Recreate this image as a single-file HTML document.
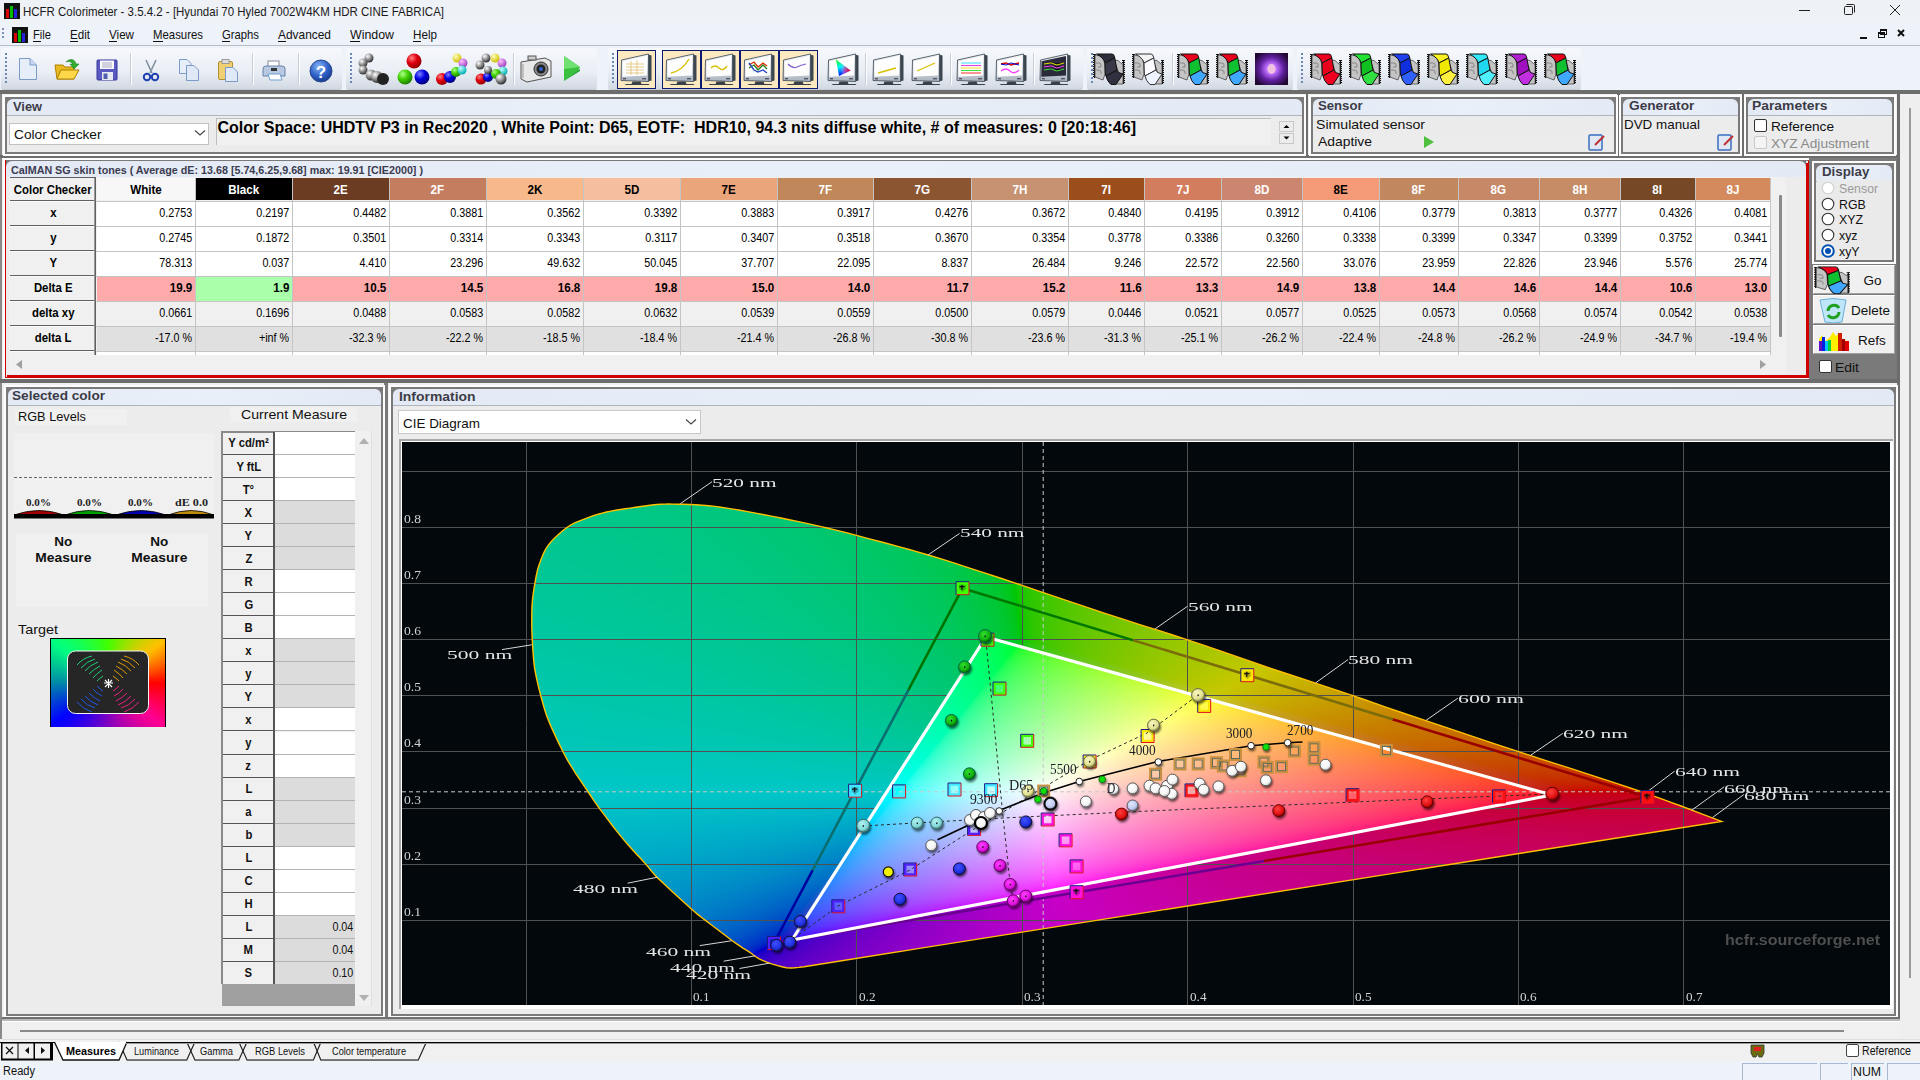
<!DOCTYPE html><html><head><meta charset="utf-8"><title>HCFR</title><style>*{margin:0;padding:0}
html,body{width:1920px;height:1080px;overflow:hidden;background:#f0f0f0;font-family:"Liberation Sans",sans-serif}
.r{position:absolute}
.t{position:absolute;white-space:pre;line-height:1;}
</style></head><body>
<div class="r" style="left:0px;top:0px;width:1920px;height:22px;background:#eef1f6"></div>
<svg class="r" style="left:4px;top:3px" width="16" height="16"><defs><linearGradient id="ig" x1="0" y1="0" x2="0" y2="1"><stop offset="0" stop-color="#fff"/><stop offset="1" stop-color="#000"/></linearGradient></defs><rect x="0" y="0" width="16" height="16" fill="#111"/><rect x="2" y="6" width="3" height="9" fill="#d00"/><rect x="6" y="3" width="3" height="12" fill="#0b0"/><rect x="10" y="6" width="3" height="9" fill="#22d"/></svg>
<svg class="r" style="left:1790px;top:0px" width="130" height="22"><line x1="9" y1="10.5" x2="20" y2="10.5" stroke="#222" stroke-width="1"/><rect x="54.5" y="6.5" width="8" height="8" fill="none" stroke="#222" stroke-width="1" rx="1"/><path d="M56.5 4.5 h7 a1 1 0 0 1 1 1 v7" fill="none" stroke="#222"/><path d="M100 5 L110 15 M110 5 L100 15" stroke="#222" stroke-width="1"/></svg>
<div class="r" style="left:0px;top:22px;width:1920px;height:23px;background:#eef3fa"></div>
<div class="r" style="left:0px;top:45px;width:1920px;height:1px;background:#b8bcc4"></div>
<svg class="r" style="left:2px;top:26px" width="30" height="18"><g fill="#7b93b8"><rect x="0" y="2" width="2" height="2"/><rect x="0" y="6" width="2" height="2"/><rect x="0" y="10" width="2" height="2"/></g><rect x="10" y="1" width="16" height="16" fill="#111"/><rect x="12" y="7" width="3" height="9" fill="#d00"/><rect x="16" y="4" width="3" height="12" fill="#0b0"/><rect x="20" y="7" width="3" height="9" fill="#22d"/></svg>
<div class="r" style="left:33px;top:41px;width:8px;height:1px;background:#111"></div>
<div class="r" style="left:70px;top:41px;width:8px;height:1px;background:#111"></div>
<div class="r" style="left:109px;top:41px;width:8px;height:1px;background:#111"></div>
<div class="r" style="left:153px;top:41px;width:10px;height:1px;background:#111"></div>
<div class="r" style="left:222px;top:41px;width:8px;height:1px;background:#111"></div>
<div class="r" style="left:278px;top:41px;width:8px;height:1px;background:#111"></div>
<div class="r" style="left:350px;top:41px;width:10px;height:1px;background:#111"></div>
<div class="r" style="left:413px;top:41px;width:8px;height:1px;background:#111"></div>
<svg class="r" style="left:1850px;top:26px" width="70" height="16"><rect x="10" y="11" width="7" height="2" fill="#111"/><rect x="28.5" y="6.5" width="6" height="5" fill="none" stroke="#111"/><rect x="30.5" y="3.5" width="6" height="5" fill="none" stroke="#111"/><rect x="28" y="6" width="7" height="2" fill="#111"/><rect x="30" y="3" width="7" height="2" fill="#111"/><path d="M48 4 L54 10 M54 4 L48 10" stroke="#111" stroke-width="2"/></svg>
<div class="r" style="left:0px;top:46px;width:1920px;height:45px;background:#eef3fa"></div>
<div class="r" style="left:1px;top:48px;width:341px;height:41px;background:linear-gradient(#f6f8fc,#e9eef5 60%,#d3d9e2);border-radius:3px;border-bottom:1px solid #c5ccd6"></div>
<svg class="r" style="left:5px;top:53px" width="3" height="32"><g fill="#6b87b5"><rect x="0" y="0" width="2" height="2"/><rect x="0" y="4" width="2" height="2"/><rect x="0" y="8" width="2" height="2"/><rect x="0" y="12" width="2" height="2"/><rect x="0" y="16" width="2" height="2"/><rect x="0" y="20" width="2" height="2"/><rect x="0" y="24" width="2" height="2"/><rect x="0" y="28" width="2" height="2"/></g></svg>
<div class="r" style="left:346px;top:48px;width:251px;height:41px;background:linear-gradient(#f6f8fc,#e9eef5 60%,#d3d9e2);border-radius:3px;border-bottom:1px solid #c5ccd6"></div>
<svg class="r" style="left:350px;top:53px" width="3" height="32"><g fill="#6b87b5"><rect x="0" y="0" width="2" height="2"/><rect x="0" y="4" width="2" height="2"/><rect x="0" y="8" width="2" height="2"/><rect x="0" y="12" width="2" height="2"/><rect x="0" y="16" width="2" height="2"/><rect x="0" y="20" width="2" height="2"/><rect x="0" y="24" width="2" height="2"/><rect x="0" y="28" width="2" height="2"/></g></svg>
<div class="r" style="left:608px;top:48px;width:475px;height:41px;background:linear-gradient(#f6f8fc,#e9eef5 60%,#d3d9e2);border-radius:3px;border-bottom:1px solid #c5ccd6"></div>
<svg class="r" style="left:612px;top:53px" width="3" height="32"><g fill="#6b87b5"><rect x="0" y="0" width="2" height="2"/><rect x="0" y="4" width="2" height="2"/><rect x="0" y="8" width="2" height="2"/><rect x="0" y="12" width="2" height="2"/><rect x="0" y="16" width="2" height="2"/><rect x="0" y="20" width="2" height="2"/><rect x="0" y="24" width="2" height="2"/><rect x="0" y="28" width="2" height="2"/></g></svg>
<div class="r" style="left:1087px;top:48px;width:206px;height:41px;background:linear-gradient(#f6f8fc,#e9eef5 60%,#d3d9e2);border-radius:3px;border-bottom:1px solid #c5ccd6"></div>
<svg class="r" style="left:1091px;top:53px" width="3" height="32"><g fill="#6b87b5"><rect x="0" y="0" width="2" height="2"/><rect x="0" y="4" width="2" height="2"/><rect x="0" y="8" width="2" height="2"/><rect x="0" y="12" width="2" height="2"/><rect x="0" y="16" width="2" height="2"/><rect x="0" y="20" width="2" height="2"/><rect x="0" y="24" width="2" height="2"/><rect x="0" y="28" width="2" height="2"/></g></svg>
<div class="r" style="left:1297px;top:48px;width:284px;height:41px;background:linear-gradient(#f6f8fc,#e9eef5 60%,#d3d9e2);border-radius:3px;border-bottom:1px solid #c5ccd6"></div>
<svg class="r" style="left:1301px;top:53px" width="3" height="32"><g fill="#6b87b5"><rect x="0" y="0" width="2" height="2"/><rect x="0" y="4" width="2" height="2"/><rect x="0" y="8" width="2" height="2"/><rect x="0" y="12" width="2" height="2"/><rect x="0" y="16" width="2" height="2"/><rect x="0" y="20" width="2" height="2"/><rect x="0" y="24" width="2" height="2"/><rect x="0" y="28" width="2" height="2"/></g></svg>
<div class="r" style="left:130px;top:53px;width:1px;height:32px;background:#c8ced8;border-right:1px solid #fff"></div>
<div class="r" style="left:252px;top:53px;width:1px;height:32px;background:#c8ced8;border-right:1px solid #fff"></div>
<div class="r" style="left:298px;top:53px;width:1px;height:32px;background:#c8ced8;border-right:1px solid #fff"></div>
<div class="r" style="left:513px;top:53px;width:1px;height:32px;background:#c8ced8;border-right:1px solid #fff"></div>
<div class="r" style="left:865px;top:53px;width:1px;height:32px;background:#c8ced8;border-right:1px solid #fff"></div>
<div class="r" style="left:950px;top:53px;width:1px;height:32px;background:#c8ced8;border-right:1px solid #fff"></div>
<div class="r" style="left:1033px;top:53px;width:1px;height:32px;background:#c8ced8;border-right:1px solid #fff"></div>
<div class="r" style="left:1172px;top:53px;width:1px;height:32px;background:#c8ced8;border-right:1px solid #fff"></div>
<div class="r" style="left:0px;top:90px;width:1920px;height:4px;background:#6d6d6d"></div>
<svg width="0" height="0" style="position:absolute"><defs>
<radialGradient id="gG" cx="0.35" cy="0.3" r="0.7"><stop offset="0" stop-color="#fff"/><stop offset="1" stop-color="#333"/></radialGradient>
<radialGradient id="gR" cx="0.35" cy="0.3" r="0.7"><stop offset="0" stop-color="#ff8080"/><stop offset="0.5" stop-color="#e00010"/><stop offset="1" stop-color="#900"/></radialGradient>
<radialGradient id="gGr" cx="0.35" cy="0.3" r="0.7"><stop offset="0" stop-color="#b0ff90"/><stop offset="0.5" stop-color="#40d000"/><stop offset="1" stop-color="#208000"/></radialGradient>
<radialGradient id="gB" cx="0.35" cy="0.3" r="0.7"><stop offset="0" stop-color="#8080ff"/><stop offset="0.5" stop-color="#0000e0"/><stop offset="1" stop-color="#000080"/></radialGradient>
<radialGradient id="gY" cx="0.35" cy="0.3" r="0.7"><stop offset="0" stop-color="#ffffc0"/><stop offset="1" stop-color="#d0c000"/></radialGradient>
<radialGradient id="gM" cx="0.35" cy="0.3" r="0.7"><stop offset="0" stop-color="#ffc0ff"/><stop offset="1" stop-color="#a040c0"/></radialGradient>
<radialGradient id="gC" cx="0.35" cy="0.3" r="0.7"><stop offset="0" stop-color="#c0ffff"/><stop offset="1" stop-color="#00b0b0"/></radialGradient>
<linearGradient id="mon" x1="0" y1="0" x2="0" y2="1"><stop offset="0" stop-color="#f4f6f8"/><stop offset="1" stop-color="#aab4c0"/></linearGradient>
<radialGradient id="gal" cx="0.5" cy="0.5" r="0.6"><stop offset="0" stop-color="#fff"/><stop offset="0.25" stop-color="#c070ff"/><stop offset="0.6" stop-color="#6020a0"/><stop offset="1" stop-color="#200830"/></radialGradient>
</defs></svg>
<svg class="r" style="left:18px;top:57px" width="20" height="24" viewBox="0 0 20 24"><path d="M1.5 1.5 H12 L18.5 8 V22.5 H1.5 Z" fill="#e6eefa" stroke="#7c9ac8"/><path d="M12 1.5 V8 H18.5" fill="#c8d8f0" stroke="#7c9ac8"/></svg>
<svg class="r" style="left:54px;top:58px" width="26" height="23" viewBox="0 0 26 23"><path d="M1 7 H9 L11 9 H20 V21 H3 Z" fill="#e8b820" stroke="#b08000"/><path d="M3 21 L7 12 H25 L20 21 Z" fill="#ffd84a" stroke="#b08000"/><path d="M12 4 C16 0 21 1 22 6 L25 6 L20 11 L16 6 L19 6 C17 3 14 3 12 4Z" fill="#30b030" stroke="#208020" stroke-width="0.6"/></svg>
<svg class="r" style="left:96px;top:59px" width="22" height="22" viewBox="0 0 22 22"><rect x="1" y="1" width="20" height="20" rx="1" fill="#5a5ac0" stroke="#34349a"/><rect x="4" y="1.5" width="14" height="8.5" fill="#f8f8ff"/><line x1="6" y1="4" x2="16" y2="4" stroke="#aab"/><line x1="6" y1="6" x2="16" y2="6" stroke="#aab"/><line x1="6" y1="8" x2="16" y2="8" stroke="#aab"/><rect x="6" y="13" width="11" height="8" fill="#e8e8f0"/><rect x="7.5" y="14.5" width="4" height="5.5" fill="#5060b0"/></svg>
<svg class="r" style="left:142px;top:59px" width="18" height="23" viewBox="0 0 18 23"><path d="M4 1 L10 14 M14 1 L8 14" stroke="#8090a0" stroke-width="1.6"/><circle cx="5" cy="18" r="3.2" fill="none" stroke="#1f40b0" stroke-width="2"/><circle cx="13" cy="18" r="3.2" fill="none" stroke="#1f40b0" stroke-width="2"/></svg>
<svg class="r" style="left:178px;top:58px" width="22" height="23" viewBox="0 0 22 23"><path d="M1.5 1.5 H9 L13 5.5 V15.5 H1.5Z" fill="#e6eefa" stroke="#7c9ac8"/><path d="M8.5 7.5 H16 L20.5 12 V22.5 H8.5Z" fill="#dfe9f8" stroke="#7c9ac8"/></svg>
<svg class="r" style="left:217px;top:58px" width="22" height="24" viewBox="0 0 22 24"><rect x="1.5" y="3.5" width="14" height="18" rx="1.5" fill="#f0d070" stroke="#b09030"/><rect x="5" y="1.5" width="7" height="4" fill="#ddd" stroke="#999"/><path d="M8.5 9.5 H16 L20.5 14 V23.5 H8.5Z" fill="#dfe9f8" stroke="#7c9ac8"/></svg>
<svg class="r" style="left:262px;top:59px" width="24" height="22" viewBox="0 0 24 22"><rect x="6" y="2" width="11" height="7" fill="#fff" stroke="#889"/><path d="M1 10 Q1 7 4 7 H20 Q23 7 23 10 V17 H1Z" fill="#b8c8e0" stroke="#6880a8"/><rect x="9" y="9" width="6" height="3" fill="#333"/><path d="M6 15 H18 L20 21 H8Z" fill="#fff" stroke="#6fa0d0"/></svg>
<svg class="r" style="left:309px;top:59px" width="24" height="24" viewBox="0 0 24 24"><defs><radialGradient id="hg" cx="0.4" cy="0.3" r="0.7"><stop offset="0" stop-color="#8ab4f8"/><stop offset="0.6" stop-color="#2f62c8"/><stop offset="1" stop-color="#1a3c90"/></radialGradient></defs><circle cx="12" cy="12" r="11" fill="url(#hg)" stroke="#2a4a90" stroke-width="1"/><text x="12" y="18.5" font-family="Liberation Sans" font-weight="bold" font-size="17" fill="#fff" text-anchor="middle">?</text></svg>
<svg class="r" style="left:357px;top:53px" width="33" height="33" viewBox="0 0 33 33"><circle cx="12" cy="5" r="4.5" fill="url(#gG)"/><circle cx="6" cy="10" r="4.5" fill="url(#gG)"/><circle cx="6" cy="17" r="4.5" fill="url(#gG)"/><circle cx="14" cy="22" r="5.5" fill="url(#gG)"/><circle cx="20" cy="24" r="6" fill="url(#gG)"/><circle cx="26" cy="26" r="6" fill="#222"/></svg>
<svg class="r" style="left:397px;top:53px" width="33" height="33" viewBox="0 0 33 33"><circle cx="17" cy="8" r="7.5" fill="url(#gR)"/><circle cx="8" cy="24" r="7.5" fill="url(#gGr)"/><circle cx="25" cy="24" r="7.5" fill="url(#gB)"/></svg>
<svg class="r" style="left:436px;top:53px" width="33" height="33" viewBox="0 0 33 33"><circle cx="21" cy="5" r="4.5" fill="url(#gY)"/><circle cx="27" cy="10" r="4.5" fill="url(#gM)"/><circle cx="6" cy="26" r="6" fill="url(#gR)"/><circle cx="14" cy="24" r="6" fill="url(#gB)"/><circle cx="20" cy="19" r="5" fill="url(#gGr)"/><circle cx="26" cy="17" r="4.5" fill="url(#gC)"/></svg>
<svg class="r" style="left:475px;top:53px" width="33" height="33" viewBox="0 0 33 33"><circle cx="11" cy="5" r="4.5" fill="url(#gG)"/><circle cx="20" cy="5" r="4.5" fill="url(#gY)"/><circle cx="27" cy="10" r="4.5" fill="url(#gM)"/><circle cx="5" cy="12" r="4.5" fill="url(#gG)"/><circle cx="28" cy="18" r="4.5" fill="url(#gC)"/><circle cx="6" cy="26" r="5.5" fill="url(#gR)"/><circle cx="13" cy="24" r="5" fill="url(#gB)"/><circle cx="21" cy="21" r="5" fill="url(#gGr)"/><circle cx="26" cy="26" r="5.5" fill="url(#gG)"/><circle cx="13" cy="17" r="4" fill="url(#gG)"/></svg>
<svg class="r" style="left:519px;top:53px" width="34" height="32" viewBox="0 0 34 32"><path d="M2 9 L26 5 L32 8 L32 24 L8 29 L2 26Z" fill="#e8e8e8" stroke="#555"/><rect x="9" y="3" width="8" height="4" fill="#ccc" stroke="#555"/><circle cx="22" cy="16" r="7" fill="#888" stroke="#333"/><circle cx="22" cy="16" r="4.5" fill="#222"/><circle cx="22" cy="16" r="2" fill="#3060d0"/><path d="M4 11 V25" stroke="#999"/></svg>
<svg class="r" style="left:563px;top:55px" width="18" height="27" viewBox="0 0 18 27"><path d="M1 1 L17 12 L15 16 L1 26Z" fill="#3cc040"/><path d="M1 1 L17 12 L1 14Z" fill="#70e070"/><path d="M1 26 L17 14 V16Z" fill="#20a030"/></svg>
<div class="r" style="left:617px;top:50px;width:39px;height:39px;background:#fde9c0;border:1px solid #0c1a70;box-sizing:border-box"></div>
<svg class="r" style="left:620px;top:53px" width="32" height="32" viewBox="0 0 32 32"><path d="M28 1.5 L31.5 2.5 V27.5 L28 28.5Z" fill="#3c4650"/><path d="M1.5 7 L28.5 1 V28.5 L1 27.5Z" fill="url(#mon)" stroke="#4a5560" stroke-width="0.9"/><path d="M2.5 8.3 L27 3 V22.5 L2.3 23.8Z" fill="#fdfdfd"/><g stroke="#e0c070" stroke-width="0.8"><path d="M6 11 H24 M6 14 H24 M6 17 H24 M6 20 H24"/><path d="M11 8 V22 M17 7 V22"/></g><rect x="3" y="25" width="3" height="1.4" fill="#556"/><rect x="22" y="25" width="4" height="1.4" fill="#556"/><path d="M12.5 28.5 H20.5 L21.5 31 H29.5 L28.5 32 H4.5 L6 31 H11.5Z" fill="#3a4048"/></svg>
<div class="r" style="left:662px;top:50px;width:39px;height:39px;background:#fde9c0;border:1px solid #0c1a70;box-sizing:border-box"></div>
<svg class="r" style="left:665px;top:53px" width="32" height="32" viewBox="0 0 32 32"><path d="M28 1.5 L31.5 2.5 V27.5 L28 28.5Z" fill="#3c4650"/><path d="M1.5 7 L28.5 1 V28.5 L1 27.5Z" fill="url(#mon)" stroke="#4a5560" stroke-width="0.9"/><path d="M2.5 8.3 L27 3 V22.5 L2.3 23.8Z" fill="#fdfdfd"/><path d="M6 20 Q17 18 24 6" stroke="#d8c000" stroke-width="1.4" fill="none"/><rect x="3" y="25" width="3" height="1.4" fill="#556"/><rect x="22" y="25" width="4" height="1.4" fill="#556"/><path d="M12.5 28.5 H20.5 L21.5 31 H29.5 L28.5 32 H4.5 L6 31 H11.5Z" fill="#3a4048"/></svg>
<div class="r" style="left:701px;top:50px;width:39px;height:39px;background:#fde9c0;border:1px solid #0c1a70;box-sizing:border-box"></div>
<svg class="r" style="left:704px;top:53px" width="32" height="32" viewBox="0 0 32 32"><path d="M28 1.5 L31.5 2.5 V27.5 L28 28.5Z" fill="#3c4650"/><path d="M1.5 7 L28.5 1 V28.5 L1 27.5Z" fill="url(#mon)" stroke="#4a5560" stroke-width="0.9"/><path d="M2.5 8.3 L27 3 V22.5 L2.3 23.8Z" fill="#fdfdfd"/><path d="M7 15 Q11 11 15 15 T23 13" stroke="#d8c000" stroke-width="1.4" fill="none"/><rect x="3" y="25" width="3" height="1.4" fill="#556"/><rect x="22" y="25" width="4" height="1.4" fill="#556"/><path d="M12.5 28.5 H20.5 L21.5 31 H29.5 L28.5 32 H4.5 L6 31 H11.5Z" fill="#3a4048"/></svg>
<div class="r" style="left:740px;top:50px;width:39px;height:39px;background:#fde9c0;border:1px solid #0c1a70;box-sizing:border-box"></div>
<svg class="r" style="left:743px;top:53px" width="32" height="32" viewBox="0 0 32 32"><path d="M28 1.5 L31.5 2.5 V27.5 L28 28.5Z" fill="#3c4650"/><path d="M1.5 7 L28.5 1 V28.5 L1 27.5Z" fill="url(#mon)" stroke="#4a5560" stroke-width="0.9"/><path d="M2.5 8.3 L27 3 V22.5 L2.3 23.8Z" fill="#fdfdfd"/><path d="M6 12 L11 9 L15 14 L20 10 L24 13" stroke="#e03000" stroke-width="1.3" fill="none"/><path d="M6 15 L11 12 L15 17 L20 12 L24 16" stroke="#208020" stroke-width="1.3" fill="none"/><path d="M6 10 L11 17 L15 19 L20 17 L24 20" stroke="#2040c0" stroke-width="1.3" fill="none"/><rect x="3" y="25" width="3" height="1.4" fill="#556"/><rect x="22" y="25" width="4" height="1.4" fill="#556"/><path d="M12.5 28.5 H20.5 L21.5 31 H29.5 L28.5 32 H4.5 L6 31 H11.5Z" fill="#3a4048"/></svg>
<div class="r" style="left:779px;top:50px;width:39px;height:39px;background:#fde9c0;border:1px solid #0c1a70;box-sizing:border-box"></div>
<svg class="r" style="left:782px;top:53px" width="32" height="32" viewBox="0 0 32 32"><path d="M28 1.5 L31.5 2.5 V27.5 L28 28.5Z" fill="#3c4650"/><path d="M1.5 7 L28.5 1 V28.5 L1 27.5Z" fill="url(#mon)" stroke="#4a5560" stroke-width="0.9"/><path d="M2.5 8.3 L27 3 V22.5 L2.3 23.8Z" fill="#fdfdfd"/><path d="M6 11 Q11 16 15 14 T24 11" stroke="#8060d0" stroke-width="1.2" fill="none"/><rect x="3" y="25" width="3" height="1.4" fill="#556"/><rect x="22" y="25" width="4" height="1.4" fill="#556"/><path d="M12.5 28.5 H20.5 L21.5 31 H29.5 L28.5 32 H4.5 L6 31 H11.5Z" fill="#3a4048"/></svg>
<svg class="r" style="left:827px;top:53px" width="32" height="32" viewBox="0 0 32 32"><path d="M28 1.5 L31.5 2.5 V27.5 L28 28.5Z" fill="#3c4650"/><path d="M1.5 7 L28.5 1 V28.5 L1 27.5Z" fill="url(#mon)" stroke="#4a5560" stroke-width="0.9"/><path d="M2.5 8.3 L27 3 V22.5 L2.3 23.8Z" fill="#fdfdfd"/><defs><linearGradient id="gt1" x1="0" y1="0" x2="0.3" y2="1"><stop offset="0" stop-color="#20ff00"/><stop offset="0.5" stop-color="#00f0ff"/><stop offset="1" stop-color="#0000ff"/></linearGradient><radialGradient id="gt2" cx="1" cy="0.65" r="0.7"><stop offset="0" stop-color="#ff0000"/><stop offset="0.6" stop-color="#ff40a0" stop-opacity="0.6"/><stop offset="1" stop-color="#fff" stop-opacity="0"/></radialGradient></defs><path d="M9 6.5 L23.5 17.5 L12 23Z" fill="url(#gt1)"/><path d="M9 6.5 L23.5 17.5 L12 23Z" fill="url(#gt2)"/><rect x="3" y="25" width="3" height="1.4" fill="#556"/><rect x="22" y="25" width="4" height="1.4" fill="#556"/><path d="M12.5 28.5 H20.5 L21.5 31 H29.5 L28.5 32 H4.5 L6 31 H11.5Z" fill="#3a4048"/></svg>
<svg class="r" style="left:872px;top:53px" width="32" height="32" viewBox="0 0 32 32"><path d="M28 1.5 L31.5 2.5 V27.5 L28 28.5Z" fill="#3c4650"/><path d="M1.5 7 L28.5 1 V28.5 L1 27.5Z" fill="url(#mon)" stroke="#4a5560" stroke-width="0.9"/><path d="M2.5 8.3 L27 3 V22.5 L2.3 23.8Z" fill="#fdfdfd"/><path d="M6 20 L24 15" stroke="#d8c000" stroke-width="1.3"/><rect x="3" y="25" width="3" height="1.4" fill="#556"/><rect x="22" y="25" width="4" height="1.4" fill="#556"/><path d="M12.5 28.5 H20.5 L21.5 31 H29.5 L28.5 32 H4.5 L6 31 H11.5Z" fill="#3a4048"/></svg>
<svg class="r" style="left:911px;top:53px" width="32" height="32" viewBox="0 0 32 32"><path d="M28 1.5 L31.5 2.5 V27.5 L28 28.5Z" fill="#3c4650"/><path d="M1.5 7 L28.5 1 V28.5 L1 27.5Z" fill="url(#mon)" stroke="#4a5560" stroke-width="0.9"/><path d="M2.5 8.3 L27 3 V22.5 L2.3 23.8Z" fill="#fdfdfd"/><path d="M6 18 L24 10" stroke="#d8c000" stroke-width="1.3"/><rect x="3" y="25" width="3" height="1.4" fill="#556"/><rect x="22" y="25" width="4" height="1.4" fill="#556"/><path d="M12.5 28.5 H20.5 L21.5 31 H29.5 L28.5 32 H4.5 L6 31 H11.5Z" fill="#3a4048"/></svg>
<svg class="r" style="left:956px;top:53px" width="32" height="32" viewBox="0 0 32 32"><path d="M28 1.5 L31.5 2.5 V27.5 L28 28.5Z" fill="#3c4650"/><path d="M1.5 7 L28.5 1 V28.5 L1 27.5Z" fill="url(#mon)" stroke="#4a5560" stroke-width="0.9"/><path d="M2.5 8.3 L27 3 V22.5 L2.3 23.8Z" fill="#fdfdfd"/><g stroke-width="1.1"><path d="M5 10 H25" stroke="#40e0ff"/><path d="M5 12.5 H25" stroke="#e040e0"/><path d="M5 15 H25" stroke="#ffe040"/><path d="M5 17.5 H25" stroke="#40e040"/><path d="M5 20 H25" stroke="#ff4040"/></g><rect x="3" y="25" width="3" height="1.4" fill="#556"/><rect x="22" y="25" width="4" height="1.4" fill="#556"/><path d="M12.5 28.5 H20.5 L21.5 31 H29.5 L28.5 32 H4.5 L6 31 H11.5Z" fill="#3a4048"/></svg>
<svg class="r" style="left:995px;top:53px" width="32" height="32" viewBox="0 0 32 32"><path d="M28 1.5 L31.5 2.5 V27.5 L28 28.5Z" fill="#3c4650"/><path d="M1.5 7 L28.5 1 V28.5 L1 27.5Z" fill="url(#mon)" stroke="#4a5560" stroke-width="0.9"/><path d="M2.5 8.3 L27 3 V22.5 L2.3 23.8Z" fill="#fdfdfd"/><path d="M6 11 L11 10 L16 12 L24 10" stroke="#d00000" stroke-width="1.3" fill="none"/><path d="M6 11 L11 12 L16 10 L24 12" stroke="#0000d0" stroke-width="1" fill="none"/><path d="M6 18 Q11 14 15 18 T24 17" stroke="#ff40ff" stroke-width="1.3" fill="none"/><rect x="3" y="25" width="3" height="1.4" fill="#556"/><rect x="22" y="25" width="4" height="1.4" fill="#556"/><path d="M12.5 28.5 H20.5 L21.5 31 H29.5 L28.5 32 H4.5 L6 31 H11.5Z" fill="#3a4048"/></svg>
<svg class="r" style="left:1039px;top:53px" width="32" height="32" viewBox="0 0 32 32"><path d="M28 1.5 L31.5 2.5 V27.5 L28 28.5Z" fill="#3c4650"/><path d="M1.5 7 L28.5 1 V28.5 L1 27.5Z" fill="url(#mon)" stroke="#4a5560" stroke-width="0.9"/><path d="M2.5 8.3 L27 3 V22.5 L2.3 23.8Z" fill="#2a2a3a"/><g stroke-width="1"><path d="M5 11 L12 10 L18 12 L25 10" stroke="#e0e000"/><path d="M5 14 L12 13 L18 15 L25 13" stroke="#ff40ff"/><path d="M5 17 L12 16 L18 18 L25 16" stroke="#40e040"/></g><rect x="3" y="25" width="3" height="1.4" fill="#556"/><rect x="22" y="25" width="4" height="1.4" fill="#556"/><path d="M12.5 28.5 H20.5 L21.5 31 H29.5 L28.5 32 H4.5 L6 31 H11.5Z" fill="#3a4048"/></svg>
<svg class="r" style="left:1093px;top:53px" width="32" height="32" viewBox="0 0 32 32"><path d="M1.5 1 V25" stroke="#111" stroke-width="3" stroke-dasharray="1,1"/><path d="M1.5 1 V25" stroke="#111" stroke-width="1.2"/><path d="M30.5 7 V31" stroke="#111" stroke-width="3" stroke-dasharray="1,1"/><path d="M30.5 7 V31" stroke="#111" stroke-width="1.2"/><path d="M2 2 L8 3 Q11 5 11.5 10 L12 21 L10 27 L2 24Z" fill="#c4c4c4" stroke="#333" stroke-width="0.7"/><path d="M21.5 7 L25 7.5 L29 11 H30 V31 H22 L26 21Z" fill="#c4c4c4" stroke="#333" stroke-width="0.7"/><path d="M3 10 H6 Q8 10 8 12 V14 H5 M3 17 H5 Q8 17 8 19 V21" fill="none" stroke="#777" stroke-width="0.8"/><path d="M3.5 1 H19 Q21 1 21.5 4 L21.8 5 L12 10 Q11 5 3.5 1Z" fill="#2c2c3a" stroke="#111" stroke-width="1"/><path d="M12 10 L21.8 5 Q23 12 24 17 L13 23 L12.4 21Z" fill="#383848" stroke="#111" stroke-width="1"/><path d="M13 23 L24 17 L25.5 19.5 L30 21 L23 31.5 H18 Q14 28 13 23Z" fill="#303040" stroke="#111" stroke-width="1"/></svg>
<svg class="r" style="left:1132px;top:53px" width="32" height="32" viewBox="0 0 32 32"><path d="M1.5 1 V25" stroke="#111" stroke-width="3" stroke-dasharray="1,1"/><path d="M1.5 1 V25" stroke="#111" stroke-width="1.2"/><path d="M30.5 7 V31" stroke="#111" stroke-width="3" stroke-dasharray="1,1"/><path d="M30.5 7 V31" stroke="#111" stroke-width="1.2"/><path d="M2 2 L8 3 Q11 5 11.5 10 L12 21 L10 27 L2 24Z" fill="#c4c4c4" stroke="#333" stroke-width="0.7"/><path d="M21.5 7 L25 7.5 L29 11 H30 V31 H22 L26 21Z" fill="#c4c4c4" stroke="#333" stroke-width="0.7"/><path d="M3 10 H6 Q8 10 8 12 V14 H5 M3 17 H5 Q8 17 8 19 V21" fill="none" stroke="#777" stroke-width="0.8"/><path d="M3.5 1 H19 Q21 1 21.5 4 L21.8 5 L12 10 Q11 5 3.5 1Z" fill="#f4f4f4" stroke="#333" stroke-width="1"/><path d="M12 10 L21.8 5 Q23 12 24 17 L13 23 L12.4 21Z" fill="#fafaff" stroke="#333" stroke-width="1"/><path d="M13 23 L24 17 L25.5 19.5 L30 21 L23 31.5 H18 Q14 28 13 23Z" fill="#eef4ff" stroke="#333" stroke-width="1"/></svg>
<svg class="r" style="left:1177px;top:53px" width="32" height="32" viewBox="0 0 32 32"><path d="M1.5 1 V25" stroke="#111" stroke-width="3" stroke-dasharray="1,1"/><path d="M1.5 1 V25" stroke="#111" stroke-width="1.2"/><path d="M30.5 7 V31" stroke="#111" stroke-width="3" stroke-dasharray="1,1"/><path d="M30.5 7 V31" stroke="#111" stroke-width="1.2"/><path d="M2 2 L8 3 Q11 5 11.5 10 L12 21 L10 27 L2 24Z" fill="#c4c4c4" stroke="#333" stroke-width="0.7"/><path d="M21.5 7 L25 7.5 L29 11 H30 V31 H22 L26 21Z" fill="#c4c4c4" stroke="#333" stroke-width="0.7"/><path d="M3 10 H6 Q8 10 8 12 V14 H5 M3 17 H5 Q8 17 8 19 V21" fill="none" stroke="#777" stroke-width="0.8"/><path d="M3.5 1 H19 Q21 1 21.5 4 L21.8 5 L12 10 Q11 5 3.5 1Z" fill="#e8001c" stroke="#111" stroke-width="1"/><path d="M12 10 L21.8 5 Q23 12 24 17 L13 23 L12.4 21Z" fill="#10c030" stroke="#111" stroke-width="1"/><path d="M13 23 L24 17 L25.5 19.5 L30 21 L23 31.5 H18 Q14 28 13 23Z" fill="#40a8ff" stroke="#111" stroke-width="1"/></svg>
<svg class="r" style="left:1216px;top:53px" width="32" height="32" viewBox="0 0 32 32"><path d="M1.5 1 V25" stroke="#111" stroke-width="3" stroke-dasharray="1,1"/><path d="M1.5 1 V25" stroke="#111" stroke-width="1.2"/><path d="M30.5 7 V31" stroke="#111" stroke-width="3" stroke-dasharray="1,1"/><path d="M30.5 7 V31" stroke="#111" stroke-width="1.2"/><path d="M2 2 L8 3 Q11 5 11.5 10 L12 21 L10 27 L2 24Z" fill="#c4c4c4" stroke="#333" stroke-width="0.7"/><path d="M21.5 7 L25 7.5 L29 11 H30 V31 H22 L26 21Z" fill="#c4c4c4" stroke="#333" stroke-width="0.7"/><path d="M3 10 H6 Q8 10 8 12 V14 H5 M3 17 H5 Q8 17 8 19 V21" fill="none" stroke="#777" stroke-width="0.8"/><path d="M3.5 1 H19 Q21 1 21.5 4 L21.8 5 L12 10 Q11 5 3.5 1Z" fill="#e8001c" stroke="#111" stroke-width="1"/><path d="M12 10 L21.8 5 Q23 12 24 17 L13 23 L12.4 21Z" fill="#10c030" stroke="#111" stroke-width="1"/><path d="M13 23 L24 17 L25.5 19.5 L30 21 L23 31.5 H18 Q14 28 13 23Z" fill="#40a8ff" stroke="#111" stroke-width="1"/></svg>
<svg class="r" style="left:1255px;top:53px" width="33" height="32" viewBox="0 0 33 32"><rect x="0" y="0" width="33" height="32" fill="url(#gal)"/><ellipse cx="16.5" cy="16" rx="4" ry="5" fill="#f0c0e0"/></svg>
<svg class="r" style="left:1310px;top:53px" width="32" height="32" viewBox="0 0 32 32"><path d="M1.5 1 V25" stroke="#111" stroke-width="3" stroke-dasharray="1,1"/><path d="M1.5 1 V25" stroke="#111" stroke-width="1.2"/><path d="M30.5 7 V31" stroke="#111" stroke-width="3" stroke-dasharray="1,1"/><path d="M30.5 7 V31" stroke="#111" stroke-width="1.2"/><path d="M2 2 L8 3 Q11 5 11.5 10 L12 21 L10 27 L2 24Z" fill="#c4c4c4" stroke="#333" stroke-width="0.7"/><path d="M21.5 7 L25 7.5 L29 11 H30 V31 H22 L26 21Z" fill="#c4c4c4" stroke="#333" stroke-width="0.7"/><path d="M3 10 H6 Q8 10 8 12 V14 H5 M3 17 H5 Q8 17 8 19 V21" fill="none" stroke="#777" stroke-width="0.8"/><path d="M3.5 1 H19 Q21 1 21.5 4 L21.8 5 L12 10 Q11 5 3.5 1Z" fill="#f00020" stroke="#111" stroke-width="1"/><path d="M12 10 L21.8 5 Q23 12 24 17 L13 23 L12.4 21Z" fill="#e8001c" stroke="#111" stroke-width="1"/><path d="M13 23 L24 17 L25.5 19.5 L30 21 L23 31.5 H18 Q14 28 13 23Z" fill="#f00020" stroke="#111" stroke-width="1"/></svg>
<svg class="r" style="left:1349px;top:53px" width="32" height="32" viewBox="0 0 32 32"><path d="M1.5 1 V25" stroke="#111" stroke-width="3" stroke-dasharray="1,1"/><path d="M1.5 1 V25" stroke="#111" stroke-width="1.2"/><path d="M30.5 7 V31" stroke="#111" stroke-width="3" stroke-dasharray="1,1"/><path d="M30.5 7 V31" stroke="#111" stroke-width="1.2"/><path d="M2 2 L8 3 Q11 5 11.5 10 L12 21 L10 27 L2 24Z" fill="#c4c4c4" stroke="#333" stroke-width="0.7"/><path d="M21.5 7 L25 7.5 L29 11 H30 V31 H22 L26 21Z" fill="#c4c4c4" stroke="#333" stroke-width="0.7"/><path d="M3 10 H6 Q8 10 8 12 V14 H5 M3 17 H5 Q8 17 8 19 V21" fill="none" stroke="#777" stroke-width="0.8"/><path d="M3.5 1 H19 Q21 1 21.5 4 L21.8 5 L12 10 Q11 5 3.5 1Z" fill="#20e030" stroke="#111" stroke-width="1"/><path d="M12 10 L21.8 5 Q23 12 24 17 L13 23 L12.4 21Z" fill="#10c020" stroke="#111" stroke-width="1"/><path d="M13 23 L24 17 L25.5 19.5 L30 21 L23 31.5 H18 Q14 28 13 23Z" fill="#30e040" stroke="#111" stroke-width="1"/></svg>
<svg class="r" style="left:1388px;top:53px" width="32" height="32" viewBox="0 0 32 32"><path d="M1.5 1 V25" stroke="#111" stroke-width="3" stroke-dasharray="1,1"/><path d="M1.5 1 V25" stroke="#111" stroke-width="1.2"/><path d="M30.5 7 V31" stroke="#111" stroke-width="3" stroke-dasharray="1,1"/><path d="M30.5 7 V31" stroke="#111" stroke-width="1.2"/><path d="M2 2 L8 3 Q11 5 11.5 10 L12 21 L10 27 L2 24Z" fill="#c4c4c4" stroke="#333" stroke-width="0.7"/><path d="M21.5 7 L25 7.5 L29 11 H30 V31 H22 L26 21Z" fill="#c4c4c4" stroke="#333" stroke-width="0.7"/><path d="M3 10 H6 Q8 10 8 12 V14 H5 M3 17 H5 Q8 17 8 19 V21" fill="none" stroke="#777" stroke-width="0.8"/><path d="M3.5 1 H19 Q21 1 21.5 4 L21.8 5 L12 10 Q11 5 3.5 1Z" fill="#2040f0" stroke="#111" stroke-width="1"/><path d="M12 10 L21.8 5 Q23 12 24 17 L13 23 L12.4 21Z" fill="#1030e0" stroke="#111" stroke-width="1"/><path d="M13 23 L24 17 L25.5 19.5 L30 21 L23 31.5 H18 Q14 28 13 23Z" fill="#3060ff" stroke="#111" stroke-width="1"/></svg>
<svg class="r" style="left:1427px;top:53px" width="32" height="32" viewBox="0 0 32 32"><path d="M1.5 1 V25" stroke="#111" stroke-width="3" stroke-dasharray="1,1"/><path d="M1.5 1 V25" stroke="#111" stroke-width="1.2"/><path d="M30.5 7 V31" stroke="#111" stroke-width="3" stroke-dasharray="1,1"/><path d="M30.5 7 V31" stroke="#111" stroke-width="1.2"/><path d="M2 2 L8 3 Q11 5 11.5 10 L12 21 L10 27 L2 24Z" fill="#c4c4c4" stroke="#333" stroke-width="0.7"/><path d="M21.5 7 L25 7.5 L29 11 H30 V31 H22 L26 21Z" fill="#c4c4c4" stroke="#333" stroke-width="0.7"/><path d="M3 10 H6 Q8 10 8 12 V14 H5 M3 17 H5 Q8 17 8 19 V21" fill="none" stroke="#777" stroke-width="0.8"/><path d="M3.5 1 H19 Q21 1 21.5 4 L21.8 5 L12 10 Q11 5 3.5 1Z" fill="#f8f020" stroke="#111" stroke-width="1"/><path d="M12 10 L21.8 5 Q23 12 24 17 L13 23 L12.4 21Z" fill="#f0e800" stroke="#111" stroke-width="1"/><path d="M13 23 L24 17 L25.5 19.5 L30 21 L23 31.5 H18 Q14 28 13 23Z" fill="#fff040" stroke="#111" stroke-width="1"/></svg>
<svg class="r" style="left:1466px;top:53px" width="32" height="32" viewBox="0 0 32 32"><path d="M1.5 1 V25" stroke="#111" stroke-width="3" stroke-dasharray="1,1"/><path d="M1.5 1 V25" stroke="#111" stroke-width="1.2"/><path d="M30.5 7 V31" stroke="#111" stroke-width="3" stroke-dasharray="1,1"/><path d="M30.5 7 V31" stroke="#111" stroke-width="1.2"/><path d="M2 2 L8 3 Q11 5 11.5 10 L12 21 L10 27 L2 24Z" fill="#c4c4c4" stroke="#333" stroke-width="0.7"/><path d="M21.5 7 L25 7.5 L29 11 H30 V31 H22 L26 21Z" fill="#c4c4c4" stroke="#333" stroke-width="0.7"/><path d="M3 10 H6 Q8 10 8 12 V14 H5 M3 17 H5 Q8 17 8 19 V21" fill="none" stroke="#777" stroke-width="0.8"/><path d="M3.5 1 H19 Q21 1 21.5 4 L21.8 5 L12 10 Q11 5 3.5 1Z" fill="#30e8f8" stroke="#111" stroke-width="1"/><path d="M12 10 L21.8 5 Q23 12 24 17 L13 23 L12.4 21Z" fill="#20d8f0" stroke="#111" stroke-width="1"/><path d="M13 23 L24 17 L25.5 19.5 L30 21 L23 31.5 H18 Q14 28 13 23Z" fill="#50f0ff" stroke="#111" stroke-width="1"/></svg>
<svg class="r" style="left:1505px;top:53px" width="32" height="32" viewBox="0 0 32 32"><path d="M1.5 1 V25" stroke="#111" stroke-width="3" stroke-dasharray="1,1"/><path d="M1.5 1 V25" stroke="#111" stroke-width="1.2"/><path d="M30.5 7 V31" stroke="#111" stroke-width="3" stroke-dasharray="1,1"/><path d="M30.5 7 V31" stroke="#111" stroke-width="1.2"/><path d="M2 2 L8 3 Q11 5 11.5 10 L12 21 L10 27 L2 24Z" fill="#c4c4c4" stroke="#333" stroke-width="0.7"/><path d="M21.5 7 L25 7.5 L29 11 H30 V31 H22 L26 21Z" fill="#c4c4c4" stroke="#333" stroke-width="0.7"/><path d="M3 10 H6 Q8 10 8 12 V14 H5 M3 17 H5 Q8 17 8 19 V21" fill="none" stroke="#777" stroke-width="0.8"/><path d="M3.5 1 H19 Q21 1 21.5 4 L21.8 5 L12 10 Q11 5 3.5 1Z" fill="#b020d0" stroke="#111" stroke-width="1"/><path d="M12 10 L21.8 5 Q23 12 24 17 L13 23 L12.4 21Z" fill="#a010c0" stroke="#111" stroke-width="1"/><path d="M13 23 L24 17 L25.5 19.5 L30 21 L23 31.5 H18 Q14 28 13 23Z" fill="#c030e0" stroke="#111" stroke-width="1"/></svg>
<svg class="r" style="left:1544px;top:53px" width="32" height="32" viewBox="0 0 32 32"><path d="M1.5 1 V25" stroke="#111" stroke-width="3" stroke-dasharray="1,1"/><path d="M1.5 1 V25" stroke="#111" stroke-width="1.2"/><path d="M30.5 7 V31" stroke="#111" stroke-width="3" stroke-dasharray="1,1"/><path d="M30.5 7 V31" stroke="#111" stroke-width="1.2"/><path d="M2 2 L8 3 Q11 5 11.5 10 L12 21 L10 27 L2 24Z" fill="#c4c4c4" stroke="#333" stroke-width="0.7"/><path d="M21.5 7 L25 7.5 L29 11 H30 V31 H22 L26 21Z" fill="#c4c4c4" stroke="#333" stroke-width="0.7"/><path d="M3 10 H6 Q8 10 8 12 V14 H5 M3 17 H5 Q8 17 8 19 V21" fill="none" stroke="#777" stroke-width="0.8"/><path d="M3.5 1 H19 Q21 1 21.5 4 L21.8 5 L12 10 Q11 5 3.5 1Z" fill="#e8001c" stroke="#111" stroke-width="1"/><path d="M12 10 L21.8 5 Q23 12 24 17 L13 23 L12.4 21Z" fill="#10c030" stroke="#111" stroke-width="1"/><path d="M13 23 L24 17 L25.5 19.5 L30 21 L23 31.5 H18 Q14 28 13 23Z" fill="#40a8ff" stroke="#111" stroke-width="1"/></svg>
<div class="r" style="left:0px;top:94px;width:1920px;height:930px;background:#f0f0f0"></div>
<div class="r" style="left:0px;top:94px;width:2px;height:945px;background:#8a8a8a"></div>
<div class="r" style="left:0px;top:155px;width:1920px;height:3px;background:#6d6d6d"></div>
<div class="r" style="left:0px;top:379px;width:1920px;height:4px;background:#6d6d6d"></div>
<div class="r" style="left:1306px;top:94px;width:2px;height:61px;background:#6d6d6d"></div>
<div class="r" style="left:1617px;top:94px;width:3px;height:61px;background:#6d6d6d"></div>
<div class="r" style="left:1742px;top:94px;width:2px;height:61px;background:#6d6d6d"></div>
<div class="r" style="left:384px;top:383px;width:4px;height:638px;background:#7a7a7a"></div>
<div class="r" style="left:1897px;top:94px;width:3px;height:927px;background:#6d6d6d"></div>
<div class="r" style="left:1900px;top:94px;width:20px;height:948px;background:#efefef"></div>
<div class="r" style="left:1909px;top:108px;width:2px;height:870px;background:#9a9a9a"></div>
<div class="r" style="left:3px;top:95px;width:1303px;height:61px;background:#fdfdfd"></div>
<div class="r" style="left:5px;top:97px;width:1299px;height:57px;background:#ececec;border:2px solid #7a7a7a;box-sizing:border-box"></div>
<div class="r" style="left:7px;top:99px;width:1295px;height:6px;background:#7a7a7a"></div>
<div class="r" style="left:7px;top:99px;width:1295px;height:17px;background:linear-gradient(90deg,#e3eaf5,#eaf0f9 50%,#e3eaf5);border-radius:6px 6px 0 0;border-bottom:1px solid #b0b5bd;box-sizing:border-box"></div>
<div class="r" style="left:9px;top:123px;width:200px;height:22px;background:#fff;border:1px solid #c2c2c2;box-sizing:border-box"></div>
<svg class="r" style="left:194px;top:129px" width="12" height="8"><path d="M1 1.5 L6 6 L11 1.5" fill="none" stroke="#444" stroke-width="1.1"/></svg>
<div class="r" style="left:216px;top:118px;width:1055px;height:27px;background:#f0f0f0;border-left:1px solid #bdbdbd;border-top:1px solid #bdbdbd;box-sizing:border-box"></div>
<div class="r" style="left:1279px;top:121px;width:15px;height:11px;background:#ececec;border:1px solid #c8c8c8;box-sizing:border-box"></div>
<div class="r" style="left:1279px;top:133px;width:15px;height:11px;background:#ececec;border:1px solid #c8c8c8;box-sizing:border-box"></div>
<svg class="r" style="left:1279px;top:121px" width="15" height="23"><path d="M4.5 7 L7.5 4 L10.5 7Z" fill="#000"/><path d="M4.5 15.5 L7.5 18.5 L10.5 15.5Z" fill="#000"/></svg>
<div class="r" style="left:1309px;top:95px;width:309px;height:61px;background:#fdfdfd"></div>
<div class="r" style="left:1311px;top:97px;width:305px;height:57px;background:#ececec;border:2px solid #7a7a7a;box-sizing:border-box"></div>
<div class="r" style="left:1313px;top:99px;width:301px;height:6px;background:#7a7a7a"></div>
<div class="r" style="left:1313px;top:99px;width:301px;height:17px;background:linear-gradient(90deg,#e3eaf5,#eaf0f9 50%,#e3eaf5);border-radius:6px 6px 0 0;border-bottom:1px solid #b0b5bd;box-sizing:border-box"></div>
<div class="r" style="left:1314px;top:116px;width:300px;height:18px;background:#ebebeb"></div>
<svg class="r" style="left:1422px;top:135px" width="14" height="14"><path d="M2 1 L12 7 L2 13Z" fill="#50c040"/></svg>
<svg class="r" style="left:1587px;top:132px" width="20" height="20"><rect x="2" y="3" width="13" height="15" rx="1" fill="#dfe8f4" stroke="#3a6ec0" stroke-width="1.5"/><path d="M8 13 L17 4" stroke="#c03030" stroke-width="2"/></svg>
<div class="r" style="left:1619px;top:95px;width:123px;height:61px;background:#fdfdfd"></div>
<div class="r" style="left:1621px;top:97px;width:119px;height:57px;background:#ececec;border:2px solid #7a7a7a;box-sizing:border-box"></div>
<div class="r" style="left:1623px;top:99px;width:115px;height:6px;background:#7a7a7a"></div>
<div class="r" style="left:1623px;top:99px;width:115px;height:17px;background:linear-gradient(90deg,#e3eaf5,#eaf0f9 50%,#e3eaf5);border-radius:6px 6px 0 0;border-bottom:1px solid #b0b5bd;box-sizing:border-box"></div>
<svg class="r" style="left:1716px;top:132px" width="20" height="20"><rect x="2" y="3" width="13" height="15" rx="1" fill="#dfe8f4" stroke="#3a6ec0" stroke-width="1.5"/><path d="M8 13 L17 4" stroke="#c03030" stroke-width="2"/></svg>
<div class="r" style="left:1744px;top:95px;width:152px;height:61px;background:#fdfdfd"></div>
<div class="r" style="left:1746px;top:97px;width:148px;height:57px;background:#ececec;border:2px solid #7a7a7a;box-sizing:border-box"></div>
<div class="r" style="left:1748px;top:99px;width:144px;height:6px;background:#7a7a7a"></div>
<div class="r" style="left:1748px;top:99px;width:144px;height:17px;background:linear-gradient(90deg,#e3eaf5,#eaf0f9 50%,#e3eaf5);border-radius:6px 6px 0 0;border-bottom:1px solid #b0b5bd;box-sizing:border-box"></div>
<div class="r" style="left:1754px;top:119px;width:13px;height:13px;background:#fff;border:1px solid #333;border-radius:2px;box-sizing:border-box"></div>
<div class="r" style="left:1754px;top:136px;width:13px;height:13px;background:#f4f4f4;border:1px solid #c8c8c8;border-radius:2px;box-sizing:border-box"></div>
<div class="r" style="left:3px;top:158px;width:1809px;height:221px;background:#fdfdfd"></div>
<div class="r" style="left:5px;top:160px;width:1804px;height:218px;background:#ececec;border:1px solid #d00000;border-top-color:#7a7a7a;box-sizing:border-box"></div>
<div class="r" style="left:6px;top:161px;width:1800px;height:6px;background:#7a7a7a"></div>
<div class="r" style="left:6px;top:161px;width:1800px;height:16px;background:linear-gradient(90deg,#e3eaf5,#eaf0f9 50%,#e3eaf5);border-radius:6px 6px 0 0"></div>
<div class="r" style="left:5px;top:160px;width:1px;height:20px;background:#d00000"></div>
<div class="r" style="left:7px;top:375px;width:1800px;height:2px;background:#d00000"></div>
<div class="r" style="left:1806px;top:163px;width:2px;height:214px;background:#d00000"></div>
<div class="r" style="left:9px;top:177px;width:1777px;height:178px;background:#f0f0f0"></div>
<div class="r" style="left:10px;top:178px;width:86px;height:177px;background:#f0f0f0"></div>
<div class="r" style="left:10px;top:200px;width:86px;height:1px;background:#606060"></div>
<div class="r" style="left:10px;top:201px;width:86px;height:1px;background:#fafafa"></div>
<div class="r" style="left:10px;top:225px;width:86px;height:1px;background:#606060"></div>
<div class="r" style="left:10px;top:226px;width:86px;height:1px;background:#fafafa"></div>
<div class="r" style="left:10px;top:250px;width:86px;height:1px;background:#606060"></div>
<div class="r" style="left:10px;top:251px;width:86px;height:1px;background:#fafafa"></div>
<div class="r" style="left:10px;top:275px;width:86px;height:1px;background:#606060"></div>
<div class="r" style="left:10px;top:276px;width:86px;height:1px;background:#fafafa"></div>
<div class="r" style="left:10px;top:300px;width:86px;height:1px;background:#606060"></div>
<div class="r" style="left:10px;top:301px;width:86px;height:1px;background:#fafafa"></div>
<div class="r" style="left:10px;top:325px;width:86px;height:1px;background:#606060"></div>
<div class="r" style="left:10px;top:326px;width:86px;height:1px;background:#fafafa"></div>
<div class="r" style="left:10px;top:350px;width:86px;height:1px;background:#606060"></div>
<div class="r" style="left:10px;top:351px;width:86px;height:1px;background:#fafafa"></div>
<div class="r" style="left:10px;top:177px;width:86px;height:1px;background:#606060"></div>
<div class="r" style="left:95px;top:178px;width:1px;height:177px;background:#606060"></div>
<div class="r" style="left:94px;top:178px;width:1px;height:177px;background:#9a9a9a"></div>
<div class="r" style="left:97px;top:178px;width:98px;height:22px;background:#f7f7f7"></div>
<div class="r" style="left:97px;top:202px;width:98px;height:74px;background:#fff"></div>
<div class="r" style="left:97px;top:276px;width:98px;height:25px;background:#ffaaaa"></div>
<div class="r" style="left:97px;top:301px;width:98px;height:25px;background:#f0f0f0"></div>
<div class="r" style="left:97px;top:326px;width:98px;height:25px;background:#e0e0e0"></div>
<div class="r" style="left:97px;top:351px;width:98px;height:4px;background:#fff"></div>
<div class="r" style="left:196px;top:178px;width:96px;height:22px;background:#000000"></div>
<div class="r" style="left:196px;top:202px;width:96px;height:74px;background:#fff"></div>
<div class="r" style="left:196px;top:276px;width:96px;height:25px;background:#aaffaa"></div>
<div class="r" style="left:196px;top:301px;width:96px;height:25px;background:#f0f0f0"></div>
<div class="r" style="left:196px;top:326px;width:96px;height:25px;background:#e0e0e0"></div>
<div class="r" style="left:196px;top:351px;width:96px;height:4px;background:#fff"></div>
<div class="r" style="left:293px;top:178px;width:96px;height:22px;background:#6b3b22"></div>
<div class="r" style="left:293px;top:202px;width:96px;height:74px;background:#fff"></div>
<div class="r" style="left:293px;top:276px;width:96px;height:25px;background:#ffaaaa"></div>
<div class="r" style="left:293px;top:301px;width:96px;height:25px;background:#f0f0f0"></div>
<div class="r" style="left:293px;top:326px;width:96px;height:25px;background:#e0e0e0"></div>
<div class="r" style="left:293px;top:351px;width:96px;height:4px;background:#fff"></div>
<div class="r" style="left:390px;top:178px;width:96px;height:22px;background:#c47e5f"></div>
<div class="r" style="left:390px;top:202px;width:96px;height:74px;background:#fff"></div>
<div class="r" style="left:390px;top:276px;width:96px;height:25px;background:#ffaaaa"></div>
<div class="r" style="left:390px;top:301px;width:96px;height:25px;background:#f0f0f0"></div>
<div class="r" style="left:390px;top:326px;width:96px;height:25px;background:#e0e0e0"></div>
<div class="r" style="left:390px;top:351px;width:96px;height:4px;background:#fff"></div>
<div class="r" style="left:487px;top:178px;width:96px;height:22px;background:#f7b98b"></div>
<div class="r" style="left:487px;top:202px;width:96px;height:74px;background:#fff"></div>
<div class="r" style="left:487px;top:276px;width:96px;height:25px;background:#ffaaaa"></div>
<div class="r" style="left:487px;top:301px;width:96px;height:25px;background:#f0f0f0"></div>
<div class="r" style="left:487px;top:326px;width:96px;height:25px;background:#e0e0e0"></div>
<div class="r" style="left:487px;top:351px;width:96px;height:4px;background:#fff"></div>
<div class="r" style="left:584px;top:178px;width:96px;height:22px;background:#f5bf9f"></div>
<div class="r" style="left:584px;top:202px;width:96px;height:74px;background:#fff"></div>
<div class="r" style="left:584px;top:276px;width:96px;height:25px;background:#ffaaaa"></div>
<div class="r" style="left:584px;top:301px;width:96px;height:25px;background:#f0f0f0"></div>
<div class="r" style="left:584px;top:326px;width:96px;height:25px;background:#e0e0e0"></div>
<div class="r" style="left:584px;top:351px;width:96px;height:4px;background:#fff"></div>
<div class="r" style="left:681px;top:178px;width:96px;height:22px;background:#eba57a"></div>
<div class="r" style="left:681px;top:202px;width:96px;height:74px;background:#fff"></div>
<div class="r" style="left:681px;top:276px;width:96px;height:25px;background:#ffaaaa"></div>
<div class="r" style="left:681px;top:301px;width:96px;height:25px;background:#f0f0f0"></div>
<div class="r" style="left:681px;top:326px;width:96px;height:25px;background:#e0e0e0"></div>
<div class="r" style="left:681px;top:351px;width:96px;height:4px;background:#fff"></div>
<div class="r" style="left:778px;top:178px;width:95px;height:22px;background:#c0875a"></div>
<div class="r" style="left:778px;top:202px;width:95px;height:74px;background:#fff"></div>
<div class="r" style="left:778px;top:276px;width:95px;height:25px;background:#ffaaaa"></div>
<div class="r" style="left:778px;top:301px;width:95px;height:25px;background:#f0f0f0"></div>
<div class="r" style="left:778px;top:326px;width:95px;height:25px;background:#e0e0e0"></div>
<div class="r" style="left:778px;top:351px;width:95px;height:4px;background:#fff"></div>
<div class="r" style="left:874px;top:178px;width:97px;height:22px;background:#8a5530"></div>
<div class="r" style="left:874px;top:202px;width:97px;height:74px;background:#fff"></div>
<div class="r" style="left:874px;top:276px;width:97px;height:25px;background:#ffaaaa"></div>
<div class="r" style="left:874px;top:301px;width:97px;height:25px;background:#f0f0f0"></div>
<div class="r" style="left:874px;top:326px;width:97px;height:25px;background:#e0e0e0"></div>
<div class="r" style="left:874px;top:351px;width:97px;height:4px;background:#fff"></div>
<div class="r" style="left:972px;top:178px;width:96px;height:22px;background:#c69272"></div>
<div class="r" style="left:972px;top:202px;width:96px;height:74px;background:#fff"></div>
<div class="r" style="left:972px;top:276px;width:96px;height:25px;background:#ffaaaa"></div>
<div class="r" style="left:972px;top:301px;width:96px;height:25px;background:#f0f0f0"></div>
<div class="r" style="left:972px;top:326px;width:96px;height:25px;background:#e0e0e0"></div>
<div class="r" style="left:972px;top:351px;width:96px;height:4px;background:#fff"></div>
<div class="r" style="left:1069px;top:178px;width:75px;height:22px;background:#9b4e1c"></div>
<div class="r" style="left:1069px;top:202px;width:75px;height:74px;background:#fff"></div>
<div class="r" style="left:1069px;top:276px;width:75px;height:25px;background:#ffaaaa"></div>
<div class="r" style="left:1069px;top:301px;width:75px;height:25px;background:#f0f0f0"></div>
<div class="r" style="left:1069px;top:326px;width:75px;height:25px;background:#e0e0e0"></div>
<div class="r" style="left:1069px;top:351px;width:75px;height:4px;background:#fff"></div>
<div class="r" style="left:1145px;top:178px;width:76px;height:22px;background:#d27e5e"></div>
<div class="r" style="left:1145px;top:202px;width:76px;height:74px;background:#fff"></div>
<div class="r" style="left:1145px;top:276px;width:76px;height:25px;background:#ffaaaa"></div>
<div class="r" style="left:1145px;top:301px;width:76px;height:25px;background:#f0f0f0"></div>
<div class="r" style="left:1145px;top:326px;width:76px;height:25px;background:#e0e0e0"></div>
<div class="r" style="left:1145px;top:351px;width:76px;height:4px;background:#fff"></div>
<div class="r" style="left:1222px;top:178px;width:80px;height:22px;background:#cc8670"></div>
<div class="r" style="left:1222px;top:202px;width:80px;height:74px;background:#fff"></div>
<div class="r" style="left:1222px;top:276px;width:80px;height:25px;background:#ffaaaa"></div>
<div class="r" style="left:1222px;top:301px;width:80px;height:25px;background:#f0f0f0"></div>
<div class="r" style="left:1222px;top:326px;width:80px;height:25px;background:#e0e0e0"></div>
<div class="r" style="left:1222px;top:351px;width:80px;height:4px;background:#fff"></div>
<div class="r" style="left:1303px;top:178px;width:76px;height:22px;background:#f49a76"></div>
<div class="r" style="left:1303px;top:202px;width:76px;height:74px;background:#fff"></div>
<div class="r" style="left:1303px;top:276px;width:76px;height:25px;background:#ffaaaa"></div>
<div class="r" style="left:1303px;top:301px;width:76px;height:25px;background:#f0f0f0"></div>
<div class="r" style="left:1303px;top:326px;width:76px;height:25px;background:#e0e0e0"></div>
<div class="r" style="left:1303px;top:351px;width:76px;height:4px;background:#fff"></div>
<div class="r" style="left:1380px;top:178px;width:78px;height:22px;background:#c18860"></div>
<div class="r" style="left:1380px;top:202px;width:78px;height:74px;background:#fff"></div>
<div class="r" style="left:1380px;top:276px;width:78px;height:25px;background:#ffaaaa"></div>
<div class="r" style="left:1380px;top:301px;width:78px;height:25px;background:#f0f0f0"></div>
<div class="r" style="left:1380px;top:326px;width:78px;height:25px;background:#e0e0e0"></div>
<div class="r" style="left:1380px;top:351px;width:78px;height:4px;background:#fff"></div>
<div class="r" style="left:1459px;top:178px;width:80px;height:22px;background:#c68866"></div>
<div class="r" style="left:1459px;top:202px;width:80px;height:74px;background:#fff"></div>
<div class="r" style="left:1459px;top:276px;width:80px;height:25px;background:#ffaaaa"></div>
<div class="r" style="left:1459px;top:301px;width:80px;height:25px;background:#f0f0f0"></div>
<div class="r" style="left:1459px;top:326px;width:80px;height:25px;background:#e0e0e0"></div>
<div class="r" style="left:1459px;top:351px;width:80px;height:4px;background:#fff"></div>
<div class="r" style="left:1540px;top:178px;width:80px;height:22px;background:#c58c66"></div>
<div class="r" style="left:1540px;top:202px;width:80px;height:74px;background:#fff"></div>
<div class="r" style="left:1540px;top:276px;width:80px;height:25px;background:#ffaaaa"></div>
<div class="r" style="left:1540px;top:301px;width:80px;height:25px;background:#f0f0f0"></div>
<div class="r" style="left:1540px;top:326px;width:80px;height:25px;background:#e0e0e0"></div>
<div class="r" style="left:1540px;top:351px;width:80px;height:4px;background:#fff"></div>
<div class="r" style="left:1621px;top:178px;width:74px;height:22px;background:#774825"></div>
<div class="r" style="left:1621px;top:202px;width:74px;height:74px;background:#fff"></div>
<div class="r" style="left:1621px;top:276px;width:74px;height:25px;background:#ffaaaa"></div>
<div class="r" style="left:1621px;top:301px;width:74px;height:25px;background:#f0f0f0"></div>
<div class="r" style="left:1621px;top:326px;width:74px;height:25px;background:#e0e0e0"></div>
<div class="r" style="left:1621px;top:351px;width:74px;height:4px;background:#fff"></div>
<div class="r" style="left:1696px;top:178px;width:74px;height:22px;background:#d48a5c"></div>
<div class="r" style="left:1696px;top:202px;width:74px;height:74px;background:#fff"></div>
<div class="r" style="left:1696px;top:276px;width:74px;height:25px;background:#ffaaaa"></div>
<div class="r" style="left:1696px;top:301px;width:74px;height:25px;background:#f0f0f0"></div>
<div class="r" style="left:1696px;top:326px;width:74px;height:25px;background:#e0e0e0"></div>
<div class="r" style="left:1696px;top:351px;width:74px;height:4px;background:#fff"></div>
<div class="r" style="left:96px;top:201px;width:1674px;height:1px;background:#c4c4c4"></div>
<div class="r" style="left:96px;top:226px;width:1674px;height:1px;background:#c4c4c4"></div>
<div class="r" style="left:96px;top:251px;width:1674px;height:1px;background:#c4c4c4"></div>
<div class="r" style="left:96px;top:276px;width:1674px;height:1px;background:#c4c4c4"></div>
<div class="r" style="left:96px;top:301px;width:1674px;height:1px;background:#c4c4c4"></div>
<div class="r" style="left:96px;top:326px;width:1674px;height:1px;background:#c4c4c4"></div>
<div class="r" style="left:96px;top:351px;width:1674px;height:1px;background:#c4c4c4"></div>
<div class="r" style="left:195px;top:178px;width:1px;height:177px;background:#c4c4c4"></div>
<div class="r" style="left:292px;top:178px;width:1px;height:177px;background:#c4c4c4"></div>
<div class="r" style="left:389px;top:178px;width:1px;height:177px;background:#c4c4c4"></div>
<div class="r" style="left:486px;top:178px;width:1px;height:177px;background:#c4c4c4"></div>
<div class="r" style="left:583px;top:178px;width:1px;height:177px;background:#c4c4c4"></div>
<div class="r" style="left:680px;top:178px;width:1px;height:177px;background:#c4c4c4"></div>
<div class="r" style="left:777px;top:178px;width:1px;height:177px;background:#c4c4c4"></div>
<div class="r" style="left:873px;top:178px;width:1px;height:177px;background:#c4c4c4"></div>
<div class="r" style="left:971px;top:178px;width:1px;height:177px;background:#c4c4c4"></div>
<div class="r" style="left:1068px;top:178px;width:1px;height:177px;background:#c4c4c4"></div>
<div class="r" style="left:1144px;top:178px;width:1px;height:177px;background:#c4c4c4"></div>
<div class="r" style="left:1221px;top:178px;width:1px;height:177px;background:#c4c4c4"></div>
<div class="r" style="left:1302px;top:178px;width:1px;height:177px;background:#c4c4c4"></div>
<div class="r" style="left:1379px;top:178px;width:1px;height:177px;background:#c4c4c4"></div>
<div class="r" style="left:1458px;top:178px;width:1px;height:177px;background:#c4c4c4"></div>
<div class="r" style="left:1539px;top:178px;width:1px;height:177px;background:#c4c4c4"></div>
<div class="r" style="left:1620px;top:178px;width:1px;height:177px;background:#c4c4c4"></div>
<div class="r" style="left:1695px;top:178px;width:1px;height:177px;background:#c4c4c4"></div>
<div class="r" style="left:1770px;top:178px;width:1px;height:177px;background:#c4c4c4"></div>
<div class="r" style="left:1771px;top:178px;width:15px;height:177px;background:#f0f0f0"></div>
<div class="r" style="left:1779px;top:195px;width:3px;height:142px;background:#8a8a8a;border-radius:1px"></div>
<div class="r" style="left:9px;top:355px;width:1777px;height:19px;background:#f0f0f0"></div>
<svg class="r" style="left:14px;top:359px" width="10" height="11"><path d="M8 1 L2 5.5 L8 10Z" fill="#a0a0a0"/></svg>
<svg class="r" style="left:1758px;top:359px" width="10" height="11"><path d="M2 1 L8 5.5 L2 10Z" fill="#a0a0a0"/></svg>
<div class="r" style="left:1809px;top:158px;width:88px;height:221px;background:#7a7a7a"></div>
<div class="r" style="left:1812px;top:161px;width:84px;height:103px;background:#fdfdfd"></div>
<div class="r" style="left:1812px;top:161px;width:84px;height:103px;background:#fdfdfd"></div>
<div class="r" style="left:1814px;top:163px;width:80px;height:99px;background:#ececec;border:2px solid #7a7a7a;box-sizing:border-box"></div>
<div class="r" style="left:1816px;top:165px;width:76px;height:6px;background:#7a7a7a"></div>
<div class="r" style="left:1816px;top:165px;width:76px;height:17px;background:linear-gradient(90deg,#e3eaf5,#eaf0f9 50%,#e3eaf5);border-radius:6px 6px 0 0;border-bottom:1px solid #b0b5bd;box-sizing:border-box"></div>
<div class="r" style="left:1817px;top:180px;width:75px;height:15px;background:#eaeaea"></div>
<svg class="r" style="left:1821px;top:180.7px" width="14" height="14"><circle cx="7" cy="7" r="5.8" fill="#fff" stroke="#cfcfcf" stroke-width="1.1"/></svg>
<div class="r" style="left:1817px;top:196px;width:75px;height:15px;background:#eaeaea"></div>
<svg class="r" style="left:1821px;top:196.5px" width="14" height="14"><circle cx="7" cy="7" r="5.8" fill="#fff" stroke="#333" stroke-width="1.1"/></svg>
<div class="r" style="left:1817px;top:212px;width:75px;height:15px;background:#eaeaea"></div>
<svg class="r" style="left:1821px;top:212.3px" width="14" height="14"><circle cx="7" cy="7" r="5.8" fill="#fff" stroke="#333" stroke-width="1.1"/></svg>
<div class="r" style="left:1817px;top:228px;width:75px;height:15px;background:#eaeaea"></div>
<svg class="r" style="left:1821px;top:228.1px" width="14" height="14"><circle cx="7" cy="7" r="5.8" fill="#fff" stroke="#333" stroke-width="1.1"/></svg>
<div class="r" style="left:1817px;top:243px;width:75px;height:15px;background:#eaeaea"></div>
<svg class="r" style="left:1821px;top:243.9px" width="14" height="14"><circle cx="7" cy="7" r="5.8" fill="#fff" stroke="#0050b0" stroke-width="2"/><circle cx="7" cy="7" r="3" fill="#0050b0"/></svg>
<div class="r" style="left:1813px;top:265px;width:82px;height:29px;background:#f0f0f0;border-right:1px solid #a0a0a0;border-bottom:1px solid #a0a0a0;border-top:1px solid #fff;border-left:1px solid #fff;box-sizing:border-box"></div>
<svg class="r" style="left:1814px;top:266px" width="36" height="28" viewBox="0 0 32 32" preserveAspectRatio="none"><path d="M1.5 1 V25" stroke="#111" stroke-width="3" stroke-dasharray="1,1"/><path d="M1.5 1 V25" stroke="#111" stroke-width="1.2"/><path d="M30.5 7 V31" stroke="#111" stroke-width="3" stroke-dasharray="1,1"/><path d="M30.5 7 V31" stroke="#111" stroke-width="1.2"/><path d="M2 2 L8 3 Q11 5 11.5 10 L12 21 L10 27 L2 24Z" fill="#c4c4c4" stroke="#333" stroke-width="0.7"/><path d="M21.5 7 L25 7.5 L29 11 H30 V31 H22 L26 21Z" fill="#c4c4c4" stroke="#333" stroke-width="0.7"/><path d="M3 10 H6 Q8 10 8 12 V14 H5 M3 17 H5 Q8 17 8 19 V21" fill="none" stroke="#777" stroke-width="0.8"/><path d="M3.5 1 H19 Q21 1 21.5 4 L21.8 5 L12 10 Q11 5 3.5 1Z" fill="#e8001c" stroke="#111" stroke-width="1"/><path d="M12 10 L21.8 5 Q23 12 24 17 L13 23 L12.4 21Z" fill="#10c030" stroke="#111" stroke-width="1"/><path d="M13 23 L24 17 L25.5 19.5 L30 21 L23 31.5 H18 Q14 28 13 23Z" fill="#40a8ff" stroke="#111" stroke-width="1"/></svg>
<div class="r" style="left:1813px;top:295px;width:82px;height:29px;background:#f0f0f0;border-right:1px solid #a0a0a0;border-bottom:1px solid #a0a0a0;border-top:1px solid #fff;border-left:1px solid #fff;box-sizing:border-box"></div>
<svg class="r" style="left:1819px;top:297px" width="30" height="26"><path d="M1 3 Q14 0 27 3 L23 25 Q14 27 6 25Z" fill="#bfe6f8" stroke="#6ab0d8"/><path d="M9 14 A6 6 0 0 1 20 11 M20 15 A6 6 0 0 1 9 18" stroke="#20a020" stroke-width="3" fill="none"/></svg>
<div class="r" style="left:1813px;top:325px;width:82px;height:29px;background:#f0f0f0;border-right:1px solid #a0a0a0;border-bottom:1px solid #a0a0a0;border-top:1px solid #fff;border-left:1px solid #fff;box-sizing:border-box"></div>
<svg class="r" style="left:1818px;top:327px" width="34" height="25"><path d="M1 24 V12 L4 8 L6 15 L9 13 L12 10 L15 5 L18 9 L21 6 L24 15 L27 13 L31 15 V24Z" fill="#ffee00"/><rect x="1" y="14" width="3" height="10" fill="#6010c0"/><rect x="4" y="10" width="3" height="14" fill="#0020e0"/><rect x="7" y="14" width="3" height="10" fill="#00c0ff"/><rect x="10" y="13" width="3" height="11" fill="#00d040"/><rect x="20" y="6" width="4" height="18" fill="#d02000"/><rect x="24" y="12" width="3" height="12" fill="#a00000"/><rect x="27" y="14" width="4" height="10" fill="#e00000"/></svg>
<div class="r" style="left:1819px;top:360px;width:13px;height:13px;background:#fff;border:1px solid #333;border-radius:2px;box-sizing:border-box"></div>
<div class="r" style="left:4px;top:385px;width:381px;height:633px;background:#fdfdfd"></div>
<div class="r" style="left:6px;top:387px;width:377px;height:629px;background:#ececec;border:2px solid #7a7a7a;box-sizing:border-box"></div>
<div class="r" style="left:8px;top:389px;width:373px;height:6px;background:#7a7a7a"></div>
<div class="r" style="left:8px;top:389px;width:373px;height:17px;background:linear-gradient(90deg,#e3eaf5,#eaf0f9 50%,#e3eaf5);border-radius:6px 6px 0 0;border-bottom:1px solid #b0b5bd;box-sizing:border-box"></div>
<div class="r" style="left:15px;top:409px;width:112px;height:16px;background:#f0f0f0"></div>
<div class="r" style="left:230px;top:407px;width:127px;height:15px;background:#f0f0f0"></div>
<div class="r" style="left:14px;top:433px;width:200px;height:85px;background:#f0f0f0"></div>
<svg class="r" style="left:14px;top:476px" width="200" height="3"><line x1="0" y1="1.5" x2="200" y2="1.5" stroke="#666" stroke-dasharray="3,2"/></svg>
<svg class="r" style="left:14px;top:506px" width="200" height="13"><g stroke="#000" stroke-width="0.8"><path d="M0 9 Q25 0 50 9Z" fill="#a00000"/><path d="M51 9 Q75 0 100 9Z" fill="#00a000"/><path d="M102 9 Q127 0 152 9Z" fill="#0000b0"/><path d="M154 9 Q177 0 200 9Z" fill="#c08c10"/></g><rect x="0" y="8" width="200" height="4.5" fill="#000"/></svg>
<div class="r" style="left:16px;top:533px;width:192px;height:74px;background:#f0f0f0"></div>
<div class="r" style="left:50px;top:638px;width:116px;height:89px;background:conic-gradient(from 0deg at 50% 50%,#40ff00 0deg,#ffc000 53deg,#ff0000 90deg,#ff0090 127deg,#8000c0 180deg,#0000ff 233deg,#0088a8 270deg,#00ff80 307deg,#40ff00 360deg);border:1px solid #000;border-bottom:none;box-sizing:border-box"></div>
<svg class="r" style="left:50px;top:638px" width="116" height="89">
<rect x="17.5" y="13" width="81" height="62.5" rx="8" fill="#262626" stroke="#f4f4f4" stroke-width="1"/>
<g fill="none" stroke-width="0.9">
<path d="M27 27 Q33 20 42 18 M31 30 Q37 23 45 21 M35 33 Q40 27 48 24 M39 36 Q44 31 50 28 M43 40 Q46 36 52 32 M47 43 Q50 40 53 38" stroke="#20e080"/>
<path d="M89 27 Q83 20 74 18 M85 30 Q79 23 71 21 M81 33 Q76 27 68 24 M77 36 Q72 31 66 28 M73 40 Q70 36 64 32 M69 43 Q66 40 63 38" stroke="#f0a800"/>
<path d="M27 64 Q33 71 42 74 M31 61 Q37 68 45 70 M35 58 Q40 64 48 67 M39 55 Q44 60 50 63 M43 51 Q46 55 52 58 M47 48 Q50 51 53 53" stroke="#2060ff"/>
<path d="M89 64 Q83 71 74 74 M85 61 Q79 68 71 70 M81 58 Q76 64 68 67 M77 55 Q72 60 66 63 M73 51 Q70 55 64 58 M69 48 Q66 51 63 53" stroke="#ff2090"/>
</g>
<path d="M54 45 L63 45 M58.5 41 L58.5 50 M55 42 L62 49 M62 42 L55 49" stroke="#fff" stroke-width="1.1"/>
</svg>
<div class="r" style="left:221px;top:431px;width:134px;height:553px;background:#f0f0f0;border-left:2px solid #8a8a8a;border-top:2px solid #8a8a8a;box-sizing:border-box"></div>
<div class="r" style="left:274px;top:432px;width:81px;height:23px;background:#fff"></div>
<div class="r" style="left:223px;top:454px;width:132px;height:1px;background:#b4b4b4"></div>
<div class="r" style="left:223px;top:454px;width:51px;height:1px;background:#555"></div>
<div class="r" style="left:274px;top:455px;width:81px;height:23px;background:#fff"></div>
<div class="r" style="left:223px;top:477px;width:132px;height:1px;background:#b4b4b4"></div>
<div class="r" style="left:223px;top:477px;width:51px;height:1px;background:#555"></div>
<div class="r" style="left:274px;top:478px;width:81px;height:23px;background:#fff"></div>
<div class="r" style="left:223px;top:500px;width:132px;height:1px;background:#b4b4b4"></div>
<div class="r" style="left:223px;top:500px;width:51px;height:1px;background:#555"></div>
<div class="r" style="left:274px;top:501px;width:81px;height:23px;background:#dcdcdc"></div>
<div class="r" style="left:223px;top:523px;width:132px;height:1px;background:#b4b4b4"></div>
<div class="r" style="left:223px;top:523px;width:51px;height:1px;background:#555"></div>
<div class="r" style="left:274px;top:524px;width:81px;height:23px;background:#dcdcdc"></div>
<div class="r" style="left:223px;top:546px;width:132px;height:1px;background:#b4b4b4"></div>
<div class="r" style="left:223px;top:546px;width:51px;height:1px;background:#555"></div>
<div class="r" style="left:274px;top:547px;width:81px;height:23px;background:#dcdcdc"></div>
<div class="r" style="left:223px;top:569px;width:132px;height:1px;background:#b4b4b4"></div>
<div class="r" style="left:223px;top:569px;width:51px;height:1px;background:#555"></div>
<div class="r" style="left:274px;top:570px;width:81px;height:23px;background:#fff"></div>
<div class="r" style="left:223px;top:592px;width:132px;height:1px;background:#b4b4b4"></div>
<div class="r" style="left:223px;top:592px;width:51px;height:1px;background:#555"></div>
<div class="r" style="left:274px;top:593px;width:81px;height:23px;background:#fff"></div>
<div class="r" style="left:223px;top:615px;width:132px;height:1px;background:#b4b4b4"></div>
<div class="r" style="left:223px;top:615px;width:51px;height:1px;background:#555"></div>
<div class="r" style="left:274px;top:616px;width:81px;height:23px;background:#fff"></div>
<div class="r" style="left:223px;top:638px;width:132px;height:1px;background:#b4b4b4"></div>
<div class="r" style="left:223px;top:638px;width:51px;height:1px;background:#555"></div>
<div class="r" style="left:274px;top:639px;width:81px;height:23px;background:#dcdcdc"></div>
<div class="r" style="left:223px;top:661px;width:132px;height:1px;background:#b4b4b4"></div>
<div class="r" style="left:223px;top:661px;width:51px;height:1px;background:#555"></div>
<div class="r" style="left:274px;top:662px;width:81px;height:23px;background:#dcdcdc"></div>
<div class="r" style="left:223px;top:684px;width:132px;height:1px;background:#b4b4b4"></div>
<div class="r" style="left:223px;top:684px;width:51px;height:1px;background:#555"></div>
<div class="r" style="left:274px;top:685px;width:81px;height:23px;background:#dcdcdc"></div>
<div class="r" style="left:223px;top:707px;width:132px;height:1px;background:#b4b4b4"></div>
<div class="r" style="left:223px;top:707px;width:51px;height:1px;background:#555"></div>
<div class="r" style="left:274px;top:708px;width:81px;height:23px;background:#fff"></div>
<div class="r" style="left:223px;top:730px;width:132px;height:1px;background:#b4b4b4"></div>
<div class="r" style="left:223px;top:730px;width:51px;height:1px;background:#555"></div>
<div class="r" style="left:274px;top:732px;width:81px;height:23px;background:#fff"></div>
<div class="r" style="left:223px;top:754px;width:132px;height:1px;background:#b4b4b4"></div>
<div class="r" style="left:223px;top:754px;width:51px;height:1px;background:#555"></div>
<div class="r" style="left:274px;top:755px;width:81px;height:23px;background:#fff"></div>
<div class="r" style="left:223px;top:777px;width:132px;height:1px;background:#b4b4b4"></div>
<div class="r" style="left:223px;top:777px;width:51px;height:1px;background:#555"></div>
<div class="r" style="left:274px;top:778px;width:81px;height:23px;background:#dcdcdc"></div>
<div class="r" style="left:223px;top:800px;width:132px;height:1px;background:#b4b4b4"></div>
<div class="r" style="left:223px;top:800px;width:51px;height:1px;background:#555"></div>
<div class="r" style="left:274px;top:801px;width:81px;height:23px;background:#dcdcdc"></div>
<div class="r" style="left:223px;top:823px;width:132px;height:1px;background:#b4b4b4"></div>
<div class="r" style="left:223px;top:823px;width:51px;height:1px;background:#555"></div>
<div class="r" style="left:274px;top:824px;width:81px;height:23px;background:#dcdcdc"></div>
<div class="r" style="left:223px;top:846px;width:132px;height:1px;background:#b4b4b4"></div>
<div class="r" style="left:223px;top:846px;width:51px;height:1px;background:#555"></div>
<div class="r" style="left:274px;top:847px;width:81px;height:23px;background:#fff"></div>
<div class="r" style="left:223px;top:869px;width:132px;height:1px;background:#b4b4b4"></div>
<div class="r" style="left:223px;top:869px;width:51px;height:1px;background:#555"></div>
<div class="r" style="left:274px;top:870px;width:81px;height:23px;background:#fff"></div>
<div class="r" style="left:223px;top:892px;width:132px;height:1px;background:#b4b4b4"></div>
<div class="r" style="left:223px;top:892px;width:51px;height:1px;background:#555"></div>
<div class="r" style="left:274px;top:893px;width:81px;height:23px;background:#fff"></div>
<div class="r" style="left:223px;top:915px;width:132px;height:1px;background:#b4b4b4"></div>
<div class="r" style="left:223px;top:915px;width:51px;height:1px;background:#555"></div>
<div class="r" style="left:274px;top:916px;width:81px;height:23px;background:#dcdcdc"></div>
<div class="r" style="left:223px;top:938px;width:132px;height:1px;background:#b4b4b4"></div>
<div class="r" style="left:223px;top:938px;width:51px;height:1px;background:#555"></div>
<div class="r" style="left:274px;top:939px;width:81px;height:23px;background:#dcdcdc"></div>
<div class="r" style="left:223px;top:961px;width:132px;height:1px;background:#b4b4b4"></div>
<div class="r" style="left:223px;top:961px;width:51px;height:1px;background:#555"></div>
<div class="r" style="left:274px;top:962px;width:81px;height:23px;background:#dcdcdc"></div>
<div class="r" style="left:223px;top:984px;width:132px;height:1px;background:#b4b4b4"></div>
<div class="r" style="left:223px;top:984px;width:51px;height:1px;background:#555"></div>
<div class="r" style="left:273px;top:432px;width:2px;height:552px;background:#555"></div>
<div class="r" style="left:222px;top:984px;width:133px;height:22px;background:#a0a0a0"></div>
<div class="r" style="left:355px;top:431px;width:17px;height:575px;background:#f0f0f0;border-right:1px solid #e0e0e0;box-sizing:border-box"></div>
<svg class="r" style="left:358px;top:436px" width="12" height="10"><path d="M1 8 L6 2 L11 8Z" fill="#b0b0b0"/></svg>
<svg class="r" style="left:358px;top:993px" width="12" height="10"><path d="M1 2 L6 8 L11 2Z" fill="#b0b0b0"/></svg>
<div class="r" style="left:389px;top:385px;width:1509px;height:633px;background:#fdfdfd"></div>
<div class="r" style="left:391px;top:387px;width:1505px;height:629px;background:#ececec;border:2px solid #7a7a7a;box-sizing:border-box"></div>
<div class="r" style="left:393px;top:389px;width:1501px;height:6px;background:#7a7a7a"></div>
<div class="r" style="left:393px;top:389px;width:1501px;height:17px;background:linear-gradient(90deg,#e3eaf5,#eaf0f9 50%,#e3eaf5);border-radius:6px 6px 0 0;border-bottom:1px solid #b0b5bd;box-sizing:border-box"></div>
<div class="r" style="left:398px;top:410px;width:303px;height:24px;background:#fff;border:1px solid #c8c8c8;box-sizing:border-box"></div>
<svg class="r" style="left:685px;top:418px" width="12" height="8"><path d="M1 1.5 L6 6 L11 1.5" fill="none" stroke="#444" stroke-width="1.1"/></svg>
<div class="r" style="left:399px;top:439px;width:1494px;height:570px;background:#fff;border-top:2px solid #a8a8a8;border-left:2px solid #a8a8a8;box-sizing:border-box"></div>
<div class="r" style="left:402px;top:442px;width:1488px;height:563px;background:#02080b"></div>
<div class="r" style="left:402px;top:442px;width:1488px;height:563px;overflow:hidden;background:#02080b">
<svg class="r" style="left:0;top:0" width="1488" height="563"><defs><clipPath id="cl"><path d="M402.0 524.7 L399.7 525.0 L396.6 525.4 L392.8 525.8 L388.7 526.0 L384.5 525.7 L379.9 524.8 L374.8 523.4 L369.6 521.8 L364.7 520.1 L360.5 518.4 L357.2 516.8 L354.5 515.2 L352.2 513.5 L349.9 511.8 L347.5 510.1 L345.2 508.6 L343.1 507.4 L340.9 506.1 L338.1 504.2 L334.3 501.6 L329.0 497.7 L322.4 492.8 L315.5 487.5 L308.9 482.5 L303.5 478.4 L299.9 475.7 L297.6 473.9 L295.6 472.4 L293.2 470.3 L289.4 467.0 L283.6 461.8 L276.4 455.3 L268.8 448.2 L261.6 441.6 L256.0 436.2 L252.4 432.5 L250.1 429.9 L248.4 427.8 L246.5 425.4 L243.7 422.1 L239.8 417.8 L235.3 413.0 L230.5 407.7 L225.6 402.2 L220.8 396.6 L215.9 390.6 L210.7 384.0 L205.7 377.4 L201.0 371.1 L197.0 365.8 L194.0 361.6 L191.7 358.3 L189.8 355.4 L187.9 352.5 L185.6 349.1 L182.9 345.1 L180.0 340.8 L177.0 336.4 L174.1 332.1 L171.5 328.0 L169.3 324.5 L167.4 321.4 L165.6 318.4 L163.7 314.9 L161.4 310.5 L158.6 304.9 L155.4 298.4 L152.2 291.4 L149.1 284.6 L146.5 278.4 L144.4 272.9 L142.7 267.8 L141.3 262.9 L140.0 258.2 L138.7 253.5 L137.5 248.8 L136.3 244.2 L135.3 239.7 L134.4 235.5 L133.6 231.7 L133.0 228.4 L132.5 225.7 L132.2 223.1 L131.9 220.5 L131.6 217.4 L131.3 213.8 L131.0 209.9 L130.7 205.8 L130.5 201.8 L130.3 198.0 L130.1 194.6 L130.0 191.6 L129.9 188.5 L129.8 185.3 L129.8 181.8 L129.8 177.8 L129.8 173.4 L129.9 168.8 L130.0 164.3 L130.3 160.0 L130.7 156.0 L131.2 152.1 L131.7 148.3 L132.3 144.6 L133.0 140.9 L133.6 137.4 L134.2 134.0 L134.9 130.6 L135.7 127.1 L136.9 123.5 L138.3 119.6 L139.8 115.4 L141.6 111.2 L143.7 107.1 L146.3 103.1 L149.5 99.2 L153.2 95.4 L157.2 91.7 L161.3 88.3 L165.2 85.3 L169.0 82.9 L172.7 80.9 L176.4 79.3 L180.2 77.8 L184.1 76.3 L188.0 74.8 L192.0 73.5 L196.1 72.2 L200.3 71.1 L204.6 70.0 L209.1 69.1 L213.7 68.3 L218.4 67.5 L223.2 66.8 L228.2 66.1 L233.4 65.3 L239.0 64.5 L244.5 63.7 L249.9 63.0 L254.9 62.5 L259.2 62.2 L263.0 62.1 L266.7 62.0 L270.7 62.1 L275.4 62.2 L281.0 62.3 L287.2 62.5 L293.8 62.8 L300.4 63.2 L306.9 63.7 L313.0 64.4 L318.9 65.2 L324.9 66.1 L331.2 67.1 L338.0 68.3 L345.6 69.6 L353.7 71.1 L362.2 72.7 L370.7 74.4 L379.0 76.0 L387.2 77.7 L395.4 79.4 L403.5 81.1 L411.5 82.9 L419.2 84.6 L426.0 86.2 L431.9 87.6 L438.0 89.1 L445.2 90.9 L454.5 93.4 L466.5 96.6 L480.6 100.3 L495.8 104.4 L511.3 108.7 L526.2 113.0 L540.0 117.2 L553.4 121.4 L566.9 125.8 L581.6 130.6 L598.0 136.0 L617.1 142.4 L638.4 149.6 L660.5 157.1 L682.2 164.4 L702.2 171.1 L720.2 176.9 L737.0 182.3 L753.2 187.4 L769.2 192.5 L785.5 197.8 L802.2 203.4 L818.9 209.1 L835.6 214.9 L852.3 220.7 L868.8 226.3 L885.7 232.0 L903.1 237.7 L920.1 243.4 L936.0 248.7 L950.1 253.4 L960.7 257.0 L968.3 259.7 L975.4 262.2 L984.4 265.4 L998.0 270.0 L1017.1 276.4 L1040.1 284.1 L1065.3 292.6 L1091.3 301.3 L1116.5 309.6 L1141.6 317.8 L1167.7 326.2 L1193.7 334.6 L1218.2 342.6 L1240.2 350.0 L1260.2 357.1 L1279.0 364.0 L1295.7 370.3 L1309.5 375.6 L1319.6 379.4 Z"/></clipPath><clipPath id="ct"><path d="M1150.0 353.0 L584.0 195.0 L390.0 498.0 Z"/></clipPath></defs><g clip-path="url(#cl)" shape-rendering="crispEdges"><rect x="110" y="40" width="24" height="24" fill="#00c78c"/><rect x="134" y="40" width="24" height="24" fill="#00c78a"/><rect x="158" y="40" width="24" height="24" fill="#00c788"/><rect x="182" y="40" width="24" height="24" fill="#00c786"/><rect x="206" y="40" width="24" height="24" fill="#00c784"/><rect x="230" y="40" width="24" height="24" fill="#00c782"/><rect x="254" y="40" width="24" height="24" fill="#00c77f"/><rect x="278" y="40" width="24" height="24" fill="#00c77d"/><rect x="302" y="40" width="24" height="24" fill="#00c77a"/><rect x="326" y="40" width="24" height="24" fill="#00c777"/><rect x="350" y="40" width="24" height="24" fill="#00c773"/><rect x="374" y="40" width="24" height="24" fill="#00c76f"/><rect x="398" y="40" width="24" height="24" fill="#00c76b"/><rect x="422" y="40" width="24" height="24" fill="#00c766"/><rect x="446" y="40" width="24" height="24" fill="#00c760"/><rect x="470" y="40" width="24" height="24" fill="#00c75a"/><rect x="494" y="40" width="24" height="24" fill="#00c752"/><rect x="518" y="40" width="24" height="24" fill="#00c748"/><rect x="542" y="40" width="24" height="24" fill="#00c73c"/><rect x="566" y="40" width="24" height="24" fill="#00c72a"/><rect x="590" y="40" width="24" height="24" fill="#09c700"/><rect x="614" y="40" width="24" height="24" fill="#2fc700"/><rect x="638" y="40" width="24" height="24" fill="#41c700"/><rect x="662" y="40" width="24" height="24" fill="#4ec700"/><rect x="686" y="40" width="24" height="24" fill="#5ac700"/><rect x="710" y="40" width="24" height="24" fill="#63c700"/><rect x="734" y="40" width="24" height="24" fill="#6cc700"/><rect x="758" y="40" width="24" height="24" fill="#74c700"/><rect x="782" y="40" width="24" height="24" fill="#7bc700"/><rect x="806" y="40" width="24" height="24" fill="#81c700"/><rect x="830" y="40" width="24" height="24" fill="#88c700"/><rect x="854" y="40" width="24" height="24" fill="#8ec700"/><rect x="878" y="40" width="24" height="24" fill="#93c700"/><rect x="902" y="40" width="24" height="24" fill="#98c700"/><rect x="926" y="40" width="24" height="24" fill="#9ec700"/><rect x="950" y="40" width="24" height="24" fill="#a2c700"/><rect x="974" y="40" width="24" height="24" fill="#a7c700"/><rect x="998" y="40" width="24" height="24" fill="#acc700"/><rect x="1022" y="40" width="24" height="24" fill="#b0c700"/><rect x="1046" y="40" width="24" height="24" fill="#b4c700"/><rect x="1070" y="40" width="24" height="24" fill="#b8c700"/><rect x="1094" y="40" width="24" height="24" fill="#bcc700"/><rect x="1118" y="40" width="24" height="24" fill="#c0c700"/><rect x="1142" y="40" width="24" height="24" fill="#c4c700"/><rect x="1166" y="40" width="24" height="24" fill="#c7c600"/><rect x="1190" y="40" width="24" height="24" fill="#c7c200"/><rect x="1214" y="40" width="24" height="24" fill="#c7bf00"/><rect x="1238" y="40" width="24" height="24" fill="#c7bc00"/><rect x="1262" y="40" width="24" height="24" fill="#c7b900"/><rect x="1286" y="40" width="24" height="24" fill="#c7b600"/><rect x="1310" y="40" width="24" height="24" fill="#c7b300"/><rect x="110" y="64" width="24" height="24" fill="#00c78f"/><rect x="134" y="64" width="24" height="24" fill="#00c78e"/><rect x="158" y="64" width="24" height="24" fill="#00c78c"/><rect x="182" y="64" width="24" height="24" fill="#00c78a"/><rect x="206" y="64" width="24" height="24" fill="#00c788"/><rect x="230" y="64" width="24" height="24" fill="#00c785"/><rect x="254" y="64" width="24" height="24" fill="#00c783"/><rect x="278" y="64" width="24" height="24" fill="#00c780"/><rect x="302" y="64" width="24" height="24" fill="#00c77d"/><rect x="326" y="64" width="24" height="24" fill="#00c77a"/><rect x="350" y="64" width="24" height="24" fill="#00c777"/><rect x="374" y="64" width="24" height="24" fill="#00c773"/><rect x="398" y="64" width="24" height="24" fill="#00c76e"/><rect x="422" y="64" width="24" height="24" fill="#00c76a"/><rect x="446" y="64" width="24" height="24" fill="#00c764"/><rect x="470" y="64" width="24" height="24" fill="#00c75d"/><rect x="494" y="64" width="24" height="24" fill="#00c756"/><rect x="518" y="64" width="24" height="24" fill="#00c74c"/><rect x="542" y="64" width="24" height="24" fill="#00c740"/><rect x="566" y="64" width="24" height="24" fill="#00c72f"/><rect x="590" y="64" width="24" height="24" fill="#00c707"/><rect x="614" y="64" width="24" height="24" fill="#2ec700"/><rect x="638" y="64" width="24" height="24" fill="#41c700"/><rect x="662" y="64" width="24" height="24" fill="#50c700"/><rect x="686" y="64" width="24" height="24" fill="#5cc700"/><rect x="710" y="64" width="24" height="24" fill="#66c700"/><rect x="734" y="64" width="24" height="24" fill="#6fc700"/><rect x="758" y="64" width="24" height="24" fill="#77c700"/><rect x="782" y="64" width="24" height="24" fill="#7fc700"/><rect x="806" y="64" width="24" height="24" fill="#85c700"/><rect x="830" y="64" width="24" height="24" fill="#8cc700"/><rect x="854" y="64" width="24" height="24" fill="#92c700"/><rect x="878" y="64" width="24" height="24" fill="#98c700"/><rect x="902" y="64" width="24" height="24" fill="#9ec700"/><rect x="926" y="64" width="24" height="24" fill="#a3c700"/><rect x="950" y="64" width="24" height="24" fill="#a8c700"/><rect x="974" y="64" width="24" height="24" fill="#adc700"/><rect x="998" y="64" width="24" height="24" fill="#b2c700"/><rect x="1022" y="64" width="24" height="24" fill="#b6c700"/><rect x="1046" y="64" width="24" height="24" fill="#bbc700"/><rect x="1070" y="64" width="24" height="24" fill="#bfc700"/><rect x="1094" y="64" width="24" height="24" fill="#c3c700"/><rect x="1118" y="64" width="24" height="24" fill="#c7c700"/><rect x="1142" y="64" width="24" height="24" fill="#c7c300"/><rect x="1166" y="64" width="24" height="24" fill="#c7bf00"/><rect x="1190" y="64" width="24" height="24" fill="#c7bc00"/><rect x="1214" y="64" width="24" height="24" fill="#c7b900"/><rect x="1238" y="64" width="24" height="24" fill="#c7b500"/><rect x="1262" y="64" width="24" height="24" fill="#c7b300"/><rect x="1286" y="64" width="24" height="24" fill="#c7b000"/><rect x="1310" y="64" width="24" height="24" fill="#c7ad00"/><rect x="110" y="88" width="24" height="24" fill="#00c792"/><rect x="134" y="88" width="24" height="24" fill="#00c791"/><rect x="158" y="88" width="24" height="24" fill="#00c78f"/><rect x="182" y="88" width="24" height="24" fill="#00c78d"/><rect x="206" y="88" width="24" height="24" fill="#00c78b"/><rect x="230" y="88" width="24" height="24" fill="#00c789"/><rect x="254" y="88" width="24" height="24" fill="#00c786"/><rect x="278" y="88" width="24" height="24" fill="#00c784"/><rect x="302" y="88" width="24" height="24" fill="#00c781"/><rect x="326" y="88" width="24" height="24" fill="#00c77e"/><rect x="350" y="88" width="24" height="24" fill="#00c77a"/><rect x="374" y="88" width="24" height="24" fill="#00c777"/><rect x="398" y="88" width="24" height="24" fill="#00c772"/><rect x="422" y="88" width="24" height="24" fill="#00c76e"/><rect x="446" y="88" width="24" height="24" fill="#00c768"/><rect x="470" y="88" width="24" height="24" fill="#00c762"/><rect x="494" y="88" width="24" height="24" fill="#00c75a"/><rect x="518" y="88" width="24" height="24" fill="#00c751"/><rect x="542" y="88" width="24" height="24" fill="#00c745"/><rect x="566" y="88" width="24" height="24" fill="#00c734"/><rect x="590" y="88" width="24" height="24" fill="#00c714"/><rect x="614" y="88" width="24" height="24" fill="#2cc700"/><rect x="638" y="88" width="24" height="24" fill="#42c700"/><rect x="662" y="88" width="24" height="24" fill="#52c700"/><rect x="686" y="88" width="24" height="24" fill="#5ec700"/><rect x="710" y="88" width="24" height="24" fill="#69c700"/><rect x="734" y="88" width="24" height="24" fill="#72c700"/><rect x="758" y="88" width="24" height="24" fill="#7bc700"/><rect x="782" y="88" width="24" height="24" fill="#83c700"/><rect x="806" y="88" width="24" height="24" fill="#8ac700"/><rect x="830" y="88" width="24" height="24" fill="#91c700"/><rect x="854" y="88" width="24" height="24" fill="#97c700"/><rect x="878" y="88" width="24" height="24" fill="#9ec700"/><rect x="902" y="88" width="24" height="24" fill="#a3c700"/><rect x="926" y="88" width="24" height="24" fill="#a9c700"/><rect x="950" y="88" width="24" height="24" fill="#aec700"/><rect x="974" y="88" width="24" height="24" fill="#b3c700"/><rect x="998" y="88" width="24" height="24" fill="#b8c700"/><rect x="1022" y="88" width="24" height="24" fill="#bdc700"/><rect x="1046" y="88" width="24" height="24" fill="#c2c700"/><rect x="1070" y="88" width="24" height="24" fill="#c6c700"/><rect x="1094" y="88" width="24" height="24" fill="#c7c300"/><rect x="1118" y="88" width="24" height="24" fill="#c7bf00"/><rect x="1142" y="88" width="24" height="24" fill="#c7bc00"/><rect x="1166" y="88" width="24" height="24" fill="#c7b800"/><rect x="1190" y="88" width="24" height="24" fill="#c7b500"/><rect x="1214" y="88" width="24" height="24" fill="#c7b200"/><rect x="1238" y="88" width="24" height="24" fill="#c7af00"/><rect x="1262" y="88" width="24" height="24" fill="#c7ac00"/><rect x="1286" y="88" width="24" height="24" fill="#c7a900"/><rect x="1310" y="88" width="24" height="24" fill="#c7a700"/><rect x="110" y="112" width="24" height="24" fill="#00c796"/><rect x="134" y="112" width="24" height="24" fill="#00c794"/><rect x="158" y="112" width="24" height="24" fill="#00c793"/><rect x="182" y="112" width="24" height="24" fill="#00c791"/><rect x="206" y="112" width="24" height="24" fill="#00c78f"/><rect x="230" y="112" width="24" height="24" fill="#00c78d"/><rect x="254" y="112" width="24" height="24" fill="#00c78a"/><rect x="278" y="112" width="24" height="24" fill="#00c788"/><rect x="302" y="112" width="24" height="24" fill="#00c785"/><rect x="326" y="112" width="24" height="24" fill="#00c782"/><rect x="350" y="112" width="24" height="24" fill="#00c77f"/><rect x="374" y="112" width="24" height="24" fill="#00c77b"/><rect x="398" y="112" width="24" height="24" fill="#00c777"/><rect x="422" y="112" width="24" height="24" fill="#00c772"/><rect x="446" y="112" width="24" height="24" fill="#00c76d"/><rect x="470" y="112" width="24" height="24" fill="#00c766"/><rect x="494" y="112" width="24" height="24" fill="#00c75f"/><rect x="518" y="112" width="24" height="24" fill="#00c756"/><rect x="542" y="112" width="24" height="24" fill="#00c74a"/><rect x="566" y="112" width="24" height="24" fill="#00c73a"/><rect x="590" y="112" width="24" height="24" fill="#00c71d"/><rect x="614" y="112" width="24" height="24" fill="#2ac700"/><rect x="638" y="112" width="24" height="24" fill="#43c700"/><rect x="662" y="112" width="24" height="24" fill="#54c700"/><rect x="686" y="112" width="24" height="24" fill="#61c700"/><rect x="710" y="112" width="24" height="24" fill="#6cc700"/><rect x="734" y="112" width="24" height="24" fill="#76c700"/><rect x="758" y="112" width="24" height="24" fill="#80c700"/><rect x="782" y="112" width="24" height="24" fill="#88c700"/><rect x="806" y="112" width="24" height="24" fill="#90c700"/><rect x="830" y="112" width="24" height="24" fill="#97c700"/><rect x="854" y="112" width="24" height="24" fill="#9ec700"/><rect x="878" y="112" width="24" height="24" fill="#a4c700"/><rect x="902" y="112" width="24" height="24" fill="#aac700"/><rect x="926" y="112" width="24" height="24" fill="#b0c700"/><rect x="950" y="112" width="24" height="24" fill="#b5c700"/><rect x="974" y="112" width="24" height="24" fill="#bbc700"/><rect x="998" y="112" width="24" height="24" fill="#c0c700"/><rect x="1022" y="112" width="24" height="24" fill="#c5c700"/><rect x="1046" y="112" width="24" height="24" fill="#c7c400"/><rect x="1070" y="112" width="24" height="24" fill="#c7c000"/><rect x="1094" y="112" width="24" height="24" fill="#c7bb00"/><rect x="1118" y="112" width="24" height="24" fill="#c7b800"/><rect x="1142" y="112" width="24" height="24" fill="#c7b400"/><rect x="1166" y="112" width="24" height="24" fill="#c7b000"/><rect x="1190" y="112" width="24" height="24" fill="#c7ad00"/><rect x="1214" y="112" width="24" height="24" fill="#c7aa00"/><rect x="1238" y="112" width="24" height="24" fill="#c7a700"/><rect x="1262" y="112" width="24" height="24" fill="#c7a500"/><rect x="1286" y="112" width="24" height="24" fill="#c7a200"/><rect x="1310" y="112" width="24" height="24" fill="#c7a000"/><rect x="110" y="136" width="24" height="24" fill="#00c79a"/><rect x="134" y="136" width="24" height="24" fill="#00c798"/><rect x="158" y="136" width="24" height="24" fill="#00c796"/><rect x="182" y="136" width="24" height="24" fill="#00c795"/><rect x="206" y="136" width="24" height="24" fill="#00c793"/><rect x="230" y="136" width="24" height="24" fill="#00c791"/><rect x="254" y="136" width="24" height="24" fill="#00c78f"/><rect x="278" y="136" width="24" height="24" fill="#00c78c"/><rect x="302" y="136" width="24" height="24" fill="#00c789"/><rect x="326" y="136" width="24" height="24" fill="#00c786"/><rect x="350" y="136" width="24" height="24" fill="#00c783"/><rect x="374" y="136" width="24" height="24" fill="#00c780"/><rect x="398" y="136" width="24" height="24" fill="#00c77c"/><rect x="422" y="136" width="24" height="24" fill="#00c777"/><rect x="446" y="136" width="24" height="24" fill="#00c772"/><rect x="470" y="136" width="24" height="24" fill="#00c76b"/><rect x="494" y="136" width="24" height="24" fill="#00c764"/><rect x="518" y="136" width="24" height="24" fill="#00c75b"/><rect x="542" y="136" width="24" height="24" fill="#00c74f"/><rect x="566" y="136" width="24" height="24" fill="#00c740"/><rect x="590" y="136" width="24" height="24" fill="#00c725"/><rect x="614" y="136" width="24" height="24" fill="#27c700"/><rect x="638" y="136" width="24" height="24" fill="#44c700"/><rect x="662" y="136" width="24" height="24" fill="#56c700"/><rect x="686" y="136" width="24" height="24" fill="#64c700"/><rect x="710" y="136" width="24" height="24" fill="#71c700"/><rect x="734" y="136" width="24" height="24" fill="#7bc700"/><rect x="758" y="136" width="24" height="24" fill="#85c700"/><rect x="782" y="136" width="24" height="24" fill="#8ec700"/><rect x="806" y="136" width="24" height="24" fill="#96c700"/><rect x="830" y="136" width="24" height="24" fill="#9dc700"/><rect x="854" y="136" width="24" height="24" fill="#a5c700"/><rect x="878" y="136" width="24" height="24" fill="#abc700"/><rect x="902" y="136" width="24" height="24" fill="#b2c700"/><rect x="926" y="136" width="24" height="24" fill="#b8c700"/><rect x="950" y="136" width="24" height="24" fill="#bec700"/><rect x="974" y="136" width="24" height="24" fill="#c4c700"/><rect x="998" y="136" width="24" height="24" fill="#c7c500"/><rect x="1022" y="136" width="24" height="24" fill="#c7c000"/><rect x="1046" y="136" width="24" height="24" fill="#c7bb00"/><rect x="1070" y="136" width="24" height="24" fill="#c7b700"/><rect x="1094" y="136" width="24" height="24" fill="#c7b300"/><rect x="1118" y="136" width="24" height="24" fill="#c7af00"/><rect x="1142" y="136" width="24" height="24" fill="#c7ac00"/><rect x="1166" y="136" width="24" height="24" fill="#c7a800"/><rect x="1190" y="136" width="24" height="24" fill="#c7a500"/><rect x="1214" y="136" width="24" height="24" fill="#c7a200"/><rect x="1238" y="136" width="24" height="24" fill="#c7a000"/><rect x="1262" y="136" width="24" height="24" fill="#c79d00"/><rect x="1286" y="136" width="24" height="24" fill="#c79a00"/><rect x="1310" y="136" width="24" height="24" fill="#c79800"/><rect x="110" y="160" width="24" height="24" fill="#00c79e"/><rect x="134" y="160" width="24" height="24" fill="#00c79c"/><rect x="158" y="160" width="24" height="24" fill="#00c79b"/><rect x="182" y="160" width="24" height="24" fill="#00c799"/><rect x="206" y="160" width="24" height="24" fill="#00c797"/><rect x="230" y="160" width="24" height="24" fill="#00c795"/><rect x="254" y="160" width="24" height="24" fill="#00c793"/><rect x="278" y="160" width="24" height="24" fill="#00c791"/><rect x="302" y="160" width="24" height="24" fill="#00c78e"/><rect x="326" y="160" width="24" height="24" fill="#00c78b"/><rect x="350" y="160" width="24" height="24" fill="#00c788"/><rect x="374" y="160" width="24" height="24" fill="#00c785"/><rect x="398" y="160" width="24" height="24" fill="#00c781"/><rect x="422" y="160" width="24" height="24" fill="#00c77c"/><rect x="446" y="160" width="24" height="24" fill="#00c777"/><rect x="470" y="160" width="24" height="24" fill="#00c771"/><rect x="494" y="160" width="24" height="24" fill="#00c76a"/><rect x="518" y="160" width="24" height="24" fill="#00c761"/><rect x="542" y="160" width="24" height="24" fill="#00c756"/><rect x="566" y="160" width="24" height="24" fill="#00c746"/><rect x="590" y="160" width="24" height="24" fill="#00c72d"/><rect x="614" y="160" width="24" height="24" fill="#24c700"/><rect x="638" y="160" width="24" height="24" fill="#45c700"/><rect x="662" y="160" width="24" height="24" fill="#59c700"/><rect x="686" y="160" width="24" height="24" fill="#68c700"/><rect x="710" y="160" width="24" height="24" fill="#76c700"/><rect x="734" y="160" width="24" height="24" fill="#81c700"/><rect x="758" y="160" width="24" height="24" fill="#8bc700"/><rect x="782" y="160" width="24" height="24" fill="#95c700"/><rect x="806" y="160" width="24" height="24" fill="#9dc700"/><rect x="830" y="160" width="24" height="24" fill="#a6c700"/><rect x="854" y="160" width="24" height="24" fill="#adc700"/><rect x="878" y="160" width="24" height="24" fill="#b4c700"/><rect x="902" y="160" width="24" height="24" fill="#bbc700"/><rect x="926" y="160" width="24" height="24" fill="#c2c700"/><rect x="950" y="160" width="24" height="24" fill="#c7c600"/><rect x="974" y="160" width="24" height="24" fill="#c7c000"/><rect x="998" y="160" width="24" height="24" fill="#c7bb00"/><rect x="1022" y="160" width="24" height="24" fill="#c7b600"/><rect x="1046" y="160" width="24" height="24" fill="#c7b200"/><rect x="1070" y="160" width="24" height="24" fill="#c7ad00"/><rect x="1094" y="160" width="24" height="24" fill="#c7aa00"/><rect x="1118" y="160" width="24" height="24" fill="#c7a600"/><rect x="1142" y="160" width="24" height="24" fill="#c7a300"/><rect x="1166" y="160" width="24" height="24" fill="#c7a000"/><rect x="1190" y="160" width="24" height="24" fill="#c79d00"/><rect x="1214" y="160" width="24" height="24" fill="#c79a00"/><rect x="1238" y="160" width="24" height="24" fill="#c79700"/><rect x="1262" y="160" width="24" height="24" fill="#c79500"/><rect x="1286" y="160" width="24" height="24" fill="#c79200"/><rect x="1310" y="160" width="24" height="24" fill="#c79000"/><rect x="110" y="184" width="24" height="24" fill="#00c7a2"/><rect x="134" y="184" width="24" height="24" fill="#00c7a0"/><rect x="158" y="184" width="24" height="24" fill="#00c79f"/><rect x="182" y="184" width="24" height="24" fill="#00c79d"/><rect x="206" y="184" width="24" height="24" fill="#00c79c"/><rect x="230" y="184" width="24" height="24" fill="#00c79a"/><rect x="254" y="184" width="24" height="24" fill="#00c798"/><rect x="278" y="184" width="24" height="24" fill="#00c796"/><rect x="302" y="184" width="24" height="24" fill="#00c793"/><rect x="326" y="184" width="24" height="24" fill="#00c791"/><rect x="350" y="184" width="24" height="24" fill="#00c78e"/><rect x="374" y="184" width="24" height="24" fill="#00c78a"/><rect x="398" y="184" width="24" height="24" fill="#00c787"/><rect x="422" y="184" width="24" height="24" fill="#00c782"/><rect x="446" y="184" width="24" height="24" fill="#00c77d"/><rect x="470" y="184" width="24" height="24" fill="#00c777"/><rect x="494" y="184" width="24" height="24" fill="#00c770"/><rect x="518" y="184" width="24" height="24" fill="#00c767"/><rect x="542" y="184" width="24" height="24" fill="#00c75c"/><rect x="566" y="184" width="24" height="24" fill="#00c74d"/><rect x="590" y="184" width="24" height="24" fill="#00c735"/><rect x="614" y="184" width="24" height="24" fill="#1ec700"/><rect x="638" y="184" width="24" height="24" fill="#46c700"/><rect x="662" y="184" width="24" height="24" fill="#5cc700"/><rect x="686" y="184" width="24" height="24" fill="#6ec700"/><rect x="710" y="184" width="24" height="24" fill="#7cc700"/><rect x="734" y="184" width="24" height="24" fill="#88c700"/><rect x="758" y="184" width="24" height="24" fill="#93c700"/><rect x="782" y="184" width="24" height="24" fill="#9dc700"/><rect x="806" y="184" width="24" height="24" fill="#a7c700"/><rect x="830" y="184" width="24" height="24" fill="#afc700"/><rect x="854" y="184" width="24" height="24" fill="#b8c700"/><rect x="878" y="184" width="24" height="24" fill="#bfc700"/><rect x="902" y="184" width="24" height="24" fill="#c7c700"/><rect x="926" y="184" width="24" height="24" fill="#c7c000"/><rect x="950" y="184" width="24" height="24" fill="#c7ba00"/><rect x="974" y="184" width="24" height="24" fill="#c7b500"/><rect x="998" y="184" width="24" height="24" fill="#c7b000"/><rect x="1022" y="184" width="24" height="24" fill="#c7ab00"/><rect x="1046" y="184" width="24" height="24" fill="#c7a700"/><rect x="1070" y="184" width="24" height="24" fill="#c7a300"/><rect x="1094" y="184" width="24" height="24" fill="#c79f00"/><rect x="1118" y="184" width="24" height="24" fill="#c79c00"/><rect x="1142" y="184" width="24" height="24" fill="#c79900"/><rect x="1166" y="184" width="24" height="24" fill="#c79600"/><rect x="1190" y="184" width="24" height="24" fill="#c79300"/><rect x="1214" y="184" width="24" height="24" fill="#c79000"/><rect x="1238" y="184" width="24" height="24" fill="#c78e00"/><rect x="1262" y="184" width="24" height="24" fill="#c78c00"/><rect x="1286" y="184" width="24" height="24" fill="#c78900"/><rect x="1310" y="184" width="24" height="24" fill="#c78700"/><rect x="110" y="208" width="24" height="24" fill="#00c7a6"/><rect x="134" y="208" width="24" height="24" fill="#00c7a5"/><rect x="158" y="208" width="24" height="24" fill="#00c7a4"/><rect x="182" y="208" width="24" height="24" fill="#00c7a2"/><rect x="206" y="208" width="24" height="24" fill="#00c7a1"/><rect x="230" y="208" width="24" height="24" fill="#00c79f"/><rect x="254" y="208" width="24" height="24" fill="#00c79d"/><rect x="278" y="208" width="24" height="24" fill="#00c79b"/><rect x="302" y="208" width="24" height="24" fill="#00c799"/><rect x="326" y="208" width="24" height="24" fill="#00c796"/><rect x="350" y="208" width="24" height="24" fill="#00c794"/><rect x="374" y="208" width="24" height="24" fill="#00c791"/><rect x="398" y="208" width="24" height="24" fill="#00c78d"/><rect x="422" y="208" width="24" height="24" fill="#00c789"/><rect x="446" y="208" width="24" height="24" fill="#00c784"/><rect x="470" y="208" width="24" height="24" fill="#00c77e"/><rect x="494" y="208" width="24" height="24" fill="#00c778"/><rect x="518" y="208" width="24" height="24" fill="#00c76f"/><rect x="542" y="208" width="24" height="24" fill="#00c764"/><rect x="566" y="208" width="24" height="24" fill="#00c755"/><rect x="590" y="208" width="24" height="24" fill="#01c73e"/><rect x="614" y="208" width="24" height="24" fill="#3bc737"/><rect x="638" y="208" width="24" height="24" fill="#53c72e"/><rect x="662" y="208" width="24" height="24" fill="#65c722"/><rect x="686" y="208" width="24" height="24" fill="#75c70b"/><rect x="710" y="208" width="24" height="24" fill="#84c700"/><rect x="734" y="208" width="24" height="24" fill="#91c700"/><rect x="758" y="208" width="24" height="24" fill="#9dc700"/><rect x="782" y="208" width="24" height="24" fill="#a8c700"/><rect x="806" y="208" width="24" height="24" fill="#b2c700"/><rect x="830" y="208" width="24" height="24" fill="#bcc700"/><rect x="854" y="208" width="24" height="24" fill="#c5c700"/><rect x="878" y="208" width="24" height="24" fill="#c7c100"/><rect x="902" y="208" width="24" height="24" fill="#c7ba00"/><rect x="926" y="208" width="24" height="24" fill="#c7b300"/><rect x="950" y="208" width="24" height="24" fill="#c7ae00"/><rect x="974" y="208" width="24" height="24" fill="#c7a800"/><rect x="998" y="208" width="24" height="24" fill="#c7a400"/><rect x="1022" y="208" width="24" height="24" fill="#c79f00"/><rect x="1046" y="208" width="24" height="24" fill="#c79b00"/><rect x="1070" y="208" width="24" height="24" fill="#c79800"/><rect x="1094" y="208" width="24" height="24" fill="#c79400"/><rect x="1118" y="208" width="24" height="24" fill="#c79100"/><rect x="1142" y="208" width="24" height="24" fill="#c78e00"/><rect x="1166" y="208" width="24" height="24" fill="#c78b00"/><rect x="1190" y="208" width="24" height="24" fill="#c78900"/><rect x="1214" y="208" width="24" height="24" fill="#c78600"/><rect x="1238" y="208" width="24" height="24" fill="#c78400"/><rect x="1262" y="208" width="24" height="24" fill="#c78200"/><rect x="1286" y="208" width="24" height="24" fill="#c77f00"/><rect x="1310" y="208" width="24" height="24" fill="#c77d00"/><rect x="110" y="232" width="24" height="24" fill="#00c7ab"/><rect x="134" y="232" width="24" height="24" fill="#00c7aa"/><rect x="158" y="232" width="24" height="24" fill="#00c7a9"/><rect x="182" y="232" width="24" height="24" fill="#00c7a8"/><rect x="206" y="232" width="24" height="24" fill="#00c7a6"/><rect x="230" y="232" width="24" height="24" fill="#00c7a5"/><rect x="254" y="232" width="24" height="24" fill="#00c7a3"/><rect x="278" y="232" width="24" height="24" fill="#00c7a1"/><rect x="302" y="232" width="24" height="24" fill="#00c79f"/><rect x="326" y="232" width="24" height="24" fill="#00c79d"/><rect x="350" y="232" width="24" height="24" fill="#00c79a"/><rect x="374" y="232" width="24" height="24" fill="#00c798"/><rect x="398" y="232" width="24" height="24" fill="#00c794"/><rect x="422" y="232" width="24" height="24" fill="#00c790"/><rect x="446" y="232" width="24" height="24" fill="#00c78c"/><rect x="470" y="232" width="24" height="24" fill="#00c787"/><rect x="494" y="232" width="24" height="24" fill="#00c780"/><rect x="518" y="232" width="24" height="24" fill="#00c778"/><rect x="542" y="232" width="24" height="24" fill="#00c76d"/><rect x="566" y="232" width="24" height="24" fill="#00c75f"/><rect x="590" y="232" width="24" height="24" fill="#38c758"/><rect x="614" y="232" width="24" height="24" fill="#53c754"/><rect x="638" y="232" width="24" height="24" fill="#67c74e"/><rect x="662" y="232" width="24" height="24" fill="#77c749"/><rect x="686" y="232" width="24" height="24" fill="#86c742"/><rect x="710" y="232" width="24" height="24" fill="#93c73a"/><rect x="734" y="232" width="24" height="24" fill="#9fc72f"/><rect x="758" y="232" width="24" height="24" fill="#abc720"/><rect x="782" y="232" width="24" height="24" fill="#b7c700"/><rect x="806" y="232" width="24" height="24" fill="#c2c700"/><rect x="830" y="232" width="24" height="24" fill="#c7c200"/><rect x="854" y="232" width="24" height="24" fill="#c7b900"/><rect x="878" y="232" width="24" height="24" fill="#c7b100"/><rect x="902" y="232" width="24" height="24" fill="#c7ab00"/><rect x="926" y="232" width="24" height="24" fill="#c7a500"/><rect x="950" y="232" width="24" height="24" fill="#c79f00"/><rect x="974" y="232" width="24" height="24" fill="#c79a00"/><rect x="998" y="232" width="24" height="24" fill="#c79600"/><rect x="1022" y="232" width="24" height="24" fill="#c79200"/><rect x="1046" y="232" width="24" height="24" fill="#c78e00"/><rect x="1070" y="232" width="24" height="24" fill="#c78b00"/><rect x="1094" y="232" width="24" height="24" fill="#c78800"/><rect x="1118" y="232" width="24" height="24" fill="#c78500"/><rect x="1142" y="232" width="24" height="24" fill="#c78200"/><rect x="1166" y="232" width="24" height="24" fill="#c77f00"/><rect x="1190" y="232" width="24" height="24" fill="#c77d00"/><rect x="1214" y="232" width="24" height="24" fill="#c77b00"/><rect x="1238" y="232" width="24" height="24" fill="#c77800"/><rect x="1262" y="232" width="24" height="24" fill="#c77600"/><rect x="1286" y="232" width="24" height="24" fill="#c77400"/><rect x="1310" y="232" width="24" height="24" fill="#c77200"/><rect x="110" y="256" width="24" height="24" fill="#00c7b0"/><rect x="134" y="256" width="24" height="24" fill="#00c7b0"/><rect x="158" y="256" width="24" height="24" fill="#00c7af"/><rect x="182" y="256" width="24" height="24" fill="#00c7ae"/><rect x="206" y="256" width="24" height="24" fill="#00c7ac"/><rect x="230" y="256" width="24" height="24" fill="#00c7ab"/><rect x="254" y="256" width="24" height="24" fill="#00c7aa"/><rect x="278" y="256" width="24" height="24" fill="#00c7a8"/><rect x="302" y="256" width="24" height="24" fill="#00c7a6"/><rect x="326" y="256" width="24" height="24" fill="#00c7a4"/><rect x="350" y="256" width="24" height="24" fill="#00c7a2"/><rect x="374" y="256" width="24" height="24" fill="#00c7a0"/><rect x="398" y="256" width="24" height="24" fill="#00c79d"/><rect x="422" y="256" width="24" height="24" fill="#00c799"/><rect x="446" y="256" width="24" height="24" fill="#00c795"/><rect x="470" y="256" width="24" height="24" fill="#00c790"/><rect x="494" y="256" width="24" height="24" fill="#00c78a"/><rect x="518" y="256" width="24" height="24" fill="#00c783"/><rect x="542" y="256" width="24" height="24" fill="#00c778"/><rect x="566" y="256" width="24" height="24" fill="#34c772"/><rect x="590" y="256" width="24" height="24" fill="#53c76f"/><rect x="614" y="256" width="24" height="24" fill="#68c76c"/><rect x="638" y="256" width="24" height="24" fill="#7ac768"/><rect x="662" y="256" width="24" height="24" fill="#8ac764"/><rect x="686" y="256" width="24" height="24" fill="#98c760"/><rect x="710" y="256" width="24" height="24" fill="#a5c75b"/><rect x="734" y="256" width="24" height="24" fill="#b2c755"/><rect x="758" y="256" width="24" height="24" fill="#bec74f"/><rect x="782" y="256" width="24" height="24" fill="#c7c346"/><rect x="806" y="256" width="24" height="24" fill="#c7b939"/><rect x="830" y="256" width="24" height="24" fill="#c7af2b"/><rect x="854" y="256" width="24" height="24" fill="#c7a718"/><rect x="878" y="256" width="24" height="24" fill="#c79f00"/><rect x="902" y="256" width="24" height="24" fill="#c79900"/><rect x="926" y="256" width="24" height="24" fill="#c79300"/><rect x="950" y="256" width="24" height="24" fill="#c78f00"/><rect x="974" y="256" width="24" height="24" fill="#c78a00"/><rect x="998" y="256" width="24" height="24" fill="#c78600"/><rect x="1022" y="256" width="24" height="24" fill="#c78200"/><rect x="1046" y="256" width="24" height="24" fill="#c77f00"/><rect x="1070" y="256" width="24" height="24" fill="#c77c00"/><rect x="1094" y="256" width="24" height="24" fill="#c77900"/><rect x="1118" y="256" width="24" height="24" fill="#c77600"/><rect x="1142" y="256" width="24" height="24" fill="#c77400"/><rect x="1166" y="256" width="24" height="24" fill="#c77100"/><rect x="1190" y="256" width="24" height="24" fill="#c76f00"/><rect x="1214" y="256" width="24" height="24" fill="#c76d00"/><rect x="1238" y="256" width="24" height="24" fill="#c76b00"/><rect x="1262" y="256" width="24" height="24" fill="#c76900"/><rect x="1286" y="256" width="24" height="24" fill="#c76800"/><rect x="1310" y="256" width="24" height="24" fill="#c76600"/><rect x="110" y="280" width="24" height="24" fill="#00c7b6"/><rect x="134" y="280" width="24" height="24" fill="#00c7b6"/><rect x="158" y="280" width="24" height="24" fill="#00c7b5"/><rect x="182" y="280" width="24" height="24" fill="#00c7b4"/><rect x="206" y="280" width="24" height="24" fill="#00c7b3"/><rect x="230" y="280" width="24" height="24" fill="#00c7b2"/><rect x="254" y="280" width="24" height="24" fill="#00c7b1"/><rect x="278" y="280" width="24" height="24" fill="#00c7b0"/><rect x="302" y="280" width="24" height="24" fill="#00c7ae"/><rect x="326" y="280" width="24" height="24" fill="#00c7ad"/><rect x="350" y="280" width="24" height="24" fill="#00c7ab"/><rect x="374" y="280" width="24" height="24" fill="#00c7a9"/><rect x="398" y="280" width="24" height="24" fill="#00c7a6"/><rect x="422" y="280" width="24" height="24" fill="#00c7a3"/><rect x="446" y="280" width="24" height="24" fill="#00c7a0"/><rect x="470" y="280" width="24" height="24" fill="#00c79c"/><rect x="494" y="280" width="24" height="24" fill="#00c797"/><rect x="518" y="280" width="24" height="24" fill="#00c790"/><rect x="542" y="280" width="24" height="24" fill="#2ec78a"/><rect x="566" y="280" width="24" height="24" fill="#52c788"/><rect x="590" y="280" width="24" height="24" fill="#6ac786"/><rect x="614" y="280" width="24" height="24" fill="#7ec784"/><rect x="638" y="280" width="24" height="24" fill="#8fc781"/><rect x="662" y="280" width="24" height="24" fill="#9ec77e"/><rect x="686" y="280" width="24" height="24" fill="#adc77b"/><rect x="710" y="280" width="24" height="24" fill="#bbc778"/><rect x="734" y="280" width="24" height="24" fill="#c7c673"/><rect x="758" y="280" width="24" height="24" fill="#c7ba68"/><rect x="782" y="280" width="24" height="24" fill="#c7af5e"/><rect x="806" y="280" width="24" height="24" fill="#c7a554"/><rect x="830" y="280" width="24" height="24" fill="#c79d4a"/><rect x="854" y="280" width="24" height="24" fill="#c79541"/><rect x="878" y="280" width="24" height="24" fill="#c78e37"/><rect x="902" y="280" width="24" height="24" fill="#c7872c"/><rect x="926" y="280" width="24" height="24" fill="#c78120"/><rect x="950" y="280" width="24" height="24" fill="#c77b0d"/><rect x="974" y="280" width="24" height="24" fill="#c77600"/><rect x="998" y="280" width="24" height="24" fill="#c77300"/><rect x="1022" y="280" width="24" height="24" fill="#c77000"/><rect x="1046" y="280" width="24" height="24" fill="#c76d00"/><rect x="1070" y="280" width="24" height="24" fill="#c76a00"/><rect x="1094" y="280" width="24" height="24" fill="#c76700"/><rect x="1118" y="280" width="24" height="24" fill="#c76500"/><rect x="1142" y="280" width="24" height="24" fill="#c76300"/><rect x="1166" y="280" width="24" height="24" fill="#c76100"/><rect x="1190" y="280" width="24" height="24" fill="#c75f00"/><rect x="1214" y="280" width="24" height="24" fill="#c75d00"/><rect x="1238" y="280" width="24" height="24" fill="#c75b00"/><rect x="1262" y="280" width="24" height="24" fill="#c75a00"/><rect x="1286" y="280" width="24" height="24" fill="#c75800"/><rect x="1310" y="280" width="24" height="24" fill="#c75700"/><rect x="110" y="304" width="24" height="24" fill="#00c7bd"/><rect x="134" y="304" width="24" height="24" fill="#00c7bc"/><rect x="158" y="304" width="24" height="24" fill="#00c7bc"/><rect x="182" y="304" width="24" height="24" fill="#00c7bb"/><rect x="206" y="304" width="24" height="24" fill="#00c7bb"/><rect x="230" y="304" width="24" height="24" fill="#00c7ba"/><rect x="254" y="304" width="24" height="24" fill="#00c7b9"/><rect x="278" y="304" width="24" height="24" fill="#00c7b8"/><rect x="302" y="304" width="24" height="24" fill="#00c7b7"/><rect x="326" y="304" width="24" height="24" fill="#00c7b6"/><rect x="350" y="304" width="24" height="24" fill="#00c7b5"/><rect x="374" y="304" width="24" height="24" fill="#00c7b4"/><rect x="398" y="304" width="24" height="24" fill="#00c7b2"/><rect x="422" y="304" width="24" height="24" fill="#00c7b0"/><rect x="446" y="304" width="24" height="24" fill="#00c7ad"/><rect x="470" y="304" width="24" height="24" fill="#00c7aa"/><rect x="494" y="304" width="24" height="24" fill="#00c7a6"/><rect x="518" y="304" width="24" height="24" fill="#26c7a2"/><rect x="542" y="304" width="24" height="24" fill="#52c7a1"/><rect x="566" y="304" width="24" height="24" fill="#6cc7a0"/><rect x="590" y="304" width="24" height="24" fill="#82c79e"/><rect x="614" y="304" width="24" height="24" fill="#94c79d"/><rect x="638" y="304" width="24" height="24" fill="#a6c79b"/><rect x="662" y="304" width="24" height="24" fill="#b5c799"/><rect x="686" y="304" width="24" height="24" fill="#c5c797"/><rect x="710" y="304" width="24" height="24" fill="#c7bb8c"/><rect x="734" y="304" width="24" height="24" fill="#c7af81"/><rect x="758" y="304" width="24" height="24" fill="#c7a477"/><rect x="782" y="304" width="24" height="24" fill="#c79b6d"/><rect x="806" y="304" width="24" height="24" fill="#c79265"/><rect x="830" y="304" width="24" height="24" fill="#c78a5c"/><rect x="854" y="304" width="24" height="24" fill="#c78355"/><rect x="878" y="304" width="24" height="24" fill="#c77c4d"/><rect x="902" y="304" width="24" height="24" fill="#c77645"/><rect x="926" y="304" width="24" height="24" fill="#c7703e"/><rect x="950" y="304" width="24" height="24" fill="#c76a36"/><rect x="974" y="304" width="24" height="24" fill="#c7642d"/><rect x="998" y="304" width="24" height="24" fill="#c75f24"/><rect x="1022" y="304" width="24" height="24" fill="#c75a18"/><rect x="1046" y="304" width="24" height="24" fill="#c75502"/><rect x="1070" y="304" width="24" height="24" fill="#c75300"/><rect x="1094" y="304" width="24" height="24" fill="#c75100"/><rect x="1118" y="304" width="24" height="24" fill="#c74f00"/><rect x="1142" y="304" width="24" height="24" fill="#c74d00"/><rect x="1166" y="304" width="24" height="24" fill="#c74b00"/><rect x="1190" y="304" width="24" height="24" fill="#c74a00"/><rect x="1214" y="304" width="24" height="24" fill="#c74800"/><rect x="1238" y="304" width="24" height="24" fill="#c74700"/><rect x="1262" y="304" width="24" height="24" fill="#c74500"/><rect x="1286" y="304" width="24" height="24" fill="#c74400"/><rect x="1310" y="304" width="24" height="24" fill="#c74300"/><rect x="110" y="328" width="24" height="24" fill="#00c7c4"/><rect x="134" y="328" width="24" height="24" fill="#00c7c3"/><rect x="158" y="328" width="24" height="24" fill="#00c7c3"/><rect x="182" y="328" width="24" height="24" fill="#00c7c3"/><rect x="206" y="328" width="24" height="24" fill="#00c7c3"/><rect x="230" y="328" width="24" height="24" fill="#00c7c3"/><rect x="254" y="328" width="24" height="24" fill="#00c7c2"/><rect x="278" y="328" width="24" height="24" fill="#00c7c2"/><rect x="302" y="328" width="24" height="24" fill="#00c7c2"/><rect x="326" y="328" width="24" height="24" fill="#00c7c2"/><rect x="350" y="328" width="24" height="24" fill="#00c7c1"/><rect x="374" y="328" width="24" height="24" fill="#00c7c1"/><rect x="398" y="328" width="24" height="24" fill="#00c7c0"/><rect x="422" y="328" width="24" height="24" fill="#00c7bf"/><rect x="446" y="328" width="24" height="24" fill="#00c7be"/><rect x="470" y="328" width="24" height="24" fill="#00c7bd"/><rect x="494" y="328" width="24" height="24" fill="#16c7bc"/><rect x="518" y="328" width="24" height="24" fill="#51c7bb"/><rect x="542" y="328" width="24" height="24" fill="#6fc7bb"/><rect x="566" y="328" width="24" height="24" fill="#87c7ba"/><rect x="590" y="328" width="24" height="24" fill="#9cc7ba"/><rect x="614" y="328" width="24" height="24" fill="#afc7ba"/><rect x="638" y="328" width="24" height="24" fill="#c1c7b9"/><rect x="662" y="328" width="24" height="24" fill="#c7bdaf"/><rect x="686" y="328" width="24" height="24" fill="#c7aea1"/><rect x="710" y="328" width="24" height="24" fill="#c7a295"/><rect x="734" y="328" width="24" height="24" fill="#c7988b"/><rect x="758" y="328" width="24" height="24" fill="#c78e81"/><rect x="782" y="328" width="24" height="24" fill="#c78579"/><rect x="806" y="328" width="24" height="24" fill="#c77e71"/><rect x="830" y="328" width="24" height="24" fill="#c77669"/><rect x="854" y="328" width="24" height="24" fill="#c76f62"/><rect x="878" y="328" width="24" height="24" fill="#c7695c"/><rect x="902" y="328" width="24" height="24" fill="#c76255"/><rect x="926" y="328" width="24" height="24" fill="#c75c4f"/><rect x="950" y="328" width="24" height="24" fill="#c75748"/><rect x="974" y="328" width="24" height="24" fill="#c75142"/><rect x="998" y="328" width="24" height="24" fill="#c74b3c"/><rect x="1022" y="328" width="24" height="24" fill="#c74635"/><rect x="1046" y="328" width="24" height="24" fill="#c7402e"/><rect x="1070" y="328" width="24" height="24" fill="#c73a26"/><rect x="1094" y="328" width="24" height="24" fill="#c7341d"/><rect x="1118" y="328" width="24" height="24" fill="#c72e11"/><rect x="1142" y="328" width="24" height="24" fill="#c72900"/><rect x="1166" y="328" width="24" height="24" fill="#c72800"/><rect x="1190" y="328" width="24" height="24" fill="#c72700"/><rect x="1214" y="328" width="24" height="24" fill="#c72600"/><rect x="1238" y="328" width="24" height="24" fill="#c72500"/><rect x="1262" y="328" width="24" height="24" fill="#c72400"/><rect x="1286" y="328" width="24" height="24" fill="#c72300"/><rect x="1310" y="328" width="24" height="24" fill="#c72300"/><rect x="110" y="352" width="24" height="24" fill="#00c2c7"/><rect x="134" y="352" width="24" height="24" fill="#00c2c7"/><rect x="158" y="352" width="24" height="24" fill="#00c2c7"/><rect x="182" y="352" width="24" height="24" fill="#00c2c7"/><rect x="206" y="352" width="24" height="24" fill="#00c1c7"/><rect x="230" y="352" width="24" height="24" fill="#00c1c7"/><rect x="254" y="352" width="24" height="24" fill="#00c1c7"/><rect x="278" y="352" width="24" height="24" fill="#00c0c7"/><rect x="302" y="352" width="24" height="24" fill="#00c0c7"/><rect x="326" y="352" width="24" height="24" fill="#00bfc7"/><rect x="350" y="352" width="24" height="24" fill="#00bec7"/><rect x="374" y="352" width="24" height="24" fill="#00bdc7"/><rect x="398" y="352" width="24" height="24" fill="#00bcc7"/><rect x="422" y="352" width="24" height="24" fill="#00bbc7"/><rect x="446" y="352" width="24" height="24" fill="#00bac7"/><rect x="470" y="352" width="24" height="24" fill="#00b7c7"/><rect x="494" y="352" width="24" height="24" fill="#49b7c7"/><rect x="518" y="352" width="24" height="24" fill="#69b6c7"/><rect x="542" y="352" width="24" height="24" fill="#82b5c7"/><rect x="566" y="352" width="24" height="24" fill="#96b5c7"/><rect x="590" y="352" width="24" height="24" fill="#a9b4c7"/><rect x="614" y="352" width="24" height="24" fill="#bbb3c7"/><rect x="638" y="352" width="24" height="24" fill="#c7aec2"/><rect x="662" y="352" width="24" height="24" fill="#c7a0b4"/><rect x="686" y="352" width="24" height="24" fill="#c794a7"/><rect x="710" y="352" width="24" height="24" fill="#c7899c"/><rect x="734" y="352" width="24" height="24" fill="#c78093"/><rect x="758" y="352" width="24" height="24" fill="#c7778a"/><rect x="782" y="352" width="24" height="24" fill="#c76f82"/><rect x="806" y="352" width="24" height="24" fill="#c7677a"/><rect x="830" y="352" width="24" height="24" fill="#c76073"/><rect x="854" y="352" width="24" height="24" fill="#c7596d"/><rect x="878" y="352" width="24" height="24" fill="#c75267"/><rect x="902" y="352" width="24" height="24" fill="#c74c61"/><rect x="926" y="352" width="24" height="24" fill="#c7455b"/><rect x="950" y="352" width="24" height="24" fill="#c73e55"/><rect x="974" y="352" width="24" height="24" fill="#c73850"/><rect x="998" y="352" width="24" height="24" fill="#c7304b"/><rect x="1022" y="352" width="24" height="24" fill="#c72945"/><rect x="1046" y="352" width="24" height="24" fill="#c72040"/><rect x="1070" y="352" width="24" height="24" fill="#c7143a"/><rect x="1094" y="352" width="24" height="24" fill="#c70035"/><rect x="1118" y="352" width="24" height="24" fill="#c70034"/><rect x="1142" y="352" width="24" height="24" fill="#c70033"/><rect x="1166" y="352" width="24" height="24" fill="#c70031"/><rect x="1190" y="352" width="24" height="24" fill="#c70030"/><rect x="1214" y="352" width="24" height="24" fill="#c7002f"/><rect x="1238" y="352" width="24" height="24" fill="#c7002f"/><rect x="1262" y="352" width="24" height="24" fill="#c7002e"/><rect x="1286" y="352" width="24" height="24" fill="#c7002d"/><rect x="1310" y="352" width="24" height="24" fill="#c7002c"/><rect x="110" y="376" width="24" height="24" fill="#00bac7"/><rect x="134" y="376" width="24" height="24" fill="#00bac7"/><rect x="158" y="376" width="24" height="24" fill="#00b9c7"/><rect x="182" y="376" width="24" height="24" fill="#00b8c7"/><rect x="206" y="376" width="24" height="24" fill="#00b7c7"/><rect x="230" y="376" width="24" height="24" fill="#00b6c7"/><rect x="254" y="376" width="24" height="24" fill="#00b5c7"/><rect x="278" y="376" width="24" height="24" fill="#00b4c7"/><rect x="302" y="376" width="24" height="24" fill="#00b2c7"/><rect x="326" y="376" width="24" height="24" fill="#00b1c7"/><rect x="350" y="376" width="24" height="24" fill="#00afc7"/><rect x="374" y="376" width="24" height="24" fill="#00acc7"/><rect x="398" y="376" width="24" height="24" fill="#00a9c7"/><rect x="422" y="376" width="24" height="24" fill="#00a5c7"/><rect x="446" y="376" width="24" height="24" fill="#00a0c7"/><rect x="470" y="376" width="24" height="24" fill="#3d9dc7"/><rect x="494" y="376" width="24" height="24" fill="#5e9cc7"/><rect x="518" y="376" width="24" height="24" fill="#759ac7"/><rect x="542" y="376" width="24" height="24" fill="#8999c7"/><rect x="566" y="376" width="24" height="24" fill="#9b97c7"/><rect x="590" y="376" width="24" height="24" fill="#ab95c7"/><rect x="614" y="376" width="24" height="24" fill="#ba93c7"/><rect x="638" y="376" width="24" height="24" fill="#c78fc5"/><rect x="662" y="376" width="24" height="24" fill="#c783b8"/><rect x="686" y="376" width="24" height="24" fill="#c778ac"/><rect x="710" y="376" width="24" height="24" fill="#c76ea2"/><rect x="734" y="376" width="24" height="24" fill="#c76599"/><rect x="758" y="376" width="24" height="24" fill="#c75c91"/><rect x="782" y="376" width="24" height="24" fill="#c75489"/><rect x="806" y="376" width="24" height="24" fill="#c74c82"/><rect x="830" y="376" width="24" height="24" fill="#c7447c"/><rect x="854" y="376" width="24" height="24" fill="#c73c75"/><rect x="878" y="376" width="24" height="24" fill="#c73370"/><rect x="902" y="376" width="24" height="24" fill="#c72a6a"/><rect x="926" y="376" width="24" height="24" fill="#c71f65"/><rect x="950" y="376" width="24" height="24" fill="#c7105f"/><rect x="974" y="376" width="24" height="24" fill="#c7005c"/><rect x="998" y="376" width="24" height="24" fill="#c70059"/><rect x="1022" y="376" width="24" height="24" fill="#c70057"/><rect x="1046" y="376" width="24" height="24" fill="#c70055"/><rect x="1070" y="376" width="24" height="24" fill="#c70053"/><rect x="1094" y="376" width="24" height="24" fill="#c70051"/><rect x="1118" y="376" width="24" height="24" fill="#c70050"/><rect x="1142" y="376" width="24" height="24" fill="#c7004e"/><rect x="1166" y="376" width="24" height="24" fill="#c7004d"/><rect x="1190" y="376" width="24" height="24" fill="#c7004b"/><rect x="1214" y="376" width="24" height="24" fill="#c7004a"/><rect x="1238" y="376" width="24" height="24" fill="#c70049"/><rect x="1262" y="376" width="24" height="24" fill="#c70048"/><rect x="1286" y="376" width="24" height="24" fill="#c70046"/><rect x="1310" y="376" width="24" height="24" fill="#c70045"/><rect x="110" y="400" width="24" height="24" fill="#00b2c7"/><rect x="134" y="400" width="24" height="24" fill="#00b1c7"/><rect x="158" y="400" width="24" height="24" fill="#00afc7"/><rect x="182" y="400" width="24" height="24" fill="#00aec7"/><rect x="206" y="400" width="24" height="24" fill="#00adc7"/><rect x="230" y="400" width="24" height="24" fill="#00abc7"/><rect x="254" y="400" width="24" height="24" fill="#00a9c7"/><rect x="278" y="400" width="24" height="24" fill="#00a7c7"/><rect x="302" y="400" width="24" height="24" fill="#00a4c7"/><rect x="326" y="400" width="24" height="24" fill="#00a1c7"/><rect x="350" y="400" width="24" height="24" fill="#009dc7"/><rect x="374" y="400" width="24" height="24" fill="#0098c7"/><rect x="398" y="400" width="24" height="24" fill="#0093c7"/><rect x="422" y="400" width="24" height="24" fill="#008bc7"/><rect x="446" y="400" width="24" height="24" fill="#3286c7"/><rect x="470" y="400" width="24" height="24" fill="#5484c7"/><rect x="494" y="400" width="24" height="24" fill="#6b81c7"/><rect x="518" y="400" width="24" height="24" fill="#7e7ec7"/><rect x="542" y="400" width="24" height="24" fill="#8f7cc7"/><rect x="566" y="400" width="24" height="24" fill="#9e78c7"/><rect x="590" y="400" width="24" height="24" fill="#ac75c7"/><rect x="614" y="400" width="24" height="24" fill="#ba71c7"/><rect x="638" y="400" width="24" height="24" fill="#c76dc7"/><rect x="662" y="400" width="24" height="24" fill="#c761bb"/><rect x="686" y="400" width="24" height="24" fill="#c757b0"/><rect x="710" y="400" width="24" height="24" fill="#c74ca7"/><rect x="734" y="400" width="24" height="24" fill="#c7429e"/><rect x="758" y="400" width="24" height="24" fill="#c73896"/><rect x="782" y="400" width="24" height="24" fill="#c72d8f"/><rect x="806" y="400" width="24" height="24" fill="#c71f88"/><rect x="830" y="400" width="24" height="24" fill="#c70982"/><rect x="854" y="400" width="24" height="24" fill="#c7007e"/><rect x="878" y="400" width="24" height="24" fill="#c7007a"/><rect x="902" y="400" width="24" height="24" fill="#c70076"/><rect x="926" y="400" width="24" height="24" fill="#c70073"/><rect x="950" y="400" width="24" height="24" fill="#c70070"/><rect x="974" y="400" width="24" height="24" fill="#c7006d"/><rect x="998" y="400" width="24" height="24" fill="#c7006b"/><rect x="1022" y="400" width="24" height="24" fill="#c70069"/><rect x="1046" y="400" width="24" height="24" fill="#c70066"/><rect x="1070" y="400" width="24" height="24" fill="#c70064"/><rect x="1094" y="400" width="24" height="24" fill="#c70062"/><rect x="1118" y="400" width="24" height="24" fill="#c70061"/><rect x="1142" y="400" width="24" height="24" fill="#c7005f"/><rect x="1166" y="400" width="24" height="24" fill="#c7005d"/><rect x="1190" y="400" width="24" height="24" fill="#c7005c"/><rect x="1214" y="400" width="24" height="24" fill="#c7005a"/><rect x="1238" y="400" width="24" height="24" fill="#c70059"/><rect x="1262" y="400" width="24" height="24" fill="#c70057"/><rect x="1286" y="400" width="24" height="24" fill="#c70056"/><rect x="1310" y="400" width="24" height="24" fill="#c70055"/><rect x="110" y="424" width="24" height="24" fill="#00a9c7"/><rect x="134" y="424" width="24" height="24" fill="#00a7c7"/><rect x="158" y="424" width="24" height="24" fill="#00a5c7"/><rect x="182" y="424" width="24" height="24" fill="#00a3c7"/><rect x="206" y="424" width="24" height="24" fill="#00a1c7"/><rect x="230" y="424" width="24" height="24" fill="#009fc7"/><rect x="254" y="424" width="24" height="24" fill="#009cc7"/><rect x="278" y="424" width="24" height="24" fill="#0098c7"/><rect x="302" y="424" width="24" height="24" fill="#0094c7"/><rect x="326" y="424" width="24" height="24" fill="#008fc7"/><rect x="350" y="424" width="24" height="24" fill="#0089c7"/><rect x="374" y="424" width="24" height="24" fill="#0081c7"/><rect x="398" y="424" width="24" height="24" fill="#0078c7"/><rect x="422" y="424" width="24" height="24" fill="#266ec7"/><rect x="446" y="424" width="24" height="24" fill="#4b6bc7"/><rect x="470" y="424" width="24" height="24" fill="#6268c7"/><rect x="494" y="424" width="24" height="24" fill="#7564c7"/><rect x="518" y="424" width="24" height="24" fill="#855fc7"/><rect x="542" y="424" width="24" height="24" fill="#935bc7"/><rect x="566" y="424" width="24" height="24" fill="#a155c7"/><rect x="590" y="424" width="24" height="24" fill="#ad4fc7"/><rect x="614" y="424" width="24" height="24" fill="#ba48c7"/><rect x="638" y="424" width="24" height="24" fill="#c53fc7"/><rect x="662" y="424" width="24" height="24" fill="#c731bd"/><rect x="686" y="424" width="24" height="24" fill="#c71fb3"/><rect x="710" y="424" width="24" height="24" fill="#c700ab"/><rect x="734" y="424" width="24" height="24" fill="#c700a3"/><rect x="758" y="424" width="24" height="24" fill="#c7009d"/><rect x="782" y="424" width="24" height="24" fill="#c70098"/><rect x="806" y="424" width="24" height="24" fill="#c70093"/><rect x="830" y="424" width="24" height="24" fill="#c7008e"/><rect x="854" y="424" width="24" height="24" fill="#c7008a"/><rect x="878" y="424" width="24" height="24" fill="#c70086"/><rect x="902" y="424" width="24" height="24" fill="#c70083"/><rect x="926" y="424" width="24" height="24" fill="#c70080"/><rect x="950" y="424" width="24" height="24" fill="#c7007d"/><rect x="974" y="424" width="24" height="24" fill="#c7007a"/><rect x="998" y="424" width="24" height="24" fill="#c70077"/><rect x="1022" y="424" width="24" height="24" fill="#c70075"/><rect x="1046" y="424" width="24" height="24" fill="#c70073"/><rect x="1070" y="424" width="24" height="24" fill="#c70070"/><rect x="1094" y="424" width="24" height="24" fill="#c7006e"/><rect x="1118" y="424" width="24" height="24" fill="#c7006d"/><rect x="1142" y="424" width="24" height="24" fill="#c7006b"/><rect x="1166" y="424" width="24" height="24" fill="#c70069"/><rect x="1190" y="424" width="24" height="24" fill="#c70067"/><rect x="1214" y="424" width="24" height="24" fill="#c70066"/><rect x="1238" y="424" width="24" height="24" fill="#c70064"/><rect x="1262" y="424" width="24" height="24" fill="#c70063"/><rect x="1286" y="424" width="24" height="24" fill="#c70062"/><rect x="1310" y="424" width="24" height="24" fill="#c70060"/><rect x="110" y="448" width="24" height="24" fill="#009fc7"/><rect x="134" y="448" width="24" height="24" fill="#009dc7"/><rect x="158" y="448" width="24" height="24" fill="#009bc7"/><rect x="182" y="448" width="24" height="24" fill="#0098c7"/><rect x="206" y="448" width="24" height="24" fill="#0095c7"/><rect x="230" y="448" width="24" height="24" fill="#0091c7"/><rect x="254" y="448" width="24" height="24" fill="#008dc7"/><rect x="278" y="448" width="24" height="24" fill="#0088c7"/><rect x="302" y="448" width="24" height="24" fill="#0082c7"/><rect x="326" y="448" width="24" height="24" fill="#007ac7"/><rect x="350" y="448" width="24" height="24" fill="#0071c7"/><rect x="374" y="448" width="24" height="24" fill="#0064c7"/><rect x="398" y="448" width="24" height="24" fill="#1855c7"/><rect x="422" y="448" width="24" height="24" fill="#4351c7"/><rect x="446" y="448" width="24" height="24" fill="#5a4bc7"/><rect x="470" y="448" width="24" height="24" fill="#6c45c7"/><rect x="494" y="448" width="24" height="24" fill="#7c3ec7"/><rect x="518" y="448" width="24" height="24" fill="#8a35c7"/><rect x="542" y="448" width="24" height="24" fill="#9729c7"/><rect x="566" y="448" width="24" height="24" fill="#a317c7"/><rect x="590" y="448" width="24" height="24" fill="#ae00c7"/><rect x="614" y="448" width="24" height="24" fill="#ba00c7"/><rect x="638" y="448" width="24" height="24" fill="#c400c7"/><rect x="662" y="448" width="24" height="24" fill="#c700c0"/><rect x="686" y="448" width="24" height="24" fill="#c700b8"/><rect x="710" y="448" width="24" height="24" fill="#c700b1"/><rect x="734" y="448" width="24" height="24" fill="#c700aa"/><rect x="758" y="448" width="24" height="24" fill="#c700a5"/><rect x="782" y="448" width="24" height="24" fill="#c7009f"/><rect x="806" y="448" width="24" height="24" fill="#c7009b"/><rect x="830" y="448" width="24" height="24" fill="#c70097"/><rect x="854" y="448" width="24" height="24" fill="#c70093"/><rect x="878" y="448" width="24" height="24" fill="#c7008f"/><rect x="902" y="448" width="24" height="24" fill="#c7008c"/><rect x="926" y="448" width="24" height="24" fill="#c70089"/><rect x="950" y="448" width="24" height="24" fill="#c70086"/><rect x="974" y="448" width="24" height="24" fill="#c70083"/><rect x="998" y="448" width="24" height="24" fill="#c70081"/><rect x="1022" y="448" width="24" height="24" fill="#c7007e"/><rect x="1046" y="448" width="24" height="24" fill="#c7007c"/><rect x="1070" y="448" width="24" height="24" fill="#c7007a"/><rect x="1094" y="448" width="24" height="24" fill="#c70078"/><rect x="1118" y="448" width="24" height="24" fill="#c70076"/><rect x="1142" y="448" width="24" height="24" fill="#c70074"/><rect x="1166" y="448" width="24" height="24" fill="#c70072"/><rect x="1190" y="448" width="24" height="24" fill="#c70071"/><rect x="1214" y="448" width="24" height="24" fill="#c7006f"/><rect x="1238" y="448" width="24" height="24" fill="#c7006e"/><rect x="1262" y="448" width="24" height="24" fill="#c7006c"/><rect x="1286" y="448" width="24" height="24" fill="#c7006b"/><rect x="1310" y="448" width="24" height="24" fill="#c70069"/><rect x="110" y="472" width="24" height="24" fill="#0095c7"/><rect x="134" y="472" width="24" height="24" fill="#0092c7"/><rect x="158" y="472" width="24" height="24" fill="#008fc7"/><rect x="182" y="472" width="24" height="24" fill="#008bc7"/><rect x="206" y="472" width="24" height="24" fill="#0087c7"/><rect x="230" y="472" width="24" height="24" fill="#0082c7"/><rect x="254" y="472" width="24" height="24" fill="#007cc7"/><rect x="278" y="472" width="24" height="24" fill="#0075c7"/><rect x="302" y="472" width="24" height="24" fill="#006cc7"/><rect x="326" y="472" width="24" height="24" fill="#0060c7"/><rect x="350" y="472" width="24" height="24" fill="#0050c7"/><rect x="374" y="472" width="24" height="24" fill="#0036c7"/><rect x="398" y="472" width="24" height="24" fill="#3b2dc7"/><rect x="422" y="472" width="24" height="24" fill="#5321c7"/><rect x="446" y="472" width="24" height="24" fill="#6509c7"/><rect x="470" y="472" width="24" height="24" fill="#7600c7"/><rect x="494" y="472" width="24" height="24" fill="#8500c7"/><rect x="518" y="472" width="24" height="24" fill="#9200c7"/><rect x="542" y="472" width="24" height="24" fill="#9d00c7"/><rect x="566" y="472" width="24" height="24" fill="#a800c7"/><rect x="590" y="472" width="24" height="24" fill="#b200c7"/><rect x="614" y="472" width="24" height="24" fill="#bb00c7"/><rect x="638" y="472" width="24" height="24" fill="#c400c7"/><rect x="662" y="472" width="24" height="24" fill="#c700c2"/><rect x="686" y="472" width="24" height="24" fill="#c700bb"/><rect x="710" y="472" width="24" height="24" fill="#c700b5"/><rect x="734" y="472" width="24" height="24" fill="#c700af"/><rect x="758" y="472" width="24" height="24" fill="#c700aa"/><rect x="782" y="472" width="24" height="24" fill="#c700a5"/><rect x="806" y="472" width="24" height="24" fill="#c700a1"/><rect x="830" y="472" width="24" height="24" fill="#c7009d"/><rect x="854" y="472" width="24" height="24" fill="#c70099"/><rect x="878" y="472" width="24" height="24" fill="#c70096"/><rect x="902" y="472" width="24" height="24" fill="#c70093"/><rect x="926" y="472" width="24" height="24" fill="#c70090"/><rect x="950" y="472" width="24" height="24" fill="#c7008d"/><rect x="974" y="472" width="24" height="24" fill="#c7008a"/><rect x="998" y="472" width="24" height="24" fill="#c70088"/><rect x="1022" y="472" width="24" height="24" fill="#c70086"/><rect x="1046" y="472" width="24" height="24" fill="#c70083"/><rect x="1070" y="472" width="24" height="24" fill="#c70081"/><rect x="1094" y="472" width="24" height="24" fill="#c7007f"/><rect x="1118" y="472" width="24" height="24" fill="#c7007d"/><rect x="1142" y="472" width="24" height="24" fill="#c7007c"/><rect x="1166" y="472" width="24" height="24" fill="#c7007a"/><rect x="1190" y="472" width="24" height="24" fill="#c70078"/><rect x="1214" y="472" width="24" height="24" fill="#c70077"/><rect x="1238" y="472" width="24" height="24" fill="#c70075"/><rect x="1262" y="472" width="24" height="24" fill="#c70074"/><rect x="1286" y="472" width="24" height="24" fill="#c70072"/><rect x="1310" y="472" width="24" height="24" fill="#c70071"/><rect x="110" y="496" width="24" height="24" fill="#008ac7"/><rect x="134" y="496" width="24" height="24" fill="#0086c7"/><rect x="158" y="496" width="24" height="24" fill="#0082c7"/><rect x="182" y="496" width="24" height="24" fill="#007dc7"/><rect x="206" y="496" width="24" height="24" fill="#0077c7"/><rect x="230" y="496" width="24" height="24" fill="#0070c7"/><rect x="254" y="496" width="24" height="24" fill="#0068c7"/><rect x="278" y="496" width="24" height="24" fill="#005dc7"/><rect x="302" y="496" width="24" height="24" fill="#004fc7"/><rect x="326" y="496" width="24" height="24" fill="#0039c7"/><rect x="350" y="496" width="24" height="24" fill="#1200c7"/><rect x="374" y="496" width="24" height="24" fill="#4100c7"/><rect x="398" y="496" width="24" height="24" fill="#5900c7"/><rect x="422" y="496" width="24" height="24" fill="#6a00c7"/><rect x="446" y="496" width="24" height="24" fill="#7800c7"/><rect x="470" y="496" width="24" height="24" fill="#8500c7"/><rect x="494" y="496" width="24" height="24" fill="#9000c7"/><rect x="518" y="496" width="24" height="24" fill="#9a00c7"/><rect x="542" y="496" width="24" height="24" fill="#a300c7"/><rect x="566" y="496" width="24" height="24" fill="#ac00c7"/><rect x="590" y="496" width="24" height="24" fill="#b400c7"/><rect x="614" y="496" width="24" height="24" fill="#bc00c7"/><rect x="638" y="496" width="24" height="24" fill="#c300c7"/><rect x="662" y="496" width="24" height="24" fill="#c700c4"/><rect x="686" y="496" width="24" height="24" fill="#c700be"/><rect x="710" y="496" width="24" height="24" fill="#c700b8"/><rect x="734" y="496" width="24" height="24" fill="#c700b3"/><rect x="758" y="496" width="24" height="24" fill="#c700ae"/><rect x="782" y="496" width="24" height="24" fill="#c700aa"/><rect x="806" y="496" width="24" height="24" fill="#c700a6"/><rect x="830" y="496" width="24" height="24" fill="#c700a2"/><rect x="854" y="496" width="24" height="24" fill="#c7009f"/><rect x="878" y="496" width="24" height="24" fill="#c7009b"/><rect x="902" y="496" width="24" height="24" fill="#c70098"/><rect x="926" y="496" width="24" height="24" fill="#c70096"/><rect x="950" y="496" width="24" height="24" fill="#c70093"/><rect x="974" y="496" width="24" height="24" fill="#c70090"/><rect x="998" y="496" width="24" height="24" fill="#c7008e"/><rect x="1022" y="496" width="24" height="24" fill="#c7008c"/><rect x="1046" y="496" width="24" height="24" fill="#c7008a"/><rect x="1070" y="496" width="24" height="24" fill="#c70087"/><rect x="1094" y="496" width="24" height="24" fill="#c70085"/><rect x="1118" y="496" width="24" height="24" fill="#c70084"/><rect x="1142" y="496" width="24" height="24" fill="#c70082"/><rect x="1166" y="496" width="24" height="24" fill="#c70080"/><rect x="1190" y="496" width="24" height="24" fill="#c7007e"/><rect x="1214" y="496" width="24" height="24" fill="#c7007d"/><rect x="1238" y="496" width="24" height="24" fill="#c7007b"/><rect x="1262" y="496" width="24" height="24" fill="#c7007a"/><rect x="1286" y="496" width="24" height="24" fill="#c70078"/><rect x="1310" y="496" width="24" height="24" fill="#c70077"/><rect x="110" y="520" width="24" height="24" fill="#007ec7"/><rect x="134" y="520" width="24" height="24" fill="#0079c7"/><rect x="158" y="520" width="24" height="24" fill="#0073c7"/><rect x="182" y="520" width="24" height="24" fill="#006dc7"/><rect x="206" y="520" width="24" height="24" fill="#0065c7"/><rect x="230" y="520" width="24" height="24" fill="#005bc7"/><rect x="254" y="520" width="24" height="24" fill="#004ec7"/><rect x="278" y="520" width="24" height="24" fill="#003bc7"/><rect x="302" y="520" width="24" height="24" fill="#0011c7"/><rect x="326" y="520" width="24" height="24" fill="#3600c7"/><rect x="350" y="520" width="24" height="24" fill="#4f00c7"/><rect x="374" y="520" width="24" height="24" fill="#6000c7"/><rect x="398" y="520" width="24" height="24" fill="#6e00c7"/><rect x="422" y="520" width="24" height="24" fill="#7a00c7"/><rect x="446" y="520" width="24" height="24" fill="#8500c7"/><rect x="470" y="520" width="24" height="24" fill="#8f00c7"/><rect x="494" y="520" width="24" height="24" fill="#9800c7"/><rect x="518" y="520" width="24" height="24" fill="#a000c7"/><rect x="542" y="520" width="24" height="24" fill="#a800c7"/><rect x="566" y="520" width="24" height="24" fill="#af00c7"/><rect x="590" y="520" width="24" height="24" fill="#b600c7"/><rect x="614" y="520" width="24" height="24" fill="#bc00c7"/><rect x="638" y="520" width="24" height="24" fill="#c300c7"/><rect x="662" y="520" width="24" height="24" fill="#c700c5"/><rect x="686" y="520" width="24" height="24" fill="#c700bf"/><rect x="710" y="520" width="24" height="24" fill="#c700ba"/><rect x="734" y="520" width="24" height="24" fill="#c700b6"/><rect x="758" y="520" width="24" height="24" fill="#c700b1"/><rect x="782" y="520" width="24" height="24" fill="#c700ad"/><rect x="806" y="520" width="24" height="24" fill="#c700aa"/><rect x="830" y="520" width="24" height="24" fill="#c700a6"/><rect x="854" y="520" width="24" height="24" fill="#c700a3"/><rect x="878" y="520" width="24" height="24" fill="#c700a0"/><rect x="902" y="520" width="24" height="24" fill="#c7009d"/><rect x="926" y="520" width="24" height="24" fill="#c7009a"/><rect x="950" y="520" width="24" height="24" fill="#c70098"/><rect x="974" y="520" width="24" height="24" fill="#c70095"/><rect x="998" y="520" width="24" height="24" fill="#c70093"/><rect x="1022" y="520" width="24" height="24" fill="#c70091"/><rect x="1046" y="520" width="24" height="24" fill="#c7008f"/><rect x="1070" y="520" width="24" height="24" fill="#c7008d"/><rect x="1094" y="520" width="24" height="24" fill="#c7008b"/><rect x="1118" y="520" width="24" height="24" fill="#c70089"/><rect x="1142" y="520" width="24" height="24" fill="#c70087"/><rect x="1166" y="520" width="24" height="24" fill="#c70085"/><rect x="1190" y="520" width="24" height="24" fill="#c70084"/><rect x="1214" y="520" width="24" height="24" fill="#c70082"/><rect x="1238" y="520" width="24" height="24" fill="#c70081"/><rect x="1262" y="520" width="24" height="24" fill="#c7007f"/><rect x="1286" y="520" width="24" height="24" fill="#c7007e"/><rect x="1310" y="520" width="24" height="24" fill="#c7007c"/></g><g stroke="#4a4a4a" stroke-width="1.2"><line x1="124.0" y1="0" x2="124.0" y2="563"/><line x1="289.4" y1="0" x2="289.4" y2="563"/><line x1="454.8" y1="0" x2="454.8" y2="563"/><line x1="620.2" y1="0" x2="620.2" y2="563"/><line x1="785.6" y1="0" x2="785.6" y2="563"/><line x1="951.0" y1="0" x2="951.0" y2="563"/><line x1="1116.4" y1="0" x2="1116.4" y2="563"/><line x1="1281.8" y1="0" x2="1281.8" y2="563"/><line x1="0" y1="478.4" x2="1488" y2="478.4"/><line x1="0" y1="422.3" x2="1488" y2="422.3"/><line x1="0" y1="366.1" x2="1488" y2="366.1"/><line x1="0" y1="309.9" x2="1488" y2="309.9"/><line x1="0" y1="253.8" x2="1488" y2="253.8"/><line x1="0" y1="197.6" x2="1488" y2="197.6"/><line x1="0" y1="141.4" x2="1488" y2="141.4"/><line x1="0" y1="85.2" x2="1488" y2="85.2"/><line x1="0" y1="29.1" x2="1488" y2="29.1"/></g><g clip-path="url(#ct)" shape-rendering="crispEdges"><rect x="398" y="184" width="24" height="24" fill="#00ffac"/><rect x="422" y="184" width="24" height="24" fill="#00ffa7"/><rect x="446" y="184" width="24" height="24" fill="#00ffa0"/><rect x="470" y="184" width="24" height="24" fill="#00ff99"/><rect x="494" y="184" width="24" height="24" fill="#00ff90"/><rect x="518" y="184" width="24" height="24" fill="#00ff85"/><rect x="542" y="184" width="24" height="24" fill="#00ff76"/><rect x="566" y="184" width="24" height="24" fill="#00ff63"/><rect x="590" y="184" width="24" height="24" fill="#00ff44"/><rect x="614" y="184" width="24" height="24" fill="#27ff00"/><rect x="638" y="184" width="24" height="24" fill="#5aff00"/><rect x="662" y="184" width="24" height="24" fill="#76ff00"/><rect x="686" y="184" width="24" height="24" fill="#8cff00"/><rect x="710" y="184" width="24" height="24" fill="#9fff00"/><rect x="734" y="184" width="24" height="24" fill="#afff00"/><rect x="758" y="184" width="24" height="24" fill="#bdff00"/><rect x="782" y="184" width="24" height="24" fill="#caff00"/><rect x="806" y="184" width="24" height="24" fill="#d6ff00"/><rect x="830" y="184" width="24" height="24" fill="#e1ff00"/><rect x="854" y="184" width="24" height="24" fill="#ebff00"/><rect x="878" y="184" width="24" height="24" fill="#f5ff00"/><rect x="902" y="184" width="24" height="24" fill="#ffff00"/><rect x="926" y="184" width="24" height="24" fill="#fff700"/><rect x="950" y="184" width="24" height="24" fill="#ffef00"/><rect x="974" y="184" width="24" height="24" fill="#ffe800"/><rect x="998" y="184" width="24" height="24" fill="#ffe100"/><rect x="1022" y="184" width="24" height="24" fill="#ffdc00"/><rect x="1046" y="184" width="24" height="24" fill="#ffd600"/><rect x="1070" y="184" width="24" height="24" fill="#ffd100"/><rect x="1094" y="184" width="24" height="24" fill="#ffcc00"/><rect x="1118" y="184" width="24" height="24" fill="#ffc800"/><rect x="1142" y="184" width="24" height="24" fill="#ffc400"/><rect x="398" y="208" width="24" height="24" fill="#00ffb5"/><rect x="422" y="208" width="24" height="24" fill="#00ffaf"/><rect x="446" y="208" width="24" height="24" fill="#00ffa9"/><rect x="470" y="208" width="24" height="24" fill="#00ffa2"/><rect x="494" y="208" width="24" height="24" fill="#00ff99"/><rect x="518" y="208" width="24" height="24" fill="#00ff8e"/><rect x="542" y="208" width="24" height="24" fill="#00ff80"/><rect x="566" y="208" width="24" height="24" fill="#00ff6d"/><rect x="590" y="208" width="24" height="24" fill="#01ff4f"/><rect x="614" y="208" width="24" height="24" fill="#4cff46"/><rect x="638" y="208" width="24" height="24" fill="#6bff3b"/><rect x="662" y="208" width="24" height="24" fill="#82ff2b"/><rect x="686" y="208" width="24" height="24" fill="#95ff0e"/><rect x="710" y="208" width="24" height="24" fill="#a9ff00"/><rect x="734" y="208" width="24" height="24" fill="#baff00"/><rect x="758" y="208" width="24" height="24" fill="#caff00"/><rect x="782" y="208" width="24" height="24" fill="#d8ff00"/><rect x="806" y="208" width="24" height="24" fill="#e5ff00"/><rect x="830" y="208" width="24" height="24" fill="#f1ff00"/><rect x="854" y="208" width="24" height="24" fill="#fcff00"/><rect x="878" y="208" width="24" height="24" fill="#fff700"/><rect x="902" y="208" width="24" height="24" fill="#ffee00"/><rect x="926" y="208" width="24" height="24" fill="#ffe600"/><rect x="950" y="208" width="24" height="24" fill="#ffdf00"/><rect x="974" y="208" width="24" height="24" fill="#ffd800"/><rect x="998" y="208" width="24" height="24" fill="#ffd200"/><rect x="1022" y="208" width="24" height="24" fill="#ffcc00"/><rect x="1046" y="208" width="24" height="24" fill="#ffc700"/><rect x="1070" y="208" width="24" height="24" fill="#ffc200"/><rect x="1094" y="208" width="24" height="24" fill="#ffbe00"/><rect x="1118" y="208" width="24" height="24" fill="#ffba00"/><rect x="1142" y="208" width="24" height="24" fill="#ffb600"/><rect x="398" y="232" width="24" height="24" fill="#00ffbe"/><rect x="422" y="232" width="24" height="24" fill="#00ffb9"/><rect x="446" y="232" width="24" height="24" fill="#00ffb3"/><rect x="470" y="232" width="24" height="24" fill="#00ffac"/><rect x="494" y="232" width="24" height="24" fill="#00ffa4"/><rect x="518" y="232" width="24" height="24" fill="#00ff9a"/><rect x="542" y="232" width="24" height="24" fill="#00ff8c"/><rect x="566" y="232" width="24" height="24" fill="#00ff79"/><rect x="590" y="232" width="24" height="24" fill="#48ff71"/><rect x="614" y="232" width="24" height="24" fill="#6aff6b"/><rect x="638" y="232" width="24" height="24" fill="#84ff65"/><rect x="662" y="232" width="24" height="24" fill="#99ff5d"/><rect x="686" y="232" width="24" height="24" fill="#abff54"/><rect x="710" y="232" width="24" height="24" fill="#bcff4a"/><rect x="734" y="232" width="24" height="24" fill="#ccff3d"/><rect x="758" y="232" width="24" height="24" fill="#dcff2a"/><rect x="782" y="232" width="24" height="24" fill="#eaff00"/><rect x="806" y="232" width="24" height="24" fill="#f8ff00"/><rect x="830" y="232" width="24" height="24" fill="#fff800"/><rect x="854" y="232" width="24" height="24" fill="#ffed00"/><rect x="878" y="232" width="24" height="24" fill="#ffe300"/><rect x="902" y="232" width="24" height="24" fill="#ffdb00"/><rect x="926" y="232" width="24" height="24" fill="#ffd300"/><rect x="950" y="232" width="24" height="24" fill="#ffcc00"/><rect x="974" y="232" width="24" height="24" fill="#ffc600"/><rect x="998" y="232" width="24" height="24" fill="#ffc000"/><rect x="1022" y="232" width="24" height="24" fill="#ffbb00"/><rect x="1046" y="232" width="24" height="24" fill="#ffb600"/><rect x="1070" y="232" width="24" height="24" fill="#ffb200"/><rect x="1094" y="232" width="24" height="24" fill="#ffae00"/><rect x="1118" y="232" width="24" height="24" fill="#ffaa00"/><rect x="1142" y="232" width="24" height="24" fill="#ffa600"/><rect x="398" y="256" width="24" height="24" fill="#00ffc9"/><rect x="422" y="256" width="24" height="24" fill="#00ffc4"/><rect x="446" y="256" width="24" height="24" fill="#00ffbf"/><rect x="470" y="256" width="24" height="24" fill="#00ffb9"/><rect x="494" y="256" width="24" height="24" fill="#00ffb1"/><rect x="518" y="256" width="24" height="24" fill="#00ffa7"/><rect x="542" y="256" width="24" height="24" fill="#00ff9a"/><rect x="566" y="256" width="24" height="24" fill="#42ff92"/><rect x="590" y="256" width="24" height="24" fill="#6aff8f"/><rect x="614" y="256" width="24" height="24" fill="#86ff8a"/><rect x="638" y="256" width="24" height="24" fill="#9cff86"/><rect x="662" y="256" width="24" height="24" fill="#b1ff81"/><rect x="686" y="256" width="24" height="24" fill="#c3ff7b"/><rect x="710" y="256" width="24" height="24" fill="#d4ff75"/><rect x="734" y="256" width="24" height="24" fill="#e4ff6d"/><rect x="758" y="256" width="24" height="24" fill="#f4ff65"/><rect x="782" y="256" width="24" height="24" fill="#fffb5a"/><rect x="806" y="256" width="24" height="24" fill="#ffed49"/><rect x="830" y="256" width="24" height="24" fill="#ffe137"/><rect x="854" y="256" width="24" height="24" fill="#ffd61f"/><rect x="878" y="256" width="24" height="24" fill="#ffcc00"/><rect x="902" y="256" width="24" height="24" fill="#ffc400"/><rect x="926" y="256" width="24" height="24" fill="#ffbd00"/><rect x="950" y="256" width="24" height="24" fill="#ffb700"/><rect x="974" y="256" width="24" height="24" fill="#ffb100"/><rect x="998" y="256" width="24" height="24" fill="#ffac00"/><rect x="1022" y="256" width="24" height="24" fill="#ffa700"/><rect x="1046" y="256" width="24" height="24" fill="#ffa300"/><rect x="1070" y="256" width="24" height="24" fill="#ff9f00"/><rect x="1094" y="256" width="24" height="24" fill="#ff9b00"/><rect x="1118" y="256" width="24" height="24" fill="#ff9800"/><rect x="1142" y="256" width="24" height="24" fill="#ff9400"/><rect x="398" y="280" width="24" height="24" fill="#00ffd5"/><rect x="422" y="280" width="24" height="24" fill="#00ffd2"/><rect x="446" y="280" width="24" height="24" fill="#00ffcd"/><rect x="470" y="280" width="24" height="24" fill="#00ffc8"/><rect x="494" y="280" width="24" height="24" fill="#00ffc1"/><rect x="518" y="280" width="24" height="24" fill="#00ffb8"/><rect x="542" y="280" width="24" height="24" fill="#3bffb1"/><rect x="566" y="280" width="24" height="24" fill="#69ffaf"/><rect x="590" y="280" width="24" height="24" fill="#88ffac"/><rect x="614" y="280" width="24" height="24" fill="#a1ffa9"/><rect x="638" y="280" width="24" height="24" fill="#b7ffa5"/><rect x="662" y="280" width="24" height="24" fill="#cbffa2"/><rect x="686" y="280" width="24" height="24" fill="#ddff9e"/><rect x="710" y="280" width="24" height="24" fill="#efff9a"/><rect x="734" y="280" width="24" height="24" fill="#fffe94"/><rect x="758" y="280" width="24" height="24" fill="#ffee85"/><rect x="782" y="280" width="24" height="24" fill="#ffe078"/><rect x="806" y="280" width="24" height="24" fill="#ffd46b"/><rect x="830" y="280" width="24" height="24" fill="#ffc95f"/><rect x="854" y="280" width="24" height="24" fill="#ffbf53"/><rect x="878" y="280" width="24" height="24" fill="#ffb646"/><rect x="902" y="280" width="24" height="24" fill="#ffad39"/><rect x="926" y="280" width="24" height="24" fill="#ffa529"/><rect x="950" y="280" width="24" height="24" fill="#ff9e10"/><rect x="974" y="280" width="24" height="24" fill="#ff9800"/><rect x="998" y="280" width="24" height="24" fill="#ff9300"/><rect x="1022" y="280" width="24" height="24" fill="#ff8f00"/><rect x="1046" y="280" width="24" height="24" fill="#ff8b00"/><rect x="1070" y="280" width="24" height="24" fill="#ff8800"/><rect x="1094" y="280" width="24" height="24" fill="#ff8500"/><rect x="1118" y="280" width="24" height="24" fill="#ff8200"/><rect x="1142" y="280" width="24" height="24" fill="#ff7f00"/><rect x="398" y="304" width="24" height="24" fill="#00ffe4"/><rect x="422" y="304" width="24" height="24" fill="#00ffe1"/><rect x="446" y="304" width="24" height="24" fill="#00ffde"/><rect x="470" y="304" width="24" height="24" fill="#00ffda"/><rect x="494" y="304" width="24" height="24" fill="#00ffd5"/><rect x="518" y="304" width="24" height="24" fill="#30ffd0"/><rect x="542" y="304" width="24" height="24" fill="#69ffcf"/><rect x="566" y="304" width="24" height="24" fill="#8bffcd"/><rect x="590" y="304" width="24" height="24" fill="#a6ffcb"/><rect x="614" y="304" width="24" height="24" fill="#beffc9"/><rect x="638" y="304" width="24" height="24" fill="#d4ffc7"/><rect x="662" y="304" width="24" height="24" fill="#e9ffc5"/><rect x="686" y="304" width="24" height="24" fill="#fcffc2"/><rect x="710" y="304" width="24" height="24" fill="#fff0b4"/><rect x="734" y="304" width="24" height="24" fill="#ffe0a5"/><rect x="758" y="304" width="24" height="24" fill="#ffd298"/><rect x="782" y="304" width="24" height="24" fill="#ffc68c"/><rect x="806" y="304" width="24" height="24" fill="#ffbb81"/><rect x="830" y="304" width="24" height="24" fill="#ffb176"/><rect x="854" y="304" width="24" height="24" fill="#ffa86c"/><rect x="878" y="304" width="24" height="24" fill="#ff9f63"/><rect x="902" y="304" width="24" height="24" fill="#ff9759"/><rect x="926" y="304" width="24" height="24" fill="#ff8f4f"/><rect x="950" y="304" width="24" height="24" fill="#ff8845"/><rect x="974" y="304" width="24" height="24" fill="#ff813a"/><rect x="998" y="304" width="24" height="24" fill="#ff7a2e"/><rect x="1022" y="304" width="24" height="24" fill="#ff731e"/><rect x="1046" y="304" width="24" height="24" fill="#ff6d02"/><rect x="1070" y="304" width="24" height="24" fill="#ff6a00"/><rect x="1094" y="304" width="24" height="24" fill="#ff6700"/><rect x="1118" y="304" width="24" height="24" fill="#ff6500"/><rect x="1142" y="304" width="24" height="24" fill="#ff6300"/><rect x="398" y="328" width="24" height="24" fill="#00fff6"/><rect x="422" y="328" width="24" height="24" fill="#00fff5"/><rect x="446" y="328" width="24" height="24" fill="#00fff4"/><rect x="470" y="328" width="24" height="24" fill="#00fff2"/><rect x="494" y="328" width="24" height="24" fill="#1cfff1"/><rect x="518" y="328" width="24" height="24" fill="#68fff0"/><rect x="542" y="328" width="24" height="24" fill="#8ffff0"/><rect x="566" y="328" width="24" height="24" fill="#adffef"/><rect x="590" y="328" width="24" height="24" fill="#c8ffef"/><rect x="614" y="328" width="24" height="24" fill="#e0ffee"/><rect x="638" y="328" width="24" height="24" fill="#f7ffed"/><rect x="662" y="328" width="24" height="24" fill="#fff2e0"/><rect x="686" y="328" width="24" height="24" fill="#ffe0cf"/><rect x="710" y="328" width="24" height="24" fill="#ffd0bf"/><rect x="734" y="328" width="24" height="24" fill="#ffc2b2"/><rect x="758" y="328" width="24" height="24" fill="#ffb6a6"/><rect x="782" y="328" width="24" height="24" fill="#ffab9b"/><rect x="806" y="328" width="24" height="24" fill="#ffa191"/><rect x="830" y="328" width="24" height="24" fill="#ff9787"/><rect x="854" y="328" width="24" height="24" fill="#ff8f7e"/><rect x="878" y="328" width="24" height="24" fill="#ff8675"/><rect x="902" y="328" width="24" height="24" fill="#ff7e6d"/><rect x="926" y="328" width="24" height="24" fill="#ff7765"/><rect x="950" y="328" width="24" height="24" fill="#ff6f5d"/><rect x="974" y="328" width="24" height="24" fill="#ff6855"/><rect x="998" y="328" width="24" height="24" fill="#ff614c"/><rect x="1022" y="328" width="24" height="24" fill="#ff5944"/><rect x="1046" y="328" width="24" height="24" fill="#ff523b"/><rect x="1070" y="328" width="24" height="24" fill="#ff4b31"/><rect x="1094" y="328" width="24" height="24" fill="#ff4325"/><rect x="1118" y="328" width="24" height="24" fill="#ff3b16"/><rect x="1142" y="328" width="24" height="24" fill="#ff3400"/><rect x="398" y="352" width="24" height="24" fill="#00f2ff"/><rect x="422" y="352" width="24" height="24" fill="#00f0ff"/><rect x="446" y="352" width="24" height="24" fill="#00eeff"/><rect x="470" y="352" width="24" height="24" fill="#00ebff"/><rect x="494" y="352" width="24" height="24" fill="#5eeaff"/><rect x="518" y="352" width="24" height="24" fill="#87e9ff"/><rect x="542" y="352" width="24" height="24" fill="#a6e9ff"/><rect x="566" y="352" width="24" height="24" fill="#c1e8ff"/><rect x="590" y="352" width="24" height="24" fill="#d9e7ff"/><rect x="614" y="352" width="24" height="24" fill="#efe6ff"/><rect x="638" y="352" width="24" height="24" fill="#ffdff9"/><rect x="662" y="352" width="24" height="24" fill="#ffcde6"/><rect x="686" y="352" width="24" height="24" fill="#ffbed6"/><rect x="710" y="352" width="24" height="24" fill="#ffb0c8"/><rect x="734" y="352" width="24" height="24" fill="#ffa4bc"/><rect x="758" y="352" width="24" height="24" fill="#ff98b1"/><rect x="782" y="352" width="24" height="24" fill="#ff8ea6"/><rect x="806" y="352" width="24" height="24" fill="#ff849d"/><rect x="830" y="352" width="24" height="24" fill="#ff7b94"/><rect x="854" y="352" width="24" height="24" fill="#ff728c"/><rect x="878" y="352" width="24" height="24" fill="#ff6984"/><rect x="902" y="352" width="24" height="24" fill="#ff617c"/><rect x="926" y="352" width="24" height="24" fill="#ff5975"/><rect x="950" y="352" width="24" height="24" fill="#ff506d"/><rect x="974" y="352" width="24" height="24" fill="#ff4766"/><rect x="998" y="352" width="24" height="24" fill="#ff3e60"/><rect x="1022" y="352" width="24" height="24" fill="#ff3459"/><rect x="1046" y="352" width="24" height="24" fill="#ff2852"/><rect x="1070" y="352" width="24" height="24" fill="#ff194b"/><rect x="1094" y="352" width="24" height="24" fill="#ff0044"/><rect x="1118" y="352" width="24" height="24" fill="#ff0042"/><rect x="1142" y="352" width="24" height="24" fill="#ff0041"/><rect x="398" y="376" width="24" height="24" fill="#00d9ff"/><rect x="422" y="376" width="24" height="24" fill="#00d4ff"/><rect x="446" y="376" width="24" height="24" fill="#00cdff"/><rect x="470" y="376" width="24" height="24" fill="#4fcaff"/><rect x="494" y="376" width="24" height="24" fill="#78c8ff"/><rect x="518" y="376" width="24" height="24" fill="#97c6ff"/><rect x="542" y="376" width="24" height="24" fill="#b0c4ff"/><rect x="566" y="376" width="24" height="24" fill="#c6c1ff"/><rect x="590" y="376" width="24" height="24" fill="#dbbfff"/><rect x="614" y="376" width="24" height="24" fill="#efbcff"/><rect x="638" y="376" width="24" height="24" fill="#ffb7fc"/><rect x="662" y="376" width="24" height="24" fill="#ffa7eb"/><rect x="686" y="376" width="24" height="24" fill="#ff9add"/><rect x="710" y="376" width="24" height="24" fill="#ff8dd0"/><rect x="734" y="376" width="24" height="24" fill="#ff81c4"/><rect x="758" y="376" width="24" height="24" fill="#ff76b9"/><rect x="782" y="376" width="24" height="24" fill="#ff6cb0"/><rect x="806" y="376" width="24" height="24" fill="#ff61a7"/><rect x="830" y="376" width="24" height="24" fill="#ff579e"/><rect x="854" y="376" width="24" height="24" fill="#ff4d96"/><rect x="878" y="376" width="24" height="24" fill="#ff428f"/><rect x="902" y="376" width="24" height="24" fill="#ff3688"/><rect x="926" y="376" width="24" height="24" fill="#ff2881"/><rect x="950" y="376" width="24" height="24" fill="#ff157a"/><rect x="974" y="376" width="24" height="24" fill="#ff0075"/><rect x="998" y="376" width="24" height="24" fill="#ff0072"/><rect x="1022" y="376" width="24" height="24" fill="#ff0070"/><rect x="1046" y="376" width="24" height="24" fill="#ff006d"/><rect x="1070" y="376" width="24" height="24" fill="#ff006b"/><rect x="1094" y="376" width="24" height="24" fill="#ff0068"/><rect x="1118" y="376" width="24" height="24" fill="#ff0066"/><rect x="1142" y="376" width="24" height="24" fill="#ff0064"/><rect x="398" y="400" width="24" height="24" fill="#00bcff"/><rect x="422" y="400" width="24" height="24" fill="#00b2ff"/><rect x="446" y="400" width="24" height="24" fill="#40acff"/><rect x="470" y="400" width="24" height="24" fill="#6ca9ff"/><rect x="494" y="400" width="24" height="24" fill="#89a5ff"/><rect x="518" y="400" width="24" height="24" fill="#a2a2ff"/><rect x="542" y="400" width="24" height="24" fill="#b79eff"/><rect x="566" y="400" width="24" height="24" fill="#cb9aff"/><rect x="590" y="400" width="24" height="24" fill="#dd96ff"/><rect x="614" y="400" width="24" height="24" fill="#ee91ff"/><rect x="638" y="400" width="24" height="24" fill="#ff8bff"/><rect x="662" y="400" width="24" height="24" fill="#ff7def"/><rect x="686" y="400" width="24" height="24" fill="#ff6fe2"/><rect x="710" y="400" width="24" height="24" fill="#ff62d6"/><rect x="734" y="400" width="24" height="24" fill="#ff55cb"/><rect x="758" y="400" width="24" height="24" fill="#ff48c1"/><rect x="782" y="400" width="24" height="24" fill="#ff39b8"/><rect x="806" y="400" width="24" height="24" fill="#ff28af"/><rect x="830" y="400" width="24" height="24" fill="#ff0ca7"/><rect x="854" y="400" width="24" height="24" fill="#ff00a1"/><rect x="878" y="400" width="24" height="24" fill="#ff009c"/><rect x="902" y="400" width="24" height="24" fill="#ff0098"/><rect x="926" y="400" width="24" height="24" fill="#ff0094"/><rect x="950" y="400" width="24" height="24" fill="#ff0090"/><rect x="974" y="400" width="24" height="24" fill="#ff008c"/><rect x="998" y="400" width="24" height="24" fill="#ff0089"/><rect x="1022" y="400" width="24" height="24" fill="#ff0086"/><rect x="1046" y="400" width="24" height="24" fill="#ff0083"/><rect x="1070" y="400" width="24" height="24" fill="#ff0081"/><rect x="1094" y="400" width="24" height="24" fill="#ff007e"/><rect x="1118" y="400" width="24" height="24" fill="#ff007c"/><rect x="1142" y="400" width="24" height="24" fill="#ff007a"/><rect x="398" y="424" width="24" height="24" fill="#0099ff"/><rect x="422" y="424" width="24" height="24" fill="#318eff"/><rect x="446" y="424" width="24" height="24" fill="#6089ff"/><rect x="470" y="424" width="24" height="24" fill="#7e85ff"/><rect x="494" y="424" width="24" height="24" fill="#9580ff"/><rect x="518" y="424" width="24" height="24" fill="#aa7aff"/><rect x="542" y="424" width="24" height="24" fill="#bd74ff"/><rect x="566" y="424" width="24" height="24" fill="#ce6dff"/><rect x="590" y="424" width="24" height="24" fill="#de65ff"/><rect x="614" y="424" width="24" height="24" fill="#ee5cff"/><rect x="638" y="424" width="24" height="24" fill="#fd51ff"/><rect x="662" y="424" width="24" height="24" fill="#ff3ef3"/><rect x="686" y="424" width="24" height="24" fill="#ff28e6"/><rect x="710" y="424" width="24" height="24" fill="#ff00db"/><rect x="734" y="424" width="24" height="24" fill="#ff00d2"/><rect x="758" y="424" width="24" height="24" fill="#ff00c9"/><rect x="782" y="424" width="24" height="24" fill="#ff00c2"/><rect x="806" y="424" width="24" height="24" fill="#ff00bc"/><rect x="830" y="424" width="24" height="24" fill="#ff00b6"/><rect x="854" y="424" width="24" height="24" fill="#ff00b1"/><rect x="878" y="424" width="24" height="24" fill="#ff00ac"/><rect x="902" y="424" width="24" height="24" fill="#ff00a8"/><rect x="926" y="424" width="24" height="24" fill="#ff00a3"/><rect x="950" y="424" width="24" height="24" fill="#ff00a0"/><rect x="974" y="424" width="24" height="24" fill="#ff009c"/><rect x="998" y="424" width="24" height="24" fill="#ff0099"/><rect x="1022" y="424" width="24" height="24" fill="#ff0096"/><rect x="1046" y="424" width="24" height="24" fill="#ff0093"/><rect x="1070" y="424" width="24" height="24" fill="#ff0090"/><rect x="1094" y="424" width="24" height="24" fill="#ff008e"/><rect x="1118" y="424" width="24" height="24" fill="#ff008b"/><rect x="1142" y="424" width="24" height="24" fill="#ff0089"/><rect x="398" y="448" width="24" height="24" fill="#1f6dff"/><rect x="422" y="448" width="24" height="24" fill="#5567ff"/><rect x="446" y="448" width="24" height="24" fill="#7360ff"/><rect x="470" y="448" width="24" height="24" fill="#8b58ff"/><rect x="494" y="448" width="24" height="24" fill="#9f4fff"/><rect x="518" y="448" width="24" height="24" fill="#b144ff"/><rect x="542" y="448" width="24" height="24" fill="#c135ff"/><rect x="566" y="448" width="24" height="24" fill="#d11eff"/><rect x="590" y="448" width="24" height="24" fill="#e000ff"/><rect x="614" y="448" width="24" height="24" fill="#ee00ff"/><rect x="638" y="448" width="24" height="24" fill="#fc00ff"/><rect x="662" y="448" width="24" height="24" fill="#ff00f6"/><rect x="686" y="448" width="24" height="24" fill="#ff00ec"/><rect x="710" y="448" width="24" height="24" fill="#ff00e2"/><rect x="734" y="448" width="24" height="24" fill="#ff00da"/><rect x="758" y="448" width="24" height="24" fill="#ff00d3"/><rect x="782" y="448" width="24" height="24" fill="#ff00cc"/><rect x="806" y="448" width="24" height="24" fill="#ff00c6"/><rect x="830" y="448" width="24" height="24" fill="#ff00c1"/><rect x="854" y="448" width="24" height="24" fill="#ff00bc"/><rect x="878" y="448" width="24" height="24" fill="#ff00b7"/><rect x="902" y="448" width="24" height="24" fill="#ff00b3"/><rect x="926" y="448" width="24" height="24" fill="#ff00af"/><rect x="950" y="448" width="24" height="24" fill="#ff00ac"/><rect x="974" y="448" width="24" height="24" fill="#ff00a8"/><rect x="998" y="448" width="24" height="24" fill="#ff00a5"/><rect x="1022" y="448" width="24" height="24" fill="#ff00a2"/><rect x="1046" y="448" width="24" height="24" fill="#ff009f"/><rect x="1070" y="448" width="24" height="24" fill="#ff009c"/><rect x="1094" y="448" width="24" height="24" fill="#ff009a"/><rect x="1118" y="448" width="24" height="24" fill="#ff0097"/><rect x="1142" y="448" width="24" height="24" fill="#ff0095"/><rect x="398" y="472" width="24" height="24" fill="#4b39ff"/><rect x="422" y="472" width="24" height="24" fill="#6a2aff"/><rect x="446" y="472" width="24" height="24" fill="#810cff"/><rect x="470" y="472" width="24" height="24" fill="#9700ff"/><rect x="494" y="472" width="24" height="24" fill="#aa00ff"/><rect x="518" y="472" width="24" height="24" fill="#bb00ff"/><rect x="542" y="472" width="24" height="24" fill="#ca00ff"/><rect x="566" y="472" width="24" height="24" fill="#d700ff"/><rect x="590" y="472" width="24" height="24" fill="#e400ff"/><rect x="614" y="472" width="24" height="24" fill="#f000ff"/><rect x="638" y="472" width="24" height="24" fill="#fb00ff"/><rect x="662" y="472" width="24" height="24" fill="#ff00f9"/><rect x="686" y="472" width="24" height="24" fill="#ff00f0"/><rect x="710" y="472" width="24" height="24" fill="#ff00e8"/><rect x="734" y="472" width="24" height="24" fill="#ff00e1"/><rect x="758" y="472" width="24" height="24" fill="#ff00da"/><rect x="782" y="472" width="24" height="24" fill="#ff00d4"/><rect x="806" y="472" width="24" height="24" fill="#ff00ce"/><rect x="830" y="472" width="24" height="24" fill="#ff00c9"/><rect x="854" y="472" width="24" height="24" fill="#ff00c5"/><rect x="878" y="472" width="24" height="24" fill="#ff00c0"/><rect x="902" y="472" width="24" height="24" fill="#ff00bc"/><rect x="926" y="472" width="24" height="24" fill="#ff00b8"/><rect x="950" y="472" width="24" height="24" fill="#ff00b5"/><rect x="974" y="472" width="24" height="24" fill="#ff00b1"/><rect x="998" y="472" width="24" height="24" fill="#ff00ae"/><rect x="1022" y="472" width="24" height="24" fill="#ff00ab"/><rect x="1046" y="472" width="24" height="24" fill="#ff00a8"/><rect x="1070" y="472" width="24" height="24" fill="#ff00a6"/><rect x="1094" y="472" width="24" height="24" fill="#ff00a3"/><rect x="1118" y="472" width="24" height="24" fill="#ff00a1"/><rect x="1142" y="472" width="24" height="24" fill="#ff009e"/><rect x="398" y="496" width="24" height="24" fill="#7200ff"/><rect x="422" y="496" width="24" height="24" fill="#8800ff"/><rect x="446" y="496" width="24" height="24" fill="#9a00ff"/><rect x="470" y="496" width="24" height="24" fill="#aa00ff"/><rect x="494" y="496" width="24" height="24" fill="#b900ff"/><rect x="518" y="496" width="24" height="24" fill="#c600ff"/><rect x="542" y="496" width="24" height="24" fill="#d200ff"/><rect x="566" y="496" width="24" height="24" fill="#dd00ff"/><rect x="590" y="496" width="24" height="24" fill="#e700ff"/><rect x="614" y="496" width="24" height="24" fill="#f100ff"/><rect x="638" y="496" width="24" height="24" fill="#fa00ff"/><rect x="662" y="496" width="24" height="24" fill="#ff00fb"/><rect x="686" y="496" width="24" height="24" fill="#ff00f3"/><rect x="710" y="496" width="24" height="24" fill="#ff00ec"/><rect x="734" y="496" width="24" height="24" fill="#ff00e5"/><rect x="758" y="496" width="24" height="24" fill="#ff00df"/><rect x="782" y="496" width="24" height="24" fill="#ff00da"/><rect x="806" y="496" width="24" height="24" fill="#ff00d5"/><rect x="830" y="496" width="24" height="24" fill="#ff00d0"/><rect x="854" y="496" width="24" height="24" fill="#ff00cb"/><rect x="878" y="496" width="24" height="24" fill="#ff00c7"/><rect x="902" y="496" width="24" height="24" fill="#ff00c3"/><rect x="926" y="496" width="24" height="24" fill="#ff00c0"/><rect x="950" y="496" width="24" height="24" fill="#ff00bc"/><rect x="974" y="496" width="24" height="24" fill="#ff00b9"/><rect x="998" y="496" width="24" height="24" fill="#ff00b6"/><rect x="1022" y="496" width="24" height="24" fill="#ff00b3"/><rect x="1046" y="496" width="24" height="24" fill="#ff00b0"/><rect x="1070" y="496" width="24" height="24" fill="#ff00ae"/><rect x="1094" y="496" width="24" height="24" fill="#ff00ab"/><rect x="1118" y="496" width="24" height="24" fill="#ff00a9"/><rect x="1142" y="496" width="24" height="24" fill="#ff00a6"/></g></svg>
<canvas id="cie" class="r" style="left:0;top:0" width="1488" height="563"></canvas>
<script>(function(){
var W=1488,H=563,OX=402,OY=442;
var cv=document.getElementById('cie');if(!cv||!cv.getContext)return;var ctx=cv.getContext('2d');
var LP=[402.0,524.7,399.7,525.0,396.6,525.4,392.8,525.8,388.7,526.0,384.5,525.7,379.9,524.8,374.8,523.4,369.6,521.8,364.7,520.1,360.5,518.4,357.2,516.8,354.5,515.2,352.2,513.5,349.9,511.8,347.5,510.1,345.2,508.6,343.1,507.4,340.9,506.1,338.1,504.2,334.3,501.6,329.0,497.7,322.4,492.8,315.5,487.5,308.9,482.5,303.5,478.4,299.9,475.7,297.6,473.9,295.6,472.4,293.2,470.3,289.4,467.0,283.6,461.8,276.4,455.3,268.8,448.2,261.6,441.6,256.0,436.2,252.4,432.5,250.1,429.9,248.4,427.8,246.5,425.4,243.7,422.1,239.8,417.8,235.3,413.0,230.5,407.7,225.6,402.2,220.8,396.6,215.9,390.6,210.7,384.0,205.7,377.4,201.0,371.1,197.0,365.8,194.0,361.6,191.7,358.3,189.8,355.4,187.9,352.5,185.6,349.1,182.9,345.1,180.0,340.8,177.0,336.4,174.1,332.1,171.5,328.0,169.3,324.5,167.4,321.4,165.6,318.4,163.7,314.9,161.4,310.5,158.6,304.9,155.4,298.4,152.2,291.4,149.1,284.6,146.5,278.4,144.4,272.9,142.7,267.8,141.3,262.9,140.0,258.2,138.7,253.5,137.5,248.8,136.3,244.2,135.3,239.7,134.4,235.5,133.6,231.7,133.0,228.4,132.5,225.7,132.2,223.1,131.9,220.5,131.6,217.4,131.3,213.8,131.0,209.9,130.7,205.8,130.5,201.8,130.3,198.0,130.1,194.6,130.0,191.6,129.9,188.5,129.8,185.3,129.8,181.8,129.8,177.8,129.8,173.4,129.9,168.8,130.0,164.3,130.3,160.0,130.7,156.0,131.2,152.1,131.7,148.3,132.3,144.6,133.0,140.9,133.6,137.4,134.2,134.0,134.9,130.6,135.7,127.1,136.9,123.5,138.3,119.6,139.8,115.4,141.6,111.2,143.7,107.1,146.3,103.1,149.5,99.2,153.2,95.4,157.2,91.7,161.3,88.3,165.2,85.3,169.0,82.9,172.7,80.9,176.4,79.3,180.2,77.8,184.1,76.3,188.0,74.8,192.0,73.5,196.1,72.2,200.3,71.1,204.6,70.0,209.1,69.1,213.7,68.3,218.4,67.5,223.2,66.8,228.2,66.1,233.4,65.3,239.0,64.5,244.5,63.7,249.9,63.0,254.9,62.5,259.2,62.2,263.0,62.1,266.7,62.0,270.7,62.1,275.4,62.2,281.0,62.3,287.2,62.5,293.8,62.8,300.4,63.2,306.9,63.7,313.0,64.4,318.9,65.2,324.9,66.1,331.2,67.1,338.0,68.3,345.6,69.6,353.7,71.1,362.2,72.7,370.7,74.4,379.0,76.0,387.2,77.7,395.4,79.4,403.5,81.1,411.5,82.9,419.2,84.6,426.0,86.2,431.9,87.6,438.0,89.1,445.2,90.9,454.5,93.4,466.5,96.6,480.6,100.3,495.8,104.4,511.3,108.7,526.2,113.0,540.0,117.2,553.4,121.4,566.9,125.8,581.6,130.6,598.0,136.0,617.1,142.4,638.4,149.6,660.5,157.1,682.2,164.4,702.2,171.1,720.2,176.9,737.0,182.3,753.2,187.4,769.2,192.5,785.5,197.8,802.2,203.4,818.9,209.1,835.6,214.9,852.3,220.7,868.8,226.3,885.7,232.0,903.1,237.7,920.1,243.4,936.0,248.7,950.1,253.4,960.7,257.0,968.3,259.7,975.4,262.2,984.4,265.4,998.0,270.0,1017.1,276.4,1040.1,284.1,1065.3,292.6,1091.3,301.3,1116.5,309.6,1141.6,317.8,1167.7,326.2,1193.7,334.6,1218.2,342.6,1240.2,350.0,1260.2,357.1,1279.0,364.0,1295.7,370.3,1309.5,375.6,1319.6,379.4], TP=[1150.0,353.0,584.0,195.0,390.0,498.0];
function mk(k){var c=document.createElement('canvas');c.width=W;c.height=H;var cx=c.getContext('2d');var im=cx.createImageData(W,H);var d=im.data;
for(var j=0;j<H;j++){var y=(976.6-(j+OY+0.5))/561.7;for(var i=0;i<W;i++){var x=(i+OX+0.5-526)/1654;var p=(j*W+i)*4;
if(y<=0.001||x<0||x+y>1.2){d[p+3]=0;continue;}
var X=x/y,Z=(1-x-y)/y;var r=3.2406*X-1.5372-0.4986*Z,g=-0.9689*X+1.8758+0.0415*Z,b=0.0557*X-0.2040+1.0570*Z;
var m=Math.min(r,g,b);if(m<0){r-=m;g-=m;b-=m;}var M=Math.max(r,g,b);
r=gm(r/M);g=gm(g/M);b=gm(b/M);d[p]=255*k*r;d[p+1]=255*k*g;d[p+2]=255*k*b;d[p+3]=255;}}
cx.putImageData(im,0,0);return c;}
function gm(v){return v<=0.0031308?12.92*v:1.055*Math.pow(v,1/2.4)-0.055;}
function poly(P){ctx.beginPath();ctx.moveTo(P[0],P[1]);for(var i=2;i<P.length;i+=2)ctx.lineTo(P[i],P[i+1]);ctx.closePath();}
ctx.fillStyle='#02080b';ctx.fillRect(0,0,W,H);
ctx.save();poly(LP);ctx.clip();ctx.drawImage(mk(0.78),0,0);ctx.restore();
ctx.strokeStyle='#505050';ctx.lineWidth=1;
ctx.beginPath();ctx.moveTo(124.5,0);ctx.lineTo(124.5,563);ctx.stroke();ctx.beginPath();ctx.moveTo(289.5,0);ctx.lineTo(289.5,563);ctx.stroke();ctx.beginPath();ctx.moveTo(454.5,0);ctx.lineTo(454.5,563);ctx.stroke();ctx.beginPath();ctx.moveTo(620.5,0);ctx.lineTo(620.5,563);ctx.stroke();ctx.beginPath();ctx.moveTo(785.5,0);ctx.lineTo(785.5,563);ctx.stroke();ctx.beginPath();ctx.moveTo(951.5,0);ctx.lineTo(951.5,563);ctx.stroke();ctx.beginPath();ctx.moveTo(1116.5,0);ctx.lineTo(1116.5,563);ctx.stroke();ctx.beginPath();ctx.moveTo(1281.5,0);ctx.lineTo(1281.5,563);ctx.stroke();ctx.beginPath();ctx.moveTo(0,478.5);ctx.lineTo(1488,478.5);ctx.stroke();ctx.beginPath();ctx.moveTo(0,422.5);ctx.lineTo(1488,422.5);ctx.stroke();ctx.beginPath();ctx.moveTo(0,366.5);ctx.lineTo(1488,366.5);ctx.stroke();ctx.beginPath();ctx.moveTo(0,309.5);ctx.lineTo(1488,309.5);ctx.stroke();ctx.beginPath();ctx.moveTo(0,253.5);ctx.lineTo(1488,253.5);ctx.stroke();ctx.beginPath();ctx.moveTo(0,197.5);ctx.lineTo(1488,197.5);ctx.stroke();ctx.beginPath();ctx.moveTo(0,141.5);ctx.lineTo(1488,141.5);ctx.stroke();ctx.beginPath();ctx.moveTo(0,85.5);ctx.lineTo(1488,85.5);ctx.stroke();ctx.beginPath();ctx.moveTo(0,29.5);ctx.lineTo(1488,29.5);ctx.stroke();
ctx.save();poly(TP);ctx.clip();ctx.drawImage(mk(1.0),0,0);ctx.restore();
})();</script>
<svg class="r" style="left:0;top:0" width="1488" height="563">
<g stroke="#c8c8c8" stroke-width="1" stroke-dasharray="4,3"><line x1="641.2" y1="0" x2="641.2" y2="563"/><line x1="0" y1="349.8" x2="1488" y2="349.8"/></g>
<defs><linearGradient id="tl0" gradientUnits="userSpaceOnUse" x1="1245.4" y1="355.0" x2="560.5" y2="146.2"><stop offset="0" stop-color="#980000"/><stop offset="0.372" stop-color="#980000"/><stop offset="0.372" stop-color="#7a6c0a"/><stop offset="0.751" stop-color="#7a6c0a"/><stop offset="0.751" stop-color="#007800"/><stop offset="1" stop-color="#007800"/></linearGradient><linearGradient id="tl1" gradientUnits="userSpaceOnUse" x1="560.5" y1="146.2" x2="372.0" y2="501.0"><stop offset="0" stop-color="#007200"/><stop offset="0.286" stop-color="#007200"/><stop offset="0.286" stop-color="#0a6e6e"/><stop offset="0.795" stop-color="#0a6e6e"/><stop offset="0.795" stop-color="#0000a0"/><stop offset="1" stop-color="#0000a0"/></linearGradient><linearGradient id="tl2" gradientUnits="userSpaceOnUse" x1="372.0" y1="501.0" x2="1245.4" y2="355.0"><stop offset="0" stop-color="#6a0090"/><stop offset="0.561" stop-color="#6a0090"/><stop offset="0.561" stop-color="#980000"/><stop offset="1" stop-color="#980000"/></linearGradient></defs>
<line x1="1245.4" y1="355.0" x2="560.5" y2="146.2" stroke="url(#tl0)" stroke-width="2.6"/>
<line x1="560.5" y1="146.2" x2="372.0" y2="501.0" stroke="url(#tl1)" stroke-width="2.6"/>
<line x1="372.0" y1="501.0" x2="1245.4" y2="355.0" stroke="url(#tl2)" stroke-width="2.6"/>
<path d="M402.0 524.7 L399.7 525.0 L396.6 525.4 L392.8 525.8 L388.7 526.0 L384.5 525.7 L379.9 524.8 L374.8 523.4 L369.6 521.8 L364.7 520.1 L360.5 518.4 L357.2 516.8 L354.5 515.2 L352.2 513.5 L349.9 511.8 L347.5 510.1 L345.2 508.6 L343.1 507.4 L340.9 506.1 L338.1 504.2 L334.3 501.6 L329.0 497.7 L322.4 492.8 L315.5 487.5 L308.9 482.5 L303.5 478.4 L299.9 475.7 L297.6 473.9 L295.6 472.4 L293.2 470.3 L289.4 467.0 L283.6 461.8 L276.4 455.3 L268.8 448.2 L261.6 441.6 L256.0 436.2 L252.4 432.5 L250.1 429.9 L248.4 427.8 L246.5 425.4 L243.7 422.1 L239.8 417.8 L235.3 413.0 L230.5 407.7 L225.6 402.2 L220.8 396.6 L215.9 390.6 L210.7 384.0 L205.7 377.4 L201.0 371.1 L197.0 365.8 L194.0 361.6 L191.7 358.3 L189.8 355.4 L187.9 352.5 L185.6 349.1 L182.9 345.1 L180.0 340.8 L177.0 336.4 L174.1 332.1 L171.5 328.0 L169.3 324.5 L167.4 321.4 L165.6 318.4 L163.7 314.9 L161.4 310.5 L158.6 304.9 L155.4 298.4 L152.2 291.4 L149.1 284.6 L146.5 278.4 L144.4 272.9 L142.7 267.8 L141.3 262.9 L140.0 258.2 L138.7 253.5 L137.5 248.8 L136.3 244.2 L135.3 239.7 L134.4 235.5 L133.6 231.7 L133.0 228.4 L132.5 225.7 L132.2 223.1 L131.9 220.5 L131.6 217.4 L131.3 213.8 L131.0 209.9 L130.7 205.8 L130.5 201.8 L130.3 198.0 L130.1 194.6 L130.0 191.6 L129.9 188.5 L129.8 185.3 L129.8 181.8 L129.8 177.8 L129.8 173.4 L129.9 168.8 L130.0 164.3 L130.3 160.0 L130.7 156.0 L131.2 152.1 L131.7 148.3 L132.3 144.6 L133.0 140.9 L133.6 137.4 L134.2 134.0 L134.9 130.6 L135.7 127.1 L136.9 123.5 L138.3 119.6 L139.8 115.4 L141.6 111.2 L143.7 107.1 L146.3 103.1 L149.5 99.2 L153.2 95.4 L157.2 91.7 L161.3 88.3 L165.2 85.3 L169.0 82.9 L172.7 80.9 L176.4 79.3 L180.2 77.8 L184.1 76.3 L188.0 74.8 L192.0 73.5 L196.1 72.2 L200.3 71.1 L204.6 70.0 L209.1 69.1 L213.7 68.3 L218.4 67.5 L223.2 66.8 L228.2 66.1 L233.4 65.3 L239.0 64.5 L244.5 63.7 L249.9 63.0 L254.9 62.5 L259.2 62.2 L263.0 62.1 L266.7 62.0 L270.7 62.1 L275.4 62.2 L281.0 62.3 L287.2 62.5 L293.8 62.8 L300.4 63.2 L306.9 63.7 L313.0 64.4 L318.9 65.2 L324.9 66.1 L331.2 67.1 L338.0 68.3 L345.6 69.6 L353.7 71.1 L362.2 72.7 L370.7 74.4 L379.0 76.0 L387.2 77.7 L395.4 79.4 L403.5 81.1 L411.5 82.9 L419.2 84.6 L426.0 86.2 L431.9 87.6 L438.0 89.1 L445.2 90.9 L454.5 93.4 L466.5 96.6 L480.6 100.3 L495.8 104.4 L511.3 108.7 L526.2 113.0 L540.0 117.2 L553.4 121.4 L566.9 125.8 L581.6 130.6 L598.0 136.0 L617.1 142.4 L638.4 149.6 L660.5 157.1 L682.2 164.4 L702.2 171.1 L720.2 176.9 L737.0 182.3 L753.2 187.4 L769.2 192.5 L785.5 197.8 L802.2 203.4 L818.9 209.1 L835.6 214.9 L852.3 220.7 L868.8 226.3 L885.7 232.0 L903.1 237.7 L920.1 243.4 L936.0 248.7 L950.1 253.4 L960.7 257.0 L968.3 259.7 L975.4 262.2 L984.4 265.4 L998.0 270.0 L1017.1 276.4 L1040.1 284.1 L1065.3 292.6 L1091.3 301.3 L1116.5 309.6 L1141.6 317.8 L1167.7 326.2 L1193.7 334.6 L1218.2 342.6 L1240.2 350.0 L1260.2 357.1 L1279.0 364.0 L1295.7 370.3 L1309.5 375.6 L1319.6 379.4 Z" fill="none" stroke="#ffc000" stroke-width="1.4"/>
<path d="M1150.0 353.0 L584.0 195.0 L390.0 498.0 Z" fill="none" stroke="#fff" stroke-width="3.2" stroke-linejoin="miter"/><g stroke="#d8d8d8" stroke-width="1"><line x1="278.3" y1="61.7" x2="310.0" y2="39.7"/><line x1="526.0" y1="113.0" x2="557.6" y2="91.4"/><line x1="100.0" y1="207.6" x2="129.8" y2="202.8"/><line x1="753.2" y1="186.8" x2="785.5" y2="164.3"/><line x1="913.6" y1="240.9" x2="946.0" y2="217.6"/><line x1="1024.0" y1="278.4" x2="1055.8" y2="256.2"/><line x1="1128.2" y1="313.5" x2="1160.8" y2="291.4"/><line x1="1246.7" y1="348.7" x2="1272.7" y2="329.1"/><line x1="1289.7" y1="368.2" x2="1322.2" y2="344.8"/><line x1="1310.5" y1="375.5" x2="1341.8" y2="352.6"/><line x1="225.6" y1="441.2" x2="255.4" y2="435.2"/><line x1="297.8" y1="503.6" x2="329.5" y2="498.8"/><line x1="321.6" y1="519.2" x2="353.4" y2="513.8"/><line x1="337.5" y1="526.5" x2="367.7" y2="521.1"/></g>
<g fill="none" stroke="#2a2a2a" stroke-width="1" stroke-dasharray="3,3"><path d="M461.0 384.0 L601.0 376.0 L738.0 369.4 L998.0 358.0 L1150.0 352.0"/><path d="M387.0 500.0 L436.0 464.0 L508.0 428.0 L572.0 387.0 L600.0 370.6 L649.0 341.0 L687.8 318.0 L745.0 291.0 L796.0 253.0"/><path d="M584.0 199.0 L601.0 374.7 L607.4 434.6 L611.0 458.0"/></g>
<path d="M535.5 397.8 L565.2 383.8 L597.3 368.4 L641.0 351.0 L677.3 339.5 L755.8 319.5 L849.0 303.7 L885.6 300.7 L900.5 300.0" fill="none" stroke="#000" stroke-width="1.6"/>
<defs>
<filter id="sh" x="-50%" y="-50%" width="200%" height="200%"><feGaussianBlur in="SourceAlpha" stdDeviation="1.2"/><feOffset dx="1.2" dy="1.5"/><feComponentTransfer><feFuncA type="linear" slope="0.6"/></feComponentTransfer><feMerge><feMergeNode/><feMergeNode in="SourceGraphic"/></feMerge></filter>
<radialGradient id="cW" cx="0.4" cy="0.35" r="0.65"><stop offset="0" stop-color="#fff"/><stop offset="0.7" stop-color="#f4f4f4"/><stop offset="1" stop-color="#c8c8c8"/></radialGradient>
<radialGradient id="cG" cx="0.4" cy="0.35" r="0.65"><stop offset="0" stop-color="#30e030"/><stop offset="0.7" stop-color="#10b010"/><stop offset="1" stop-color="#005000"/></radialGradient>
<radialGradient id="cC" cx="0.4" cy="0.35" r="0.65"><stop offset="0" stop-color="#b0f0f0"/><stop offset="0.7" stop-color="#80d8d8"/><stop offset="1" stop-color="#407070"/></radialGradient>
<radialGradient id="cB" cx="0.4" cy="0.35" r="0.65"><stop offset="0" stop-color="#4050ff"/><stop offset="0.7" stop-color="#2030e0"/><stop offset="1" stop-color="#101880"/></radialGradient>
<radialGradient id="cY" cx="0.4" cy="0.35" r="0.65"><stop offset="0" stop-color="#f8f8c0"/><stop offset="0.7" stop-color="#e0e090"/><stop offset="1" stop-color="#808040"/></radialGradient>
<radialGradient id="cR" cx="0.4" cy="0.35" r="0.65"><stop offset="0" stop-color="#ff4040"/><stop offset="0.7" stop-color="#e01010"/><stop offset="1" stop-color="#700000"/></radialGradient>
<radialGradient id="cM" cx="0.4" cy="0.35" r="0.65"><stop offset="0" stop-color="#ff40ff"/><stop offset="0.7" stop-color="#e010e0"/><stop offset="1" stop-color="#700070"/></radialGradient>
<radialGradient id="cL" cx="0.4" cy="0.35" r="0.65"><stop offset="0" stop-color="#e0e8ff"/><stop offset="0.7" stop-color="#c0c8f0"/><stop offset="1" stop-color="#707890"/></radialGradient>
</defs>
<g><rect x="446.6" y="342.2" width="13" height="13" fill="#40e8ff" stroke="none"/><path d="M449.6 345.2 H456.6 V349.2 L453.1 352.7 L449.6 349.2Z" fill="#000" fill-opacity="0.25"/><path d="M452.6 345.2 V350.2 M450.1 347.2 H455.1" stroke="#111" stroke-width="1.3"/><path d="M446.6 355.2 V342.2 H459.6" fill="none" stroke="#1a1a80" stroke-width="1"/><path d="M459.6 342.2 V355.2 H446.6" fill="none" stroke="#e01020" stroke-width="1"/><rect x="492.1" y="344.4" width="10" height="10" fill="none" stroke="#40e8ff" stroke-width="2.4"/><path d="M490.6 355.9 V342.9 H503.6" fill="none" stroke="#1a1a80" stroke-width="1"/><path d="M503.6 342.9 V355.9 H490.6" fill="none" stroke="#e01020" stroke-width="1"/><rect x="547.5" y="342.5" width="10" height="10" fill="none" stroke="#40e8ff" stroke-width="2.4"/><path d="M546.0 354.0 V341.0 H559.0" fill="none" stroke="#1a1a80" stroke-width="1"/><path d="M559.0 341.0 V354.0 H546.0" fill="none" stroke="#e01020" stroke-width="1"/><rect x="584.1" y="343.2" width="10" height="10" fill="none" stroke="#40e8ff" stroke-width="2.4"/><path d="M582.6 354.7 V341.7 H595.6" fill="none" stroke="#1a1a80" stroke-width="1"/><path d="M595.6 341.7 V354.7 H582.6" fill="none" stroke="#e01020" stroke-width="1"/><rect x="554.0" y="139.7" width="13" height="13" fill="#40ff00" stroke="none"/><path d="M557.0 142.7 H564.0 V146.7 L560.5 150.2 L557.0 146.7Z" fill="#000" fill-opacity="0.25"/><path d="M560.0 142.7 V147.7 M557.5 144.7 H562.5" stroke="#111" stroke-width="1.3"/><path d="M554.0 152.7 V139.7 H567.0" fill="none" stroke="#1a1a80" stroke-width="1"/><path d="M567.0 139.7 V152.7 H554.0" fill="none" stroke="#e01020" stroke-width="1"/><rect x="580.5" y="192.7" width="10" height="10" fill="none" stroke="#40ff00" stroke-width="2.4"/><path d="M579.0 204.2 V191.2 H592.0" fill="none" stroke="#1a1a80" stroke-width="1"/><path d="M592.0 191.2 V204.2 H579.0" fill="none" stroke="#e01020" stroke-width="1"/><rect x="592.5" y="241.6" width="10" height="10" fill="none" stroke="#40ff00" stroke-width="2.4"/><path d="M591.0 253.1 V240.1 H604.0" fill="none" stroke="#1a1a80" stroke-width="1"/><path d="M604.0 240.1 V253.1 H591.0" fill="none" stroke="#e01020" stroke-width="1"/><rect x="620.2" y="293.8" width="10" height="10" fill="none" stroke="#40ff00" stroke-width="2.4"/><path d="M618.7 305.3 V292.3 H631.7" fill="none" stroke="#1a1a80" stroke-width="1"/><path d="M631.7 292.3 V305.3 H618.7" fill="none" stroke="#e01020" stroke-width="1"/><rect x="838.8" y="226.7" width="13" height="13" fill="#f8e800" stroke="none"/><path d="M841.8 229.7 H848.8 V233.7 L845.3 237.2 L841.8 233.7Z" fill="#000" fill-opacity="0.25"/><path d="M844.8 229.7 V234.7 M842.3 231.7 H847.3" stroke="#111" stroke-width="1.3"/><path d="M838.8 239.7 V226.7 H851.8" fill="none" stroke="#1a1a80" stroke-width="1"/><path d="M851.8 226.7 V239.7 H838.8" fill="none" stroke="#e01020" stroke-width="1"/><rect x="797.2" y="258.9" width="10" height="10" fill="none" stroke="#f8e800" stroke-width="2.4"/><path d="M795.7 270.4 V257.4 H808.7" fill="none" stroke="#1a1a80" stroke-width="1"/><path d="M808.7 257.4 V270.4 H795.7" fill="none" stroke="#e01020" stroke-width="1"/><rect x="740.6" y="289.0" width="10" height="10" fill="none" stroke="#f8e800" stroke-width="2.4"/><path d="M739.1 300.5 V287.5 H752.1" fill="none" stroke="#1a1a80" stroke-width="1"/><path d="M752.1 287.5 V300.5 H739.1" fill="none" stroke="#e01020" stroke-width="1"/><rect x="682.6" y="314.5" width="10" height="10" fill="none" stroke="#f8e800" stroke-width="2.4"/><path d="M681.1 326.0 V313.0 H694.1" fill="none" stroke="#1a1a80" stroke-width="1"/><path d="M694.1 313.0 V326.0 H681.1" fill="none" stroke="#e01020" stroke-width="1"/><rect x="1238.9" y="348.5" width="13" height="13" fill="#ff1010" stroke="none"/><path d="M1241.9 351.5 H1248.9 V355.5 L1245.4 359.0 L1241.9 355.5Z" fill="#000" fill-opacity="0.25"/><path d="M1244.9 351.5 V356.5 M1242.4 353.5 H1247.4" stroke="#111" stroke-width="1.3"/><path d="M1238.9 361.5 V348.5 H1251.9" fill="none" stroke="#1a1a80" stroke-width="1"/><path d="M1251.9 348.5 V361.5 H1238.9" fill="none" stroke="#e01020" stroke-width="1"/><rect x="1092.0" y="349.4" width="10" height="10" fill="none" stroke="#ff1010" stroke-width="2.4"/><path d="M1090.5 360.9 V347.9 H1103.5" fill="none" stroke="#1a1a80" stroke-width="1"/><path d="M1103.5 347.9 V360.9 H1090.5" fill="none" stroke="#e01020" stroke-width="1"/><rect x="945.6" y="348.2" width="10" height="10" fill="none" stroke="#ff1010" stroke-width="2.4"/><path d="M944.1 359.7 V346.7 H957.1" fill="none" stroke="#1a1a80" stroke-width="1"/><path d="M957.1 346.7 V359.7 H944.1" fill="none" stroke="#e01020" stroke-width="1"/><rect x="784.5" y="343.4" width="10" height="10" fill="none" stroke="#ff1010" stroke-width="2.4"/><path d="M783.0 354.9 V341.9 H796.0" fill="none" stroke="#1a1a80" stroke-width="1"/><path d="M796.0 341.9 V354.9 H783.0" fill="none" stroke="#e01020" stroke-width="1"/><rect x="367.0" y="496.0" width="10" height="10" fill="none" stroke="#5020ff" stroke-width="2.4"/><path d="M365.5 507.5 V494.5 H378.5" fill="none" stroke="#1a1a80" stroke-width="1"/><path d="M378.5 494.5 V507.5 H365.5" fill="none" stroke="#e01020" stroke-width="1"/><rect x="431.3" y="459.3" width="10" height="10" fill="none" stroke="#5020ff" stroke-width="2.4"/><path d="M429.8 470.8 V457.8 H442.8" fill="none" stroke="#1a1a80" stroke-width="1"/><path d="M442.8 457.8 V470.8 H429.8" fill="none" stroke="#e01020" stroke-width="1"/><rect x="503.2" y="422.5" width="10" height="10" fill="none" stroke="#5020ff" stroke-width="2.4"/><path d="M501.7 434.0 V421.0 H514.7" fill="none" stroke="#1a1a80" stroke-width="1"/><path d="M514.7 421.0 V434.0 H501.7" fill="none" stroke="#e01020" stroke-width="1"/><rect x="567.1" y="381.9" width="10" height="10" fill="none" stroke="#5020ff" stroke-width="2.4"/><path d="M565.6 393.4 V380.4 H578.6" fill="none" stroke="#1a1a80" stroke-width="1"/><path d="M578.6 380.4 V393.4 H565.6" fill="none" stroke="#e01020" stroke-width="1"/><rect x="668.1" y="443.7" width="13" height="13" fill="#ff10e0" stroke="none"/><path d="M671.1 446.7 H678.1 V450.7 L674.6 454.2 L671.1 450.7Z" fill="#000" fill-opacity="0.25"/><path d="M674.1 446.7 V451.7 M671.6 448.7 H676.6" stroke="#111" stroke-width="1.3"/><path d="M668.1 456.7 V443.7 H681.1" fill="none" stroke="#1a1a80" stroke-width="1"/><path d="M681.1 443.7 V456.7 H668.1" fill="none" stroke="#e01020" stroke-width="1"/><rect x="669.6" y="419.4" width="10" height="10" fill="none" stroke="#ff10e0" stroke-width="2.4"/><path d="M668.1 430.9 V417.9 H681.1" fill="none" stroke="#1a1a80" stroke-width="1"/><path d="M681.1 417.9 V430.9 H668.1" fill="none" stroke="#e01020" stroke-width="1"/><rect x="658.6" y="393.3" width="10" height="10" fill="none" stroke="#ff10e0" stroke-width="2.4"/><path d="M657.1 404.8 V391.8 H670.1" fill="none" stroke="#1a1a80" stroke-width="1"/><path d="M670.1 391.8 V404.8 H657.1" fill="none" stroke="#e01020" stroke-width="1"/><rect x="640.7" y="372.5" width="10" height="10" fill="none" stroke="#ff10e0" stroke-width="2.4"/><path d="M639.2 384.0 V371.0 H652.2" fill="none" stroke="#1a1a80" stroke-width="1"/><path d="M652.2 371.0 V384.0 H639.2" fill="none" stroke="#e01020" stroke-width="1"/></g>
<g><rect x="636.2" y="343.6" width="11" height="11" fill="none" stroke="#c89040" stroke-width="2"/><rect x="637.7" y="345.1" width="8" height="8" fill="none" stroke="#5a6a58" stroke-width="1"/><rect x="748.1" y="326.7" width="11" height="11" fill="none" stroke="#c89040" stroke-width="2"/><rect x="749.6" y="328.2" width="8" height="8" fill="none" stroke="#5a6a58" stroke-width="1"/><rect x="772.5" y="316.5" width="11" height="11" fill="none" stroke="#c89040" stroke-width="2"/><rect x="774.0" y="318.0" width="8" height="8" fill="none" stroke="#5a6a58" stroke-width="1"/><rect x="790.7" y="316.5" width="11" height="11" fill="none" stroke="#c89040" stroke-width="2"/><rect x="792.2" y="318.0" width="8" height="8" fill="none" stroke="#5a6a58" stroke-width="1"/><rect x="809.0" y="315.2" width="11" height="11" fill="none" stroke="#c89040" stroke-width="2"/><rect x="810.5" y="316.7" width="8" height="8" fill="none" stroke="#5a6a58" stroke-width="1"/><rect x="815.8" y="318.5" width="11" height="11" fill="none" stroke="#c89040" stroke-width="2"/><rect x="817.3" y="320.0" width="8" height="8" fill="none" stroke="#5a6a58" stroke-width="1"/><rect x="828.0" y="307.0" width="11" height="11" fill="none" stroke="#c89040" stroke-width="2"/><rect x="829.5" y="308.5" width="8" height="8" fill="none" stroke="#5a6a58" stroke-width="1"/><rect x="832.7" y="323.3" width="11" height="11" fill="none" stroke="#c89040" stroke-width="2"/><rect x="834.2" y="324.8" width="8" height="8" fill="none" stroke="#5a6a58" stroke-width="1"/><rect x="856.4" y="314.5" width="11" height="11" fill="none" stroke="#c89040" stroke-width="2"/><rect x="857.9" y="316.0" width="8" height="8" fill="none" stroke="#5a6a58" stroke-width="1"/><rect x="859.8" y="319.9" width="11" height="11" fill="none" stroke="#c89040" stroke-width="2"/><rect x="861.3" y="321.4" width="8" height="8" fill="none" stroke="#5a6a58" stroke-width="1"/><rect x="874.0" y="319.2" width="11" height="11" fill="none" stroke="#c89040" stroke-width="2"/><rect x="875.5" y="320.7" width="8" height="8" fill="none" stroke="#5a6a58" stroke-width="1"/><rect x="886.9" y="303.6" width="11" height="11" fill="none" stroke="#c89040" stroke-width="2"/><rect x="888.4" y="305.1" width="8" height="8" fill="none" stroke="#5a6a58" stroke-width="1"/><rect x="906.5" y="300.3" width="11" height="11" fill="none" stroke="#c89040" stroke-width="2"/><rect x="908.0" y="301.8" width="8" height="8" fill="none" stroke="#5a6a58" stroke-width="1"/><rect x="906.5" y="311.8" width="11" height="11" fill="none" stroke="#c89040" stroke-width="2"/><rect x="908.0" y="313.3" width="8" height="8" fill="none" stroke="#5a6a58" stroke-width="1"/><rect x="978.9" y="303.0" width="11" height="11" fill="none" stroke="#c89040" stroke-width="2"/><rect x="980.4" y="304.5" width="8" height="8" fill="none" stroke="#5a6a58" stroke-width="1"/></g>
<g filter="url(#sh)"><circle cx="529.3" cy="403.3" r="5.5" fill="url(#cW)" stroke="#555" stroke-width="1"/><circle cx="568.0" cy="378.0" r="5.5" fill="url(#cW)" stroke="#555" stroke-width="1"/><circle cx="574.0" cy="373.0" r="5.5" fill="url(#cW)" stroke="#555" stroke-width="1"/><circle cx="582.0" cy="375.0" r="5.5" fill="url(#cW)" stroke="#555" stroke-width="1"/><circle cx="588.0" cy="371.0" r="5.5" fill="url(#cW)" stroke="#555" stroke-width="1"/><circle cx="683.9" cy="359.5" r="5.5" fill="url(#cW)" stroke="#555" stroke-width="1"/><circle cx="711.3" cy="346.9" r="5.5" fill="url(#cW)" stroke="#555" stroke-width="1"/><circle cx="730.6" cy="346.4" r="5.5" fill="url(#cW)" stroke="#555" stroke-width="1"/><circle cx="747.5" cy="343.7" r="5.5" fill="url(#cW)" stroke="#555" stroke-width="1"/><circle cx="753.6" cy="346.4" r="5.5" fill="url(#cW)" stroke="#555" stroke-width="1"/><circle cx="765.1" cy="343.7" r="5.5" fill="url(#cW)" stroke="#555" stroke-width="1"/><circle cx="770.5" cy="337.6" r="5.5" fill="url(#cW)" stroke="#555" stroke-width="1"/><circle cx="769.8" cy="351.8" r="5.5" fill="url(#cW)" stroke="#555" stroke-width="1"/><circle cx="762.4" cy="349.0" r="5.5" fill="url(#cW)" stroke="#555" stroke-width="1"/><circle cx="797.6" cy="341.6" r="5.5" fill="url(#cW)" stroke="#555" stroke-width="1"/><circle cx="801.6" cy="347.7" r="5.5" fill="url(#cW)" stroke="#555" stroke-width="1"/><circle cx="816.5" cy="344.4" r="5.5" fill="url(#cW)" stroke="#555" stroke-width="1"/><circle cx="830.1" cy="328.8" r="5.5" fill="url(#cW)" stroke="#555" stroke-width="1"/><circle cx="838.9" cy="324.7" r="5.5" fill="url(#cW)" stroke="#555" stroke-width="1"/><circle cx="863.9" cy="338.3" r="5.5" fill="url(#cW)" stroke="#555" stroke-width="1"/><circle cx="923.5" cy="322.7" r="5.5" fill="url(#cW)" stroke="#555" stroke-width="1"/><circle cx="579.0" cy="381.0" r="6" fill="url(#cW)" stroke="#000" stroke-width="2.2"/><circle cx="597.2" cy="369.0" r="3.3" fill="#fff" stroke="#222" stroke-width="1"/><circle cx="677.3" cy="339.5" r="3.3" fill="#fff" stroke="#222" stroke-width="1"/><circle cx="756.3" cy="320.0" r="3.3" fill="#fff" stroke="#222" stroke-width="1"/><circle cx="849.0" cy="303.7" r="3.3" fill="#fff" stroke="#222" stroke-width="1"/><circle cx="885.6" cy="300.7" r="3.3" fill="#fff" stroke="#222" stroke-width="1"/><circle cx="635.8" cy="357.3" r="3.3" fill="#10e010" stroke="#0a600a" stroke-width="0.8"/><circle cx="641.7" cy="349.0" r="3.3" fill="#10e010" stroke="#0a600a" stroke-width="0.8"/><circle cx="700.2" cy="337.3" r="3.3" fill="#10e010" stroke="#0a600a" stroke-width="0.8"/><circle cx="864.0" cy="305.0" r="3.3" fill="#10e010" stroke="#0a600a" stroke-width="0.8"/><circle cx="583.1" cy="194.1" r="6.5" fill="url(#cG)" stroke="#064" stroke-width="1"/><rect x="582.5" y="193.5" width="1.3" height="1.6" fill="#111"/><circle cx="562.6" cy="224.9" r="6" fill="url(#cG)" stroke="#064" stroke-width="1"/><rect x="562.0" y="224.3" width="1.3" height="1.6" fill="#111"/><circle cx="549.4" cy="278.4" r="6" fill="url(#cG)" stroke="#064" stroke-width="1"/><rect x="548.8" y="277.8" width="1.3" height="1.6" fill="#111"/><circle cx="567.4" cy="331.8" r="6" fill="url(#cG)" stroke="#064" stroke-width="1"/><rect x="566.8" y="331.2" width="1.3" height="1.6" fill="#111"/><circle cx="461.3" cy="383.8" r="6.5" fill="url(#cC)" stroke="#366" stroke-width="1"/><rect x="460.7" y="383.2" width="1.3" height="1.6" fill="#111"/><circle cx="515.2" cy="381.1" r="6" fill="url(#cC)" stroke="#366" stroke-width="1"/><rect x="514.6" y="380.5" width="1.3" height="1.6" fill="#111"/><circle cx="534.7" cy="381.1" r="6" fill="url(#cC)" stroke="#366" stroke-width="1"/><rect x="534.1" y="380.5" width="1.3" height="1.6" fill="#111"/><circle cx="374.6" cy="503.3" r="6" fill="url(#cB)" stroke="#113" stroke-width="1"/><circle cx="387.8" cy="500.2" r="6" fill="url(#cB)" stroke="#113" stroke-width="1"/><circle cx="398.5" cy="479.4" r="6" fill="url(#cB)" stroke="#113" stroke-width="1"/><circle cx="498.0" cy="457.2" r="6" fill="url(#cB)" stroke="#113" stroke-width="1"/><circle cx="557.4" cy="426.8" r="6" fill="url(#cB)" stroke="#113" stroke-width="1"/><circle cx="623.8" cy="379.9" r="6" fill="url(#cB)" stroke="#113" stroke-width="1"/><circle cx="796.1" cy="253.1" r="6.5" fill="url(#cY)" stroke="#664" stroke-width="1"/><rect x="795.5" y="252.5" width="1.3" height="1.6" fill="#111"/><circle cx="751.6" cy="283.2" r="6" fill="url(#cY)" stroke="#664" stroke-width="1"/><rect x="751.0" y="282.6" width="1.3" height="1.6" fill="#111"/><circle cx="687.6" cy="319.5" r="6" fill="url(#cY)" stroke="#664" stroke-width="1"/><rect x="687.0" y="318.9" width="1.3" height="1.6" fill="#111"/><circle cx="626.1" cy="349.1" r="6" fill="url(#cY)" stroke="#664" stroke-width="1"/><rect x="625.5" y="348.5" width="1.3" height="1.6" fill="#111"/><circle cx="1150.3" cy="351.8" r="6.5" fill="url(#cR)" stroke="#600" stroke-width="1"/><circle cx="1025.3" cy="359.9" r="6" fill="url(#cR)" stroke="#600" stroke-width="1"/><circle cx="876.8" cy="368.7" r="6" fill="url(#cR)" stroke="#600" stroke-width="1"/><circle cx="719.5" cy="372.1" r="6" fill="url(#cR)" stroke="#600" stroke-width="1"/><circle cx="580.8" cy="404.9" r="6" fill="url(#cM)" stroke="#606" stroke-width="1"/><rect x="580.2" y="404.3" width="1.3" height="1.6" fill="#111"/><circle cx="598.0" cy="423.6" r="6" fill="url(#cM)" stroke="#606" stroke-width="1"/><rect x="597.4" y="423.0" width="1.3" height="1.6" fill="#111"/><circle cx="608.2" cy="442.4" r="6" fill="url(#cM)" stroke="#606" stroke-width="1"/><rect x="607.6" y="441.8" width="1.3" height="1.6" fill="#111"/><circle cx="611.3" cy="458.8" r="6" fill="url(#cM)" stroke="#606" stroke-width="1"/><rect x="610.7" y="458.2" width="1.3" height="1.6" fill="#111"/><circle cx="623.8" cy="454.1" r="6" fill="url(#cM)" stroke="#606" stroke-width="1"/><rect x="623.2" y="453.5" width="1.3" height="1.6" fill="#111"/><circle cx="648.4" cy="361.7" r="6" fill="url(#cL)" stroke="#111" stroke-width="2.2"/><circle cx="730.6" cy="363.5" r="5.5" fill="url(#cL)" stroke="#555" stroke-width="1"/><circle cx="486.3" cy="429.9" r="5" fill="#f0f000" stroke="#111" stroke-width="1.2"/></g></svg></div>
<div class="r" style="left:2px;top:1017px;width:1898px;height:2px;background:#707070"></div>
<div class="r" style="left:2px;top:1019px;width:1898px;height:2px;background:#b8b8b8"></div>
<div class="r" style="left:2px;top:1021px;width:1898px;height:1px;background:#fff"></div>
<div class="r" style="left:2px;top:1039px;width:1918px;height:1px;background:#e0e0e0"></div>
<div class="r" style="left:20px;top:1030px;width:1824px;height:2px;background:#8a8a8a"></div>
<div class="r" style="left:0px;top:1042px;width:1920px;height:19px;background:#f0f0f0"></div>
<div class="r" style="left:0px;top:1061px;width:1920px;height:19px;background:#eef3fa"></div>
<svg class="r" style="left:0px;top:1040px" width="440" height="24"><path d="M119 2 L127 20 L186.8 20 L194.9 2Z" fill="#f0f0f0"/><path d="M186.8 2 L194.9 20 L238.9 20 L247 2Z" fill="#f0f0f0"/><path d="M238.9 2 L247 20 L313.4 20 L321 2Z" fill="#f0f0f0"/><path d="M313.4 2 L320.8 20 L418.3 20 L426.4 2Z" fill="#f0f0f0"/><path d="M119 2 L127 20 L186.8 20 L194.9 2" fill="none" stroke="#222" stroke-width="1.2"/><line x1="127" y1="20.2" x2="186.8" y2="20.2" stroke="#666" stroke-width="1"/><path d="M186.8 2 L194.9 20 L238.9 20 L247 2" fill="none" stroke="#222" stroke-width="1.2"/><line x1="194.9" y1="20.2" x2="238.9" y2="20.2" stroke="#666" stroke-width="1"/><path d="M238.9 2 L247 20 L313.4 20 L321 2" fill="none" stroke="#222" stroke-width="1.2"/><line x1="247" y1="20.2" x2="313.4" y2="20.2" stroke="#666" stroke-width="1"/><path d="M313.4 2 L320.8 20 L418.3 20 L426.4 2" fill="none" stroke="#222" stroke-width="1.2"/><line x1="320.8" y1="20.2" x2="418.3" y2="20.2" stroke="#666" stroke-width="1"/><path d="M54.4 2 L63 20 L119 20 L127 2Z" fill="#fff"/><path d="M54.4 2 L63 20 L119 20 L127 2" fill="none" stroke="#111" stroke-width="1.3"/><rect x="1" y="2" width="52" height="18.5" fill="#000"/><rect x="2.5" y="3.5" width="15" height="15" fill="#f0f0f0"/><rect x="18.5" y="3.5" width="15" height="15" fill="#f0f0f0"/><rect x="35" y="3.5" width="15" height="15" fill="#f0f0f0"/><path d="M6 7 L13 14 M13 7 L6 14" stroke="#111" stroke-width="1.3"/><path d="M29 7 L25 10.5 L29 14Z" fill="#111"/><path d="M41 7 L45 10.5 L41 14Z" fill="#111"/></svg>
<div class="r" style="left:0px;top:1042px;width:55px;height:1px;background:#000"></div>
<div class="r" style="left:126px;top:1042px;width:1794px;height:1px;background:#000"></div>
<div class="r" style="left:126px;top:1043px;width:1794px;height:1px;background:#9a9a9a"></div>
<svg class="r" style="left:1750px;top:1044px" width="16" height="15"><path d="M1 1 H14 V9 L12 13 H9 L7.5 10 L6 13 H3 L1 9Z" fill="#6a6a10" stroke="#333" stroke-width="0.8"/><rect x="4" y="3" width="7" height="4" fill="#e02020"/></svg>
<div class="r" style="left:1846px;top:1044px;width:13px;height:13px;background:#fff;border:1px solid #444;border-radius:2px;box-sizing:border-box"></div>
<div class="r" style="left:1742px;top:1063px;width:75px;height:17px;border-left:1px solid #a8b8d0;border-top:1px solid #a8b8d0;box-sizing:border-box"></div>
<div class="r" style="left:1820px;top:1063px;width:28px;height:17px;border-left:1px solid #a8b8d0;border-top:1px solid #a8b8d0;box-sizing:border-box"></div>
<div class="r" style="left:1851px;top:1063px;width:33px;height:17px;border-left:1px solid #a8b8d0;border-top:1px solid #a8b8d0;box-sizing:border-box"></div>
<div class="r" style="left:1887px;top:1063px;width:33px;height:17px;border-left:1px solid #a8b8d0;border-top:1px solid #a8b8d0;box-sizing:border-box"></div>
<span class="t" style="left:23.0px;top:5.1px;font-size:13.5px;color:#1a1a1a;transform:scaleX(0.8502);transform-origin:left;font-family:'Liberation Sans', sans-serif;">HCFR Colorimeter - 3.5.4.2 - [Hyundai 70 Hyled 7002W4KM HDR CINE FABRICA]</span>
<span class="t" style="left:33.0px;top:28.3px;font-size:13px;color:#111;transform:scaleX(0.8591);transform-origin:left;font-family:'Liberation Sans', sans-serif;">File</span>
<span class="t" style="left:70.0px;top:28.3px;font-size:13px;color:#111;transform:scaleX(0.8926);transform-origin:left;font-family:'Liberation Sans', sans-serif;">Edit</span>
<span class="t" style="left:109.0px;top:28.3px;font-size:13px;color:#111;transform:scaleX(0.8944);transform-origin:left;font-family:'Liberation Sans', sans-serif;">View</span>
<span class="t" style="left:153.0px;top:28.3px;font-size:13px;color:#111;transform:scaleX(0.8760);transform-origin:left;font-family:'Liberation Sans', sans-serif;">Measures</span>
<span class="t" style="left:222.0px;top:28.3px;font-size:13px;color:#111;transform:scaleX(0.8677);transform-origin:left;font-family:'Liberation Sans', sans-serif;">Graphs</span>
<span class="t" style="left:278.0px;top:28.3px;font-size:13px;color:#111;transform:scaleX(0.9165);transform-origin:left;font-family:'Liberation Sans', sans-serif;">Advanced</span>
<span class="t" style="left:350.0px;top:28.3px;font-size:13px;color:#111;transform:scaleX(0.9514);transform-origin:left;font-family:'Liberation Sans', sans-serif;">Window</span>
<span class="t" style="left:413.0px;top:28.3px;font-size:13px;color:#111;transform:scaleX(0.8972);transform-origin:left;font-family:'Liberation Sans', sans-serif;">Help</span>
<span class="t" style="left:12.5px;top:100.6px;font-size:12px;font-weight:bold;color:#3c3c48;transform:scaleX(1.0685);transform-origin:left;font-family:'Liberation Sans', sans-serif;">View</span>
<span class="t" style="left:13.5px;top:128.2px;font-size:13px;color:#111;transform:scaleX(1.0530);transform-origin:left;font-family:'Liberation Sans', sans-serif;">Color Checker</span>
<span class="t" style="left:217.5px;top:119.8px;font-size:16px;font-weight:bold;color:#000;font-family:'Liberation Sans', sans-serif;">Color Space: UHDTV P3 in Rec2020 , White Point: D65, EOTF:  HDR10, 94.3 nits diffuse white, # of measures: 0 [20:18:46]</span>
<span class="t" style="left:1317.8px;top:100.3px;font-size:12px;font-weight:bold;color:#3c3c48;transform:scaleX(1.0962);transform-origin:left;font-family:'Liberation Sans', sans-serif;">Sensor</span>
<span class="t" style="left:1316.0px;top:117.7px;font-size:13px;color:#111;transform:scaleX(1.0851);transform-origin:left;font-family:'Liberation Sans', sans-serif;">Simulated sensor</span>
<span class="t" style="left:1318.0px;top:134.9px;font-size:13px;color:#111;transform:scaleX(1.0673);transform-origin:left;font-family:'Liberation Sans', sans-serif;">Adaptive</span>
<span class="t" style="left:1628.5px;top:100.3px;font-size:12px;font-weight:bold;color:#3c3c48;transform:scaleX(1.1384);transform-origin:left;font-family:'Liberation Sans', sans-serif;">Generator</span>
<span class="t" style="left:1624.0px;top:117.7px;font-size:13px;color:#111;transform:scaleX(1.0312);transform-origin:left;font-family:'Liberation Sans', sans-serif;">DVD manual</span>
<span class="t" style="left:1752.3px;top:100.3px;font-size:12px;font-weight:bold;color:#3c3c48;transform:scaleX(1.1561);transform-origin:left;font-family:'Liberation Sans', sans-serif;">Parameters</span>
<span class="t" style="left:1771.0px;top:119.5px;font-size:13px;color:#111;transform:scaleX(1.0503);transform-origin:left;font-family:'Liberation Sans', sans-serif;">Reference</span>
<span class="t" style="left:1771.0px;top:136.7px;font-size:13px;color:#8a8a8a;transform:scaleX(1.0513);transform-origin:left;font-family:'Liberation Sans', sans-serif;">XYZ Adjustment</span>
<span class="t" style="left:11.0px;top:165.4px;font-size:10.5px;font-weight:bold;color:#3c3c50;transform:scaleX(1.0221);transform-origin:left;font-family:'Liberation Sans', sans-serif;">CalMAN SG skin tones ( Average dE: 13.68 [5.74,6.25,9.68] max: 19.91 [CIE2000] )</span>
<span class="t" style="left:10.3px;top:184.0px;font-size:12.5px;font-weight:bold;color:#000;transform:scaleX(0.9100);transform-origin:center;font-family:'Liberation Sans', sans-serif;">Color Checker</span>
<span class="t" style="left:49.5px;top:207.0px;font-size:12.5px;font-weight:bold;color:#000;transform:scaleX(0.9100);transform-origin:center;font-family:'Liberation Sans', sans-serif;">x</span>
<span class="t" style="left:49.5px;top:232.0px;font-size:12.5px;font-weight:bold;color:#000;transform:scaleX(0.9100);transform-origin:center;font-family:'Liberation Sans', sans-serif;">y</span>
<span class="t" style="left:48.8px;top:257.0px;font-size:12.5px;font-weight:bold;color:#000;transform:scaleX(0.9100);transform-origin:center;font-family:'Liberation Sans', sans-serif;">Y</span>
<span class="t" style="left:31.8px;top:282.0px;font-size:12.5px;font-weight:bold;color:#000;transform:scaleX(0.9100);transform-origin:center;font-family:'Liberation Sans', sans-serif;">Delta E</span>
<span class="t" style="left:29.7px;top:307.0px;font-size:12.5px;font-weight:bold;color:#000;transform:scaleX(0.9100);transform-origin:center;font-family:'Liberation Sans', sans-serif;">delta xy</span>
<span class="t" style="left:32.9px;top:332.0px;font-size:12.5px;font-weight:bold;color:#000;transform:scaleX(0.9100);transform-origin:center;font-family:'Liberation Sans', sans-serif;">delta L</span>
<span class="t" style="left:128.5px;top:184.0px;font-size:12.5px;font-weight:bold;color:#000;transform:scaleX(0.9300);transform-origin:center;font-family:'Liberation Sans', sans-serif;">White</span>
<span class="t" style="left:154.3px;top:207.2px;font-size:12.5px;color:#000;transform:scaleX(0.8600);transform-origin:right;font-family:'Liberation Sans', sans-serif;">0.2753</span>
<span class="t" style="left:154.3px;top:232.2px;font-size:12.5px;color:#000;transform:scaleX(0.8600);transform-origin:right;font-family:'Liberation Sans', sans-serif;">0.2745</span>
<span class="t" style="left:154.3px;top:257.2px;font-size:12.5px;color:#000;transform:scaleX(0.8600);transform-origin:right;font-family:'Liberation Sans', sans-serif;">78.313</span>
<span class="t" style="left:168.2px;top:282.2px;font-size:12.5px;font-weight:bold;color:#000;transform:scaleX(0.9300);transform-origin:right;font-family:'Liberation Sans', sans-serif;">19.9</span>
<span class="t" style="left:154.3px;top:307.2px;font-size:12.5px;color:#000;transform:scaleX(0.8600);transform-origin:right;font-family:'Liberation Sans', sans-serif;">0.0661</span>
<span class="t" style="left:149.4px;top:332.2px;font-size:12.5px;color:#000;transform:scaleX(0.8600);transform-origin:right;font-family:'Liberation Sans', sans-serif;">-17.0 %</span>
<span class="t" style="left:226.8px;top:184.0px;font-size:12.5px;font-weight:bold;color:#fff;transform:scaleX(0.9300);transform-origin:center;font-family:'Liberation Sans', sans-serif;">Black</span>
<span class="t" style="left:251.3px;top:207.2px;font-size:12.5px;color:#000;transform:scaleX(0.8600);transform-origin:right;font-family:'Liberation Sans', sans-serif;">0.2197</span>
<span class="t" style="left:251.3px;top:232.2px;font-size:12.5px;color:#000;transform:scaleX(0.8600);transform-origin:right;font-family:'Liberation Sans', sans-serif;">0.1872</span>
<span class="t" style="left:258.2px;top:257.2px;font-size:12.5px;color:#000;transform:scaleX(0.8600);transform-origin:right;font-family:'Liberation Sans', sans-serif;">0.037</span>
<span class="t" style="left:272.1px;top:282.2px;font-size:12.5px;font-weight:bold;color:#000;transform:scaleX(0.9300);transform-origin:right;font-family:'Liberation Sans', sans-serif;">1.9</span>
<span class="t" style="left:251.3px;top:307.2px;font-size:12.5px;color:#000;transform:scaleX(0.8600);transform-origin:right;font-family:'Liberation Sans', sans-serif;">0.1696</span>
<span class="t" style="left:254.4px;top:332.2px;font-size:12.5px;color:#000;transform:scaleX(0.8600);transform-origin:right;font-family:'Liberation Sans', sans-serif;">+inf %</span>
<span class="t" style="left:332.9px;top:184.0px;font-size:12.5px;font-weight:bold;color:#fff;transform:scaleX(0.9300);transform-origin:center;font-family:'Liberation Sans', sans-serif;">2E</span>
<span class="t" style="left:348.3px;top:207.2px;font-size:12.5px;color:#000;transform:scaleX(0.8600);transform-origin:right;font-family:'Liberation Sans', sans-serif;">0.4482</span>
<span class="t" style="left:348.3px;top:232.2px;font-size:12.5px;color:#000;transform:scaleX(0.8600);transform-origin:right;font-family:'Liberation Sans', sans-serif;">0.3501</span>
<span class="t" style="left:355.2px;top:257.2px;font-size:12.5px;color:#000;transform:scaleX(0.8600);transform-origin:right;font-family:'Liberation Sans', sans-serif;">4.410</span>
<span class="t" style="left:362.2px;top:282.2px;font-size:12.5px;font-weight:bold;color:#000;transform:scaleX(0.9300);transform-origin:right;font-family:'Liberation Sans', sans-serif;">10.5</span>
<span class="t" style="left:348.3px;top:307.2px;font-size:12.5px;color:#000;transform:scaleX(0.8600);transform-origin:right;font-family:'Liberation Sans', sans-serif;">0.0488</span>
<span class="t" style="left:343.4px;top:332.2px;font-size:12.5px;color:#000;transform:scaleX(0.8600);transform-origin:right;font-family:'Liberation Sans', sans-serif;">-32.3 %</span>
<span class="t" style="left:430.2px;top:184.0px;font-size:12.5px;font-weight:bold;color:#fff;transform:scaleX(0.9300);transform-origin:center;font-family:'Liberation Sans', sans-serif;">2F</span>
<span class="t" style="left:445.3px;top:207.2px;font-size:12.5px;color:#000;transform:scaleX(0.8600);transform-origin:right;font-family:'Liberation Sans', sans-serif;">0.3881</span>
<span class="t" style="left:445.3px;top:232.2px;font-size:12.5px;color:#000;transform:scaleX(0.8600);transform-origin:right;font-family:'Liberation Sans', sans-serif;">0.3314</span>
<span class="t" style="left:445.3px;top:257.2px;font-size:12.5px;color:#000;transform:scaleX(0.8600);transform-origin:right;font-family:'Liberation Sans', sans-serif;">23.296</span>
<span class="t" style="left:459.2px;top:282.2px;font-size:12.5px;font-weight:bold;color:#000;transform:scaleX(0.9300);transform-origin:right;font-family:'Liberation Sans', sans-serif;">14.5</span>
<span class="t" style="left:445.3px;top:307.2px;font-size:12.5px;color:#000;transform:scaleX(0.8600);transform-origin:right;font-family:'Liberation Sans', sans-serif;">0.0583</span>
<span class="t" style="left:440.4px;top:332.2px;font-size:12.5px;color:#000;transform:scaleX(0.8600);transform-origin:right;font-family:'Liberation Sans', sans-serif;">-22.2 %</span>
<span class="t" style="left:526.5px;top:184.0px;font-size:12.5px;font-weight:bold;color:#000;transform:scaleX(0.9300);transform-origin:center;font-family:'Liberation Sans', sans-serif;">2K</span>
<span class="t" style="left:542.3px;top:207.2px;font-size:12.5px;color:#000;transform:scaleX(0.8600);transform-origin:right;font-family:'Liberation Sans', sans-serif;">0.3562</span>
<span class="t" style="left:542.3px;top:232.2px;font-size:12.5px;color:#000;transform:scaleX(0.8600);transform-origin:right;font-family:'Liberation Sans', sans-serif;">0.3343</span>
<span class="t" style="left:542.3px;top:257.2px;font-size:12.5px;color:#000;transform:scaleX(0.8600);transform-origin:right;font-family:'Liberation Sans', sans-serif;">49.632</span>
<span class="t" style="left:556.2px;top:282.2px;font-size:12.5px;font-weight:bold;color:#000;transform:scaleX(0.9300);transform-origin:right;font-family:'Liberation Sans', sans-serif;">16.8</span>
<span class="t" style="left:542.3px;top:307.2px;font-size:12.5px;color:#000;transform:scaleX(0.8600);transform-origin:right;font-family:'Liberation Sans', sans-serif;">0.0582</span>
<span class="t" style="left:537.4px;top:332.2px;font-size:12.5px;color:#000;transform:scaleX(0.8600);transform-origin:right;font-family:'Liberation Sans', sans-serif;">-18.5 %</span>
<span class="t" style="left:623.5px;top:184.0px;font-size:12.5px;font-weight:bold;color:#000;transform:scaleX(0.9300);transform-origin:center;font-family:'Liberation Sans', sans-serif;">5D</span>
<span class="t" style="left:639.3px;top:207.2px;font-size:12.5px;color:#000;transform:scaleX(0.8600);transform-origin:right;font-family:'Liberation Sans', sans-serif;">0.3392</span>
<span class="t" style="left:640.2px;top:232.2px;font-size:12.5px;color:#000;transform:scaleX(0.8600);transform-origin:right;font-family:'Liberation Sans', sans-serif;">0.3117</span>
<span class="t" style="left:639.3px;top:257.2px;font-size:12.5px;color:#000;transform:scaleX(0.8600);transform-origin:right;font-family:'Liberation Sans', sans-serif;">50.045</span>
<span class="t" style="left:653.2px;top:282.2px;font-size:12.5px;font-weight:bold;color:#000;transform:scaleX(0.9300);transform-origin:right;font-family:'Liberation Sans', sans-serif;">19.8</span>
<span class="t" style="left:639.3px;top:307.2px;font-size:12.5px;color:#000;transform:scaleX(0.8600);transform-origin:right;font-family:'Liberation Sans', sans-serif;">0.0632</span>
<span class="t" style="left:634.4px;top:332.2px;font-size:12.5px;color:#000;transform:scaleX(0.8600);transform-origin:right;font-family:'Liberation Sans', sans-serif;">-18.4 %</span>
<span class="t" style="left:720.9px;top:184.0px;font-size:12.5px;font-weight:bold;color:#000;transform:scaleX(0.9300);transform-origin:center;font-family:'Liberation Sans', sans-serif;">7E</span>
<span class="t" style="left:736.3px;top:207.2px;font-size:12.5px;color:#000;transform:scaleX(0.8600);transform-origin:right;font-family:'Liberation Sans', sans-serif;">0.3883</span>
<span class="t" style="left:736.3px;top:232.2px;font-size:12.5px;color:#000;transform:scaleX(0.8600);transform-origin:right;font-family:'Liberation Sans', sans-serif;">0.3407</span>
<span class="t" style="left:736.3px;top:257.2px;font-size:12.5px;color:#000;transform:scaleX(0.8600);transform-origin:right;font-family:'Liberation Sans', sans-serif;">37.707</span>
<span class="t" style="left:750.2px;top:282.2px;font-size:12.5px;font-weight:bold;color:#000;transform:scaleX(0.9300);transform-origin:right;font-family:'Liberation Sans', sans-serif;">15.0</span>
<span class="t" style="left:736.3px;top:307.2px;font-size:12.5px;color:#000;transform:scaleX(0.8600);transform-origin:right;font-family:'Liberation Sans', sans-serif;">0.0539</span>
<span class="t" style="left:731.4px;top:332.2px;font-size:12.5px;color:#000;transform:scaleX(0.8600);transform-origin:right;font-family:'Liberation Sans', sans-serif;">-21.4 %</span>
<span class="t" style="left:817.7px;top:184.0px;font-size:12.5px;font-weight:bold;color:#fff;transform:scaleX(0.9300);transform-origin:center;font-family:'Liberation Sans', sans-serif;">7F</span>
<span class="t" style="left:832.3px;top:207.2px;font-size:12.5px;color:#000;transform:scaleX(0.8600);transform-origin:right;font-family:'Liberation Sans', sans-serif;">0.3917</span>
<span class="t" style="left:832.3px;top:232.2px;font-size:12.5px;color:#000;transform:scaleX(0.8600);transform-origin:right;font-family:'Liberation Sans', sans-serif;">0.3518</span>
<span class="t" style="left:832.3px;top:257.2px;font-size:12.5px;color:#000;transform:scaleX(0.8600);transform-origin:right;font-family:'Liberation Sans', sans-serif;">22.095</span>
<span class="t" style="left:846.2px;top:282.2px;font-size:12.5px;font-weight:bold;color:#000;transform:scaleX(0.9300);transform-origin:right;font-family:'Liberation Sans', sans-serif;">14.0</span>
<span class="t" style="left:832.3px;top:307.2px;font-size:12.5px;color:#000;transform:scaleX(0.8600);transform-origin:right;font-family:'Liberation Sans', sans-serif;">0.0559</span>
<span class="t" style="left:827.4px;top:332.2px;font-size:12.5px;color:#000;transform:scaleX(0.8600);transform-origin:right;font-family:'Liberation Sans', sans-serif;">-26.8 %</span>
<span class="t" style="left:913.7px;top:184.0px;font-size:12.5px;font-weight:bold;color:#fff;transform:scaleX(0.9300);transform-origin:center;font-family:'Liberation Sans', sans-serif;">7G</span>
<span class="t" style="left:930.3px;top:207.2px;font-size:12.5px;color:#000;transform:scaleX(0.8600);transform-origin:right;font-family:'Liberation Sans', sans-serif;">0.4276</span>
<span class="t" style="left:930.3px;top:232.2px;font-size:12.5px;color:#000;transform:scaleX(0.8600);transform-origin:right;font-family:'Liberation Sans', sans-serif;">0.3670</span>
<span class="t" style="left:937.2px;top:257.2px;font-size:12.5px;color:#000;transform:scaleX(0.8600);transform-origin:right;font-family:'Liberation Sans', sans-serif;">8.837</span>
<span class="t" style="left:944.9px;top:282.2px;font-size:12.5px;font-weight:bold;color:#000;transform:scaleX(0.9300);transform-origin:right;font-family:'Liberation Sans', sans-serif;">11.7</span>
<span class="t" style="left:930.3px;top:307.2px;font-size:12.5px;color:#000;transform:scaleX(0.8600);transform-origin:right;font-family:'Liberation Sans', sans-serif;">0.0500</span>
<span class="t" style="left:925.4px;top:332.2px;font-size:12.5px;color:#000;transform:scaleX(0.8600);transform-origin:right;font-family:'Liberation Sans', sans-serif;">-30.8 %</span>
<span class="t" style="left:1011.5px;top:184.0px;font-size:12.5px;font-weight:bold;color:#fff;transform:scaleX(0.9300);transform-origin:center;font-family:'Liberation Sans', sans-serif;">7H</span>
<span class="t" style="left:1027.3px;top:207.2px;font-size:12.5px;color:#000;transform:scaleX(0.8600);transform-origin:right;font-family:'Liberation Sans', sans-serif;">0.3672</span>
<span class="t" style="left:1027.3px;top:232.2px;font-size:12.5px;color:#000;transform:scaleX(0.8600);transform-origin:right;font-family:'Liberation Sans', sans-serif;">0.3354</span>
<span class="t" style="left:1027.3px;top:257.2px;font-size:12.5px;color:#000;transform:scaleX(0.8600);transform-origin:right;font-family:'Liberation Sans', sans-serif;">26.484</span>
<span class="t" style="left:1041.2px;top:282.2px;font-size:12.5px;font-weight:bold;color:#000;transform:scaleX(0.9300);transform-origin:right;font-family:'Liberation Sans', sans-serif;">15.2</span>
<span class="t" style="left:1027.3px;top:307.2px;font-size:12.5px;color:#000;transform:scaleX(0.8600);transform-origin:right;font-family:'Liberation Sans', sans-serif;">0.0579</span>
<span class="t" style="left:1022.4px;top:332.2px;font-size:12.5px;color:#000;transform:scaleX(0.8600);transform-origin:right;font-family:'Liberation Sans', sans-serif;">-23.6 %</span>
<span class="t" style="left:1100.8px;top:184.0px;font-size:12.5px;font-weight:bold;color:#fff;transform:scaleX(0.9300);transform-origin:center;font-family:'Liberation Sans', sans-serif;">7I</span>
<span class="t" style="left:1103.3px;top:207.2px;font-size:12.5px;color:#000;transform:scaleX(0.8600);transform-origin:right;font-family:'Liberation Sans', sans-serif;">0.4840</span>
<span class="t" style="left:1103.3px;top:232.2px;font-size:12.5px;color:#000;transform:scaleX(0.8600);transform-origin:right;font-family:'Liberation Sans', sans-serif;">0.3778</span>
<span class="t" style="left:1110.2px;top:257.2px;font-size:12.5px;color:#000;transform:scaleX(0.8600);transform-origin:right;font-family:'Liberation Sans', sans-serif;">9.246</span>
<span class="t" style="left:1117.9px;top:282.2px;font-size:12.5px;font-weight:bold;color:#000;transform:scaleX(0.9300);transform-origin:right;font-family:'Liberation Sans', sans-serif;">11.6</span>
<span class="t" style="left:1103.3px;top:307.2px;font-size:12.5px;color:#000;transform:scaleX(0.8600);transform-origin:right;font-family:'Liberation Sans', sans-serif;">0.0446</span>
<span class="t" style="left:1098.4px;top:332.2px;font-size:12.5px;color:#000;transform:scaleX(0.8600);transform-origin:right;font-family:'Liberation Sans', sans-serif;">-31.3 %</span>
<span class="t" style="left:1175.5px;top:184.0px;font-size:12.5px;font-weight:bold;color:#fff;transform:scaleX(0.9300);transform-origin:center;font-family:'Liberation Sans', sans-serif;">7J</span>
<span class="t" style="left:1180.3px;top:207.2px;font-size:12.5px;color:#000;transform:scaleX(0.8600);transform-origin:right;font-family:'Liberation Sans', sans-serif;">0.4195</span>
<span class="t" style="left:1180.3px;top:232.2px;font-size:12.5px;color:#000;transform:scaleX(0.8600);transform-origin:right;font-family:'Liberation Sans', sans-serif;">0.3386</span>
<span class="t" style="left:1180.3px;top:257.2px;font-size:12.5px;color:#000;transform:scaleX(0.8600);transform-origin:right;font-family:'Liberation Sans', sans-serif;">22.572</span>
<span class="t" style="left:1194.2px;top:282.2px;font-size:12.5px;font-weight:bold;color:#000;transform:scaleX(0.9300);transform-origin:right;font-family:'Liberation Sans', sans-serif;">13.3</span>
<span class="t" style="left:1180.3px;top:307.2px;font-size:12.5px;color:#000;transform:scaleX(0.8600);transform-origin:right;font-family:'Liberation Sans', sans-serif;">0.0521</span>
<span class="t" style="left:1175.4px;top:332.2px;font-size:12.5px;color:#000;transform:scaleX(0.8600);transform-origin:right;font-family:'Liberation Sans', sans-serif;">-25.1 %</span>
<span class="t" style="left:1253.5px;top:184.0px;font-size:12.5px;font-weight:bold;color:#fff;transform:scaleX(0.9300);transform-origin:center;font-family:'Liberation Sans', sans-serif;">8D</span>
<span class="t" style="left:1261.3px;top:207.2px;font-size:12.5px;color:#000;transform:scaleX(0.8600);transform-origin:right;font-family:'Liberation Sans', sans-serif;">0.3912</span>
<span class="t" style="left:1261.3px;top:232.2px;font-size:12.5px;color:#000;transform:scaleX(0.8600);transform-origin:right;font-family:'Liberation Sans', sans-serif;">0.3260</span>
<span class="t" style="left:1261.3px;top:257.2px;font-size:12.5px;color:#000;transform:scaleX(0.8600);transform-origin:right;font-family:'Liberation Sans', sans-serif;">22.560</span>
<span class="t" style="left:1275.2px;top:282.2px;font-size:12.5px;font-weight:bold;color:#000;transform:scaleX(0.9300);transform-origin:right;font-family:'Liberation Sans', sans-serif;">14.9</span>
<span class="t" style="left:1261.3px;top:307.2px;font-size:12.5px;color:#000;transform:scaleX(0.8600);transform-origin:right;font-family:'Liberation Sans', sans-serif;">0.0577</span>
<span class="t" style="left:1256.4px;top:332.2px;font-size:12.5px;color:#000;transform:scaleX(0.8600);transform-origin:right;font-family:'Liberation Sans', sans-serif;">-26.2 %</span>
<span class="t" style="left:1332.9px;top:184.0px;font-size:12.5px;font-weight:bold;color:#000;transform:scaleX(0.9300);transform-origin:center;font-family:'Liberation Sans', sans-serif;">8E</span>
<span class="t" style="left:1338.3px;top:207.2px;font-size:12.5px;color:#000;transform:scaleX(0.8600);transform-origin:right;font-family:'Liberation Sans', sans-serif;">0.4106</span>
<span class="t" style="left:1338.3px;top:232.2px;font-size:12.5px;color:#000;transform:scaleX(0.8600);transform-origin:right;font-family:'Liberation Sans', sans-serif;">0.3338</span>
<span class="t" style="left:1338.3px;top:257.2px;font-size:12.5px;color:#000;transform:scaleX(0.8600);transform-origin:right;font-family:'Liberation Sans', sans-serif;">33.076</span>
<span class="t" style="left:1352.2px;top:282.2px;font-size:12.5px;font-weight:bold;color:#000;transform:scaleX(0.9300);transform-origin:right;font-family:'Liberation Sans', sans-serif;">13.8</span>
<span class="t" style="left:1338.3px;top:307.2px;font-size:12.5px;color:#000;transform:scaleX(0.8600);transform-origin:right;font-family:'Liberation Sans', sans-serif;">0.0525</span>
<span class="t" style="left:1333.4px;top:332.2px;font-size:12.5px;color:#000;transform:scaleX(0.8600);transform-origin:right;font-family:'Liberation Sans', sans-serif;">-22.4 %</span>
<span class="t" style="left:1411.2px;top:184.0px;font-size:12.5px;font-weight:bold;color:#fff;transform:scaleX(0.9300);transform-origin:center;font-family:'Liberation Sans', sans-serif;">8F</span>
<span class="t" style="left:1417.3px;top:207.2px;font-size:12.5px;color:#000;transform:scaleX(0.8600);transform-origin:right;font-family:'Liberation Sans', sans-serif;">0.3779</span>
<span class="t" style="left:1417.3px;top:232.2px;font-size:12.5px;color:#000;transform:scaleX(0.8600);transform-origin:right;font-family:'Liberation Sans', sans-serif;">0.3399</span>
<span class="t" style="left:1417.3px;top:257.2px;font-size:12.5px;color:#000;transform:scaleX(0.8600);transform-origin:right;font-family:'Liberation Sans', sans-serif;">23.959</span>
<span class="t" style="left:1431.2px;top:282.2px;font-size:12.5px;font-weight:bold;color:#000;transform:scaleX(0.9300);transform-origin:right;font-family:'Liberation Sans', sans-serif;">14.4</span>
<span class="t" style="left:1417.3px;top:307.2px;font-size:12.5px;color:#000;transform:scaleX(0.8600);transform-origin:right;font-family:'Liberation Sans', sans-serif;">0.0573</span>
<span class="t" style="left:1412.4px;top:332.2px;font-size:12.5px;color:#000;transform:scaleX(0.8600);transform-origin:right;font-family:'Liberation Sans', sans-serif;">-24.8 %</span>
<span class="t" style="left:1490.2px;top:184.0px;font-size:12.5px;font-weight:bold;color:#fff;transform:scaleX(0.9300);transform-origin:center;font-family:'Liberation Sans', sans-serif;">8G</span>
<span class="t" style="left:1498.3px;top:207.2px;font-size:12.5px;color:#000;transform:scaleX(0.8600);transform-origin:right;font-family:'Liberation Sans', sans-serif;">0.3813</span>
<span class="t" style="left:1498.3px;top:232.2px;font-size:12.5px;color:#000;transform:scaleX(0.8600);transform-origin:right;font-family:'Liberation Sans', sans-serif;">0.3347</span>
<span class="t" style="left:1498.3px;top:257.2px;font-size:12.5px;color:#000;transform:scaleX(0.8600);transform-origin:right;font-family:'Liberation Sans', sans-serif;">22.826</span>
<span class="t" style="left:1512.2px;top:282.2px;font-size:12.5px;font-weight:bold;color:#000;transform:scaleX(0.9300);transform-origin:right;font-family:'Liberation Sans', sans-serif;">14.6</span>
<span class="t" style="left:1498.3px;top:307.2px;font-size:12.5px;color:#000;transform:scaleX(0.8600);transform-origin:right;font-family:'Liberation Sans', sans-serif;">0.0568</span>
<span class="t" style="left:1493.4px;top:332.2px;font-size:12.5px;color:#000;transform:scaleX(0.8600);transform-origin:right;font-family:'Liberation Sans', sans-serif;">-26.2 %</span>
<span class="t" style="left:1571.5px;top:184.0px;font-size:12.5px;font-weight:bold;color:#fff;transform:scaleX(0.9300);transform-origin:center;font-family:'Liberation Sans', sans-serif;">8H</span>
<span class="t" style="left:1579.3px;top:207.2px;font-size:12.5px;color:#000;transform:scaleX(0.8600);transform-origin:right;font-family:'Liberation Sans', sans-serif;">0.3777</span>
<span class="t" style="left:1579.3px;top:232.2px;font-size:12.5px;color:#000;transform:scaleX(0.8600);transform-origin:right;font-family:'Liberation Sans', sans-serif;">0.3399</span>
<span class="t" style="left:1579.3px;top:257.2px;font-size:12.5px;color:#000;transform:scaleX(0.8600);transform-origin:right;font-family:'Liberation Sans', sans-serif;">23.946</span>
<span class="t" style="left:1593.2px;top:282.2px;font-size:12.5px;font-weight:bold;color:#000;transform:scaleX(0.9300);transform-origin:right;font-family:'Liberation Sans', sans-serif;">14.4</span>
<span class="t" style="left:1579.3px;top:307.2px;font-size:12.5px;color:#000;transform:scaleX(0.8600);transform-origin:right;font-family:'Liberation Sans', sans-serif;">0.0574</span>
<span class="t" style="left:1574.4px;top:332.2px;font-size:12.5px;color:#000;transform:scaleX(0.8600);transform-origin:right;font-family:'Liberation Sans', sans-serif;">-24.9 %</span>
<span class="t" style="left:1652.3px;top:184.0px;font-size:12.5px;font-weight:bold;color:#fff;transform:scaleX(0.9300);transform-origin:center;font-family:'Liberation Sans', sans-serif;">8I</span>
<span class="t" style="left:1654.3px;top:207.2px;font-size:12.5px;color:#000;transform:scaleX(0.8600);transform-origin:right;font-family:'Liberation Sans', sans-serif;">0.4326</span>
<span class="t" style="left:1654.3px;top:232.2px;font-size:12.5px;color:#000;transform:scaleX(0.8600);transform-origin:right;font-family:'Liberation Sans', sans-serif;">0.3752</span>
<span class="t" style="left:1661.2px;top:257.2px;font-size:12.5px;color:#000;transform:scaleX(0.8600);transform-origin:right;font-family:'Liberation Sans', sans-serif;">5.576</span>
<span class="t" style="left:1668.2px;top:282.2px;font-size:12.5px;font-weight:bold;color:#000;transform:scaleX(0.9300);transform-origin:right;font-family:'Liberation Sans', sans-serif;">10.6</span>
<span class="t" style="left:1654.3px;top:307.2px;font-size:12.5px;color:#000;transform:scaleX(0.8600);transform-origin:right;font-family:'Liberation Sans', sans-serif;">0.0542</span>
<span class="t" style="left:1649.4px;top:332.2px;font-size:12.5px;color:#000;transform:scaleX(0.8600);transform-origin:right;font-family:'Liberation Sans', sans-serif;">-34.7 %</span>
<span class="t" style="left:1725.5px;top:184.0px;font-size:12.5px;font-weight:bold;color:#fff;transform:scaleX(0.9300);transform-origin:center;font-family:'Liberation Sans', sans-serif;">8J</span>
<span class="t" style="left:1729.3px;top:207.2px;font-size:12.5px;color:#000;transform:scaleX(0.8600);transform-origin:right;font-family:'Liberation Sans', sans-serif;">0.4081</span>
<span class="t" style="left:1729.3px;top:232.2px;font-size:12.5px;color:#000;transform:scaleX(0.8600);transform-origin:right;font-family:'Liberation Sans', sans-serif;">0.3441</span>
<span class="t" style="left:1729.3px;top:257.2px;font-size:12.5px;color:#000;transform:scaleX(0.8600);transform-origin:right;font-family:'Liberation Sans', sans-serif;">25.774</span>
<span class="t" style="left:1743.2px;top:282.2px;font-size:12.5px;font-weight:bold;color:#000;transform:scaleX(0.9300);transform-origin:right;font-family:'Liberation Sans', sans-serif;">13.0</span>
<span class="t" style="left:1729.3px;top:307.2px;font-size:12.5px;color:#000;transform:scaleX(0.8600);transform-origin:right;font-family:'Liberation Sans', sans-serif;">0.0538</span>
<span class="t" style="left:1724.4px;top:332.2px;font-size:12.5px;color:#000;transform:scaleX(0.8600);transform-origin:right;font-family:'Liberation Sans', sans-serif;">-19.4 %</span>
<span class="t" style="left:1822.4px;top:166.1px;font-size:12px;font-weight:bold;color:#3c3c48;transform:scaleX(1.1081);transform-origin:left;font-family:'Liberation Sans', sans-serif;">Display</span>
<span class="t" style="left:1839.0px;top:181.7px;font-size:13px;color:#9a9a9a;transform:scaleX(0.9500);transform-origin:left;font-family:'Liberation Sans', sans-serif;">Sensor</span>
<span class="t" style="left:1839.0px;top:197.5px;font-size:13px;color:#111;transform:scaleX(0.9500);transform-origin:left;font-family:'Liberation Sans', sans-serif;">RGB</span>
<span class="t" style="left:1839.0px;top:213.3px;font-size:13px;color:#111;transform:scaleX(0.9500);transform-origin:left;font-family:'Liberation Sans', sans-serif;">XYZ</span>
<span class="t" style="left:1839.0px;top:229.1px;font-size:13px;color:#111;transform:scaleX(0.9500);transform-origin:left;font-family:'Liberation Sans', sans-serif;">xyz</span>
<span class="t" style="left:1839.0px;top:244.9px;font-size:13px;color:#111;transform:scaleX(0.9500);transform-origin:left;font-family:'Liberation Sans', sans-serif;">xyY</span>
<span class="t" style="left:1863.5px;top:273.6px;font-size:13.5px;color:#111;font-family:'Liberation Sans', sans-serif;">Go</span>
<span class="t" style="left:1851.0px;top:303.6px;font-size:13.5px;color:#111;font-family:'Liberation Sans', sans-serif;">Delete</span>
<span class="t" style="left:1858.0px;top:333.6px;font-size:13.5px;color:#111;font-family:'Liberation Sans', sans-serif;">Refs</span>
<span class="t" style="left:1835.0px;top:361.0px;font-size:13px;color:#111;transform:scaleX(1.0711);transform-origin:left;font-family:'Liberation Sans', sans-serif;">Edit</span>
<span class="t" style="left:12.0px;top:390.3px;font-size:12px;font-weight:bold;color:#3c3c48;transform:scaleX(1.1337);transform-origin:left;font-family:'Liberation Sans', sans-serif;">Selected color</span>
<span class="t" style="left:18.0px;top:410.0px;font-size:13px;color:#111;transform:scaleX(0.9802);transform-origin:left;font-family:'Liberation Sans', sans-serif;">RGB Levels</span>
<span class="t" style="left:241.0px;top:408.0px;font-size:13px;color:#111;transform:scaleX(1.0867);transform-origin:left;font-family:'Liberation Sans', sans-serif;">Current Measure</span>
<span class="t" style="left:26.0px;top:496.7px;font-size:11px;font-weight:bold;color:#222;transform:scaleX(1.0101);transform-origin:left;font-family:'Liberation Serif', serif;">0.0%</span>
<span class="t" style="left:77.0px;top:496.7px;font-size:11px;font-weight:bold;color:#222;transform:scaleX(1.0101);transform-origin:left;font-family:'Liberation Serif', serif;">0.0%</span>
<span class="t" style="left:128.0px;top:496.7px;font-size:11px;font-weight:bold;color:#222;transform:scaleX(1.0101);transform-origin:left;font-family:'Liberation Serif', serif;">0.0%</span>
<span class="t" style="left:175.0px;top:496.7px;font-size:11px;font-weight:bold;color:#222;transform:scaleX(1.1011);transform-origin:left;font-family:'Liberation Serif', serif;">dE 0.0</span>
<span class="t" style="left:54.7px;top:536.2px;font-size:12.5px;font-weight:bold;color:#111;transform:scaleX(1.0797);transform-origin:center;font-family:'Liberation Sans', sans-serif;">No</span>
<span class="t" style="left:37.6px;top:551.9px;font-size:12.5px;font-weight:bold;color:#111;transform:scaleX(1.1038);transform-origin:center;font-family:'Liberation Sans', sans-serif;">Measure</span>
<span class="t" style="left:150.7px;top:536.2px;font-size:12.5px;font-weight:bold;color:#111;transform:scaleX(1.0797);transform-origin:center;font-family:'Liberation Sans', sans-serif;">No</span>
<span class="t" style="left:133.6px;top:551.9px;font-size:12.5px;font-weight:bold;color:#111;transform:scaleX(1.1038);transform-origin:center;font-family:'Liberation Sans', sans-serif;">Measure</span>
<span class="t" style="left:18.0px;top:623.0px;font-size:13px;color:#111;transform:scaleX(1.1068);transform-origin:left;font-family:'Liberation Sans', sans-serif;">Target</span>
<span class="t" style="left:226.0px;top:437.4px;font-size:12.5px;font-weight:bold;color:#111;transform:scaleX(0.9000);transform-origin:center;font-family:'Liberation Sans', sans-serif;">Y cd/m&#178;</span>
<span class="t" style="left:234.7px;top:460.5px;font-size:12.5px;font-weight:bold;color:#111;transform:scaleX(0.9000);transform-origin:center;font-family:'Liberation Sans', sans-serif;">Y ftL</span>
<span class="t" style="left:242.2px;top:483.5px;font-size:12.5px;font-weight:bold;color:#111;transform:scaleX(0.9000);transform-origin:center;font-family:'Liberation Sans', sans-serif;">T&#176;</span>
<span class="t" style="left:244.3px;top:506.5px;font-size:12.5px;font-weight:bold;color:#111;transform:scaleX(0.9000);transform-origin:center;font-family:'Liberation Sans', sans-serif;">X</span>
<span class="t" style="left:244.3px;top:529.6px;font-size:12.5px;font-weight:bold;color:#111;transform:scaleX(0.9000);transform-origin:center;font-family:'Liberation Sans', sans-serif;">Y</span>
<span class="t" style="left:244.7px;top:552.6px;font-size:12.5px;font-weight:bold;color:#111;transform:scaleX(0.9000);transform-origin:center;font-family:'Liberation Sans', sans-serif;">Z</span>
<span class="t" style="left:244.0px;top:575.7px;font-size:12.5px;font-weight:bold;color:#111;transform:scaleX(0.9000);transform-origin:center;font-family:'Liberation Sans', sans-serif;">R</span>
<span class="t" style="left:243.6px;top:598.7px;font-size:12.5px;font-weight:bold;color:#111;transform:scaleX(0.9000);transform-origin:center;font-family:'Liberation Sans', sans-serif;">G</span>
<span class="t" style="left:244.0px;top:621.7px;font-size:12.5px;font-weight:bold;color:#111;transform:scaleX(0.9000);transform-origin:center;font-family:'Liberation Sans', sans-serif;">B</span>
<span class="t" style="left:245.0px;top:644.8px;font-size:12.5px;font-weight:bold;color:#111;transform:scaleX(0.9000);transform-origin:center;font-family:'Liberation Sans', sans-serif;">x</span>
<span class="t" style="left:245.0px;top:667.8px;font-size:12.5px;font-weight:bold;color:#111;transform:scaleX(0.9000);transform-origin:center;font-family:'Liberation Sans', sans-serif;">y</span>
<span class="t" style="left:244.3px;top:690.9px;font-size:12.5px;font-weight:bold;color:#111;transform:scaleX(0.9000);transform-origin:center;font-family:'Liberation Sans', sans-serif;">Y</span>
<span class="t" style="left:245.0px;top:713.9px;font-size:12.5px;font-weight:bold;color:#111;transform:scaleX(0.9000);transform-origin:center;font-family:'Liberation Sans', sans-serif;">x</span>
<span class="t" style="left:245.0px;top:736.9px;font-size:12.5px;font-weight:bold;color:#111;transform:scaleX(0.9000);transform-origin:center;font-family:'Liberation Sans', sans-serif;">y</span>
<span class="t" style="left:245.4px;top:760.0px;font-size:12.5px;font-weight:bold;color:#111;transform:scaleX(0.9000);transform-origin:center;font-family:'Liberation Sans', sans-serif;">z</span>
<span class="t" style="left:244.7px;top:783.0px;font-size:12.5px;font-weight:bold;color:#111;transform:scaleX(0.9000);transform-origin:center;font-family:'Liberation Sans', sans-serif;">L</span>
<span class="t" style="left:245.0px;top:806.1px;font-size:12.5px;font-weight:bold;color:#111;transform:scaleX(0.9000);transform-origin:center;font-family:'Liberation Sans', sans-serif;">a</span>
<span class="t" style="left:244.7px;top:829.1px;font-size:12.5px;font-weight:bold;color:#111;transform:scaleX(0.9000);transform-origin:center;font-family:'Liberation Sans', sans-serif;">b</span>
<span class="t" style="left:244.7px;top:852.1px;font-size:12.5px;font-weight:bold;color:#111;transform:scaleX(0.9000);transform-origin:center;font-family:'Liberation Sans', sans-serif;">L</span>
<span class="t" style="left:244.0px;top:875.2px;font-size:12.5px;font-weight:bold;color:#111;transform:scaleX(0.9000);transform-origin:center;font-family:'Liberation Sans', sans-serif;">C</span>
<span class="t" style="left:244.0px;top:898.2px;font-size:12.5px;font-weight:bold;color:#111;transform:scaleX(0.9000);transform-origin:center;font-family:'Liberation Sans', sans-serif;">H</span>
<span class="t" style="left:244.7px;top:921.3px;font-size:12.5px;font-weight:bold;color:#111;transform:scaleX(0.9000);transform-origin:center;font-family:'Liberation Sans', sans-serif;">L</span>
<span class="t" style="left:243.3px;top:944.3px;font-size:12.5px;font-weight:bold;color:#111;transform:scaleX(0.9000);transform-origin:center;font-family:'Liberation Sans', sans-serif;">M</span>
<span class="t" style="left:244.3px;top:967.3px;font-size:12.5px;font-weight:bold;color:#111;transform:scaleX(0.9000);transform-origin:center;font-family:'Liberation Sans', sans-serif;">S</span>
<span class="t" style="left:328.7px;top:921.3px;font-size:12.5px;color:#111;transform:scaleX(0.8600);transform-origin:right;font-family:'Liberation Sans', sans-serif;">0.04</span>
<span class="t" style="left:328.7px;top:944.3px;font-size:12.5px;color:#111;transform:scaleX(0.8600);transform-origin:right;font-family:'Liberation Sans', sans-serif;">0.04</span>
<span class="t" style="left:328.7px;top:967.3px;font-size:12.5px;color:#111;transform:scaleX(0.8600);transform-origin:right;font-family:'Liberation Sans', sans-serif;">0.10</span>
<span class="t" style="left:398.5px;top:390.5px;font-size:12px;font-weight:bold;color:#3c3c48;transform:scaleX(1.1591);transform-origin:left;font-family:'Liberation Sans', sans-serif;">Information</span>
<span class="t" style="left:403.0px;top:417.0px;font-size:13px;color:#111;transform:scaleX(1.0346);transform-origin:left;font-family:'Liberation Sans', sans-serif;">CIE Diagram</span>
<span class="t" style="left:66.0px;top:1046.2px;font-size:11px;font-weight:bold;color:#000;transform:scaleX(0.9849);transform-origin:left;font-family:'Liberation Sans', sans-serif;">Measures</span>
<span class="t" style="left:134.0px;top:1046.2px;font-size:11px;color:#111;transform:scaleX(0.8360);transform-origin:left;font-family:'Liberation Sans', sans-serif;">Luminance</span>
<span class="t" style="left:200.0px;top:1046.2px;font-size:11px;color:#111;transform:scaleX(0.8435);transform-origin:left;font-family:'Liberation Sans', sans-serif;">Gamma</span>
<span class="t" style="left:255.0px;top:1046.2px;font-size:11px;color:#111;transform:scaleX(0.8517);transform-origin:left;font-family:'Liberation Sans', sans-serif;">RGB Levels</span>
<span class="t" style="left:332.0px;top:1046.2px;font-size:11px;color:#111;transform:scaleX(0.8347);transform-origin:left;font-family:'Liberation Sans', sans-serif;">Color temperature</span>
<span class="t" style="left:1862.0px;top:1044.9px;font-size:12.5px;color:#111;transform:scaleX(0.8494);transform-origin:left;font-family:'Liberation Sans', sans-serif;">Reference</span>
<span class="t" style="left:3.0px;top:1065.4px;font-size:12.5px;color:#111;transform:scaleX(0.8854);transform-origin:left;font-family:'Liberation Sans', sans-serif;">Ready</span>
<span class="t" style="left:1853.0px;top:1066.4px;font-size:12.5px;color:#111;transform:scaleX(0.9835);transform-origin:left;font-family:'Liberation Sans', sans-serif;">NUM</span>
<span class="t" style="left:712.0px;top:475.6px;font-size:13px;color:#e6e6e6;transform:scaleX(1.6381);transform-origin:left;font-family:'Liberation Serif', serif;">520 nm</span>
<span class="t" style="left:959.6px;top:526.2px;font-size:13px;color:#e6e6e6;transform:scaleX(1.6356);transform-origin:left;font-family:'Liberation Serif', serif;">540 nm</span>
<span class="t" style="left:447.2px;top:648.3px;font-size:13px;color:#e6e6e6;transform:scaleX(1.6559);transform-origin:left;font-family:'Liberation Serif', serif;">500 nm</span>
<span class="t" style="left:1187.5px;top:599.6px;font-size:13px;color:#e6e6e6;transform:scaleX(1.6381);transform-origin:left;font-family:'Liberation Serif', serif;">560 nm</span>
<span class="t" style="left:1348.0px;top:653.2px;font-size:13px;color:#e6e6e6;transform:scaleX(1.6508);transform-origin:left;font-family:'Liberation Serif', serif;">580 nm</span>
<span class="t" style="left:1457.8px;top:691.9px;font-size:13px;color:#e6e6e6;transform:scaleX(1.6737);transform-origin:left;font-family:'Liberation Serif', serif;">600 nm</span>
<span class="t" style="left:1562.8px;top:726.8px;font-size:13px;color:#e6e6e6;transform:scaleX(1.6533);transform-origin:left;font-family:'Liberation Serif', serif;">620 nm</span>
<span class="t" style="left:1674.7px;top:765.4px;font-size:13px;color:#e6e6e6;transform:scaleX(1.6533);transform-origin:left;font-family:'Liberation Serif', serif;">640 nm</span>
<span class="t" style="left:1724.2px;top:782.3px;font-size:13px;color:#e6e6e6;transform:scaleX(1.6533);transform-origin:left;font-family:'Liberation Serif', serif;">660 nm</span>
<span class="t" style="left:1743.8px;top:788.8px;font-size:13px;color:#e6e6e6;transform:scaleX(1.6546);transform-origin:left;font-family:'Liberation Serif', serif;">680 nm</span>
<span class="t" style="left:573.1px;top:881.8px;font-size:13px;color:#e6e6e6;transform:scaleX(1.6483);transform-origin:left;font-family:'Liberation Serif', serif;">480 nm</span>
<span class="t" style="left:645.8px;top:944.8px;font-size:13px;color:#e6e6e6;transform:scaleX(1.6533);transform-origin:left;font-family:'Liberation Serif', serif;">460 nm</span>
<span class="t" style="left:669.6px;top:960.6px;font-size:13px;color:#e6e6e6;transform:scaleX(1.6533);transform-origin:left;font-family:'Liberation Serif', serif;">440 nm</span>
<span class="t" style="left:685.5px;top:968.0px;font-size:13px;color:#e6e6e6;transform:scaleX(1.6533);transform-origin:left;font-family:'Liberation Serif', serif;">420 nm</span>
<span class="t" style="left:404.2px;top:904.9px;font-size:13px;color:#d4d4d4;transform:scaleX(1.0462);transform-origin:left;font-family:'Liberation Serif', serif;">0.1</span>
<span class="t" style="left:404.2px;top:848.8px;font-size:13px;color:#d4d4d4;transform:scaleX(1.0462);transform-origin:left;font-family:'Liberation Serif', serif;">0.2</span>
<span class="t" style="left:404.2px;top:792.6px;font-size:13px;color:#d4d4d4;transform:scaleX(1.0462);transform-origin:left;font-family:'Liberation Serif', serif;">0.3</span>
<span class="t" style="left:404.2px;top:736.4px;font-size:13px;color:#d4d4d4;transform:scaleX(1.0462);transform-origin:left;font-family:'Liberation Serif', serif;">0.4</span>
<span class="t" style="left:404.2px;top:680.2px;font-size:13px;color:#d4d4d4;transform:scaleX(1.0462);transform-origin:left;font-family:'Liberation Serif', serif;">0.5</span>
<span class="t" style="left:404.2px;top:624.1px;font-size:13px;color:#d4d4d4;transform:scaleX(1.0462);transform-origin:left;font-family:'Liberation Serif', serif;">0.6</span>
<span class="t" style="left:404.2px;top:567.9px;font-size:13px;color:#d4d4d4;transform:scaleX(1.0462);transform-origin:left;font-family:'Liberation Serif', serif;">0.7</span>
<span class="t" style="left:404.2px;top:511.7px;font-size:13px;color:#d4d4d4;transform:scaleX(1.0462);transform-origin:left;font-family:'Liberation Serif', serif;">0.8</span>
<span class="t" style="left:693.4px;top:990.2px;font-size:13px;color:#d4d4d4;transform:scaleX(1.0154);transform-origin:left;font-family:'Liberation Serif', serif;">0.1</span>
<span class="t" style="left:858.8px;top:990.2px;font-size:13px;color:#d4d4d4;transform:scaleX(1.0154);transform-origin:left;font-family:'Liberation Serif', serif;">0.2</span>
<span class="t" style="left:1024.2px;top:990.2px;font-size:13px;color:#d4d4d4;transform:scaleX(1.0154);transform-origin:left;font-family:'Liberation Serif', serif;">0.3</span>
<span class="t" style="left:1189.6px;top:990.2px;font-size:13px;color:#d4d4d4;transform:scaleX(1.0154);transform-origin:left;font-family:'Liberation Serif', serif;">0.4</span>
<span class="t" style="left:1355.0px;top:990.2px;font-size:13px;color:#d4d4d4;transform:scaleX(1.0154);transform-origin:left;font-family:'Liberation Serif', serif;">0.5</span>
<span class="t" style="left:1520.4px;top:990.2px;font-size:13px;color:#d4d4d4;transform:scaleX(1.0154);transform-origin:left;font-family:'Liberation Serif', serif;">0.6</span>
<span class="t" style="left:1685.8px;top:990.2px;font-size:13px;color:#d4d4d4;transform:scaleX(1.0154);transform-origin:left;font-family:'Liberation Serif', serif;">0.7</span>
<span class="t" style="left:1725.0px;top:931.8px;font-size:15px;font-weight:bold;color:#4e4e4e;transform:scaleX(1.0686);transform-origin:left;font-family:'Liberation Sans', sans-serif;">hcfr.sourceforge.net</span>
<span class="t" style="left:969.6px;top:792.5px;font-size:14px;color:#1c1c28;transform:scaleX(0.9786);transform-origin:left;font-family:'Liberation Serif', serif;">9300</span>
<span class="t" style="left:1008.9px;top:778.5px;font-size:14px;color:#1c1c28;transform:scaleX(1.0114);transform-origin:left;font-family:'Liberation Serif', serif;">D65</span>
<span class="t" style="left:1049.6px;top:762.9px;font-size:14px;color:#1c1c28;transform:scaleX(0.9536);transform-origin:left;font-family:'Liberation Serif', serif;">5500</span>
<span class="t" style="left:1128.9px;top:743.7px;font-size:14px;color:#1c1c28;transform:scaleX(0.9536);transform-origin:left;font-family:'Liberation Serif', serif;">4000</span>
<span class="t" style="left:1226.0px;top:727.1px;font-size:14px;color:#1c1c28;transform:scaleX(0.9429);transform-origin:left;font-family:'Liberation Serif', serif;">3000</span>
<span class="t" style="left:1286.9px;top:724.3px;font-size:14px;color:#1c1c28;transform:scaleX(0.9429);transform-origin:left;font-family:'Liberation Serif', serif;">2700</span>
<span class="t" style="left:1106.7px;top:782.1px;font-size:14px;color:#1c1c28;transform:scaleX(0.8198);transform-origin:left;font-family:'Liberation Serif', serif;">D</span>
</body></html>
